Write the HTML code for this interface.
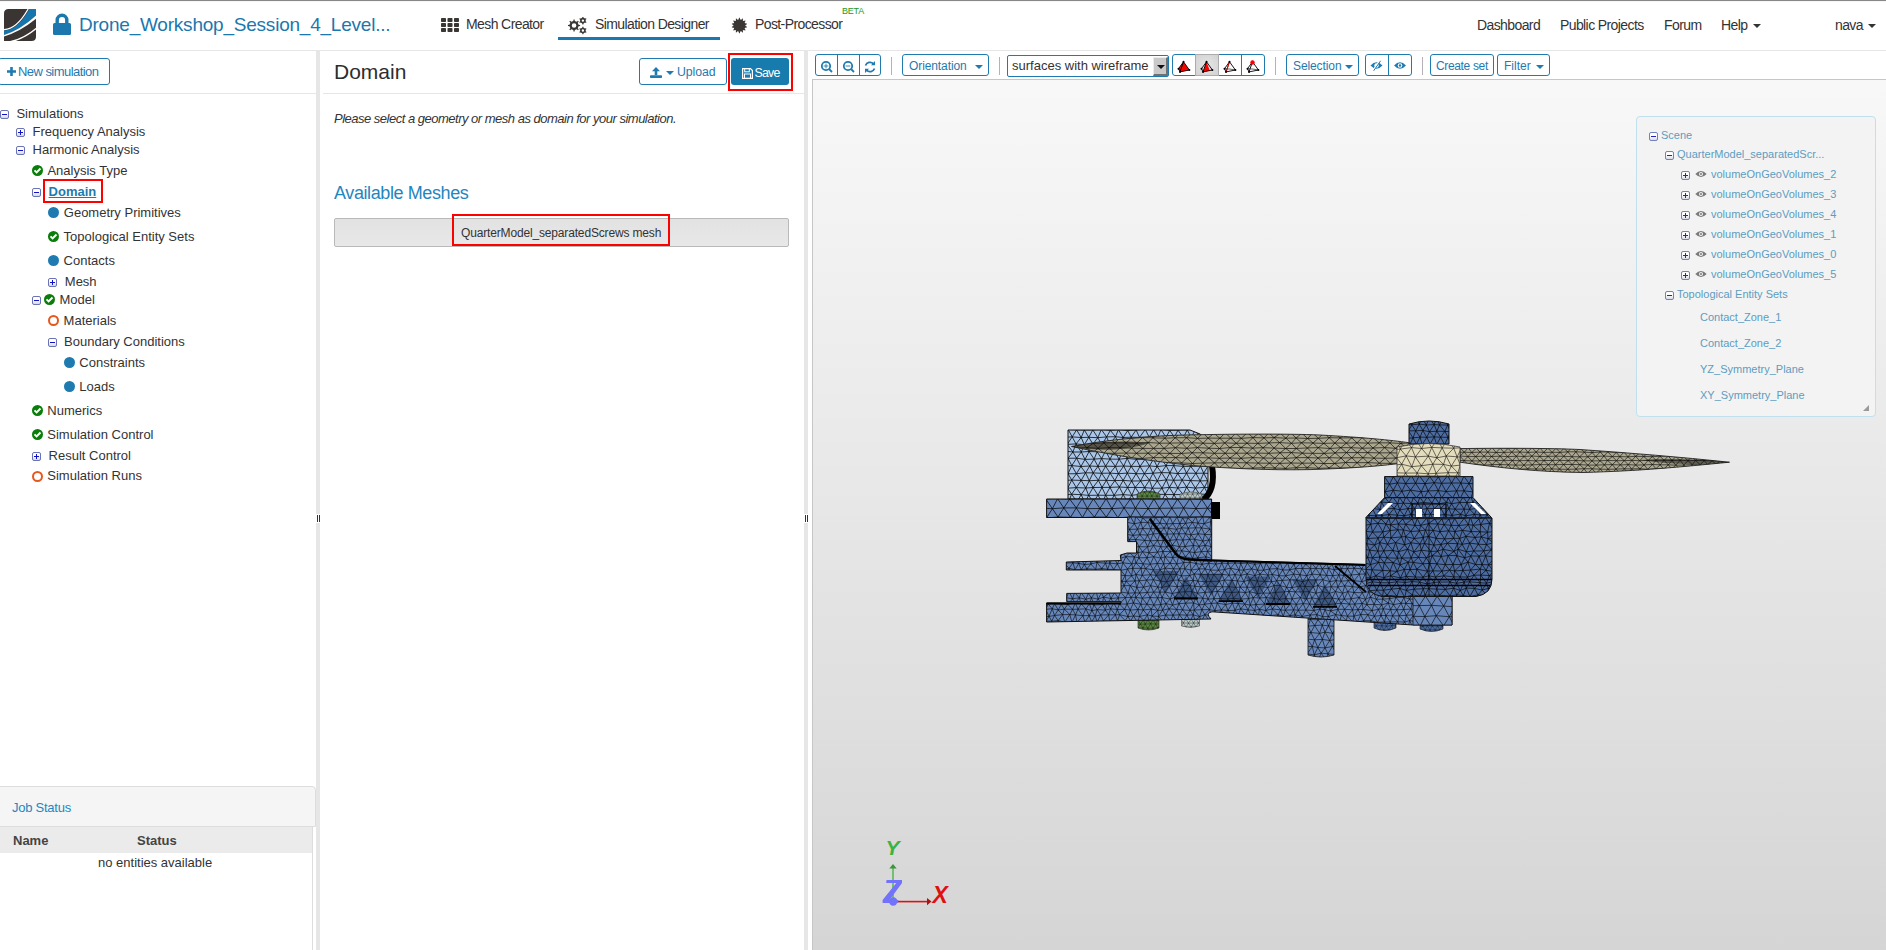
<!DOCTYPE html>
<html><head><meta charset="utf-8">
<style>
*{box-sizing:border-box;margin:0;padding:0}
html,body{width:1886px;height:950px;overflow:hidden;background:#fff;font-family:"Liberation Sans",sans-serif;color:#333}
.a{position:absolute;white-space:nowrap}
.nav{font-size:14px;letter-spacing:-0.6px;color:#333;line-height:18px}
.split{background:#e6e6e6}
.tree{font-size:13px;color:#333;line-height:15px}
.pm{width:9px;height:9px;border:1px solid #6a74b4;border-radius:2px;background:linear-gradient(#fff 40%,#d6d9e4)}
.pm::before{content:"";position:absolute;left:1px;top:2.6px;width:5px;height:1.6px;background:#1010c8}
.pm.plus::after{content:"";position:absolute;left:2.7px;top:0.9px;width:1.6px;height:5px;background:#1010c8}
.chk{width:11px;height:11px;border-radius:50%;background:#0b7d0b}
.dot{width:11px;height:11px;border-radius:50%;background:#1f7ab0}
.ring{width:11px;height:11px;border-radius:50%;border:2.1px solid #e5581e}
.btn{border:1px solid #1f7ab0;border-radius:3px;color:#1f7ab0;font-size:12px;background:#fff;line-height:20px}
.tb{top:54px;height:22px;line-height:22px}
.sep{top:57px;width:1px;height:18px;background:#b8b0b8}
.st{font-size:11px;color:#5e9cc0;line-height:13px}
.spm{width:9px;height:9px;border:1px solid #7680bb;border-radius:2px;background:linear-gradient(#fff 40%,#d9dce6)}
.spm::before{content:"";position:absolute;left:1px;top:2.9px;width:5px;height:1.2px;background:#2020d0}
.spm.plus::after{content:"";position:absolute;left:2.9px;top:1px;width:1.2px;height:5px;background:#2020d0}
.caret{width:0;height:0;border-left:4px solid transparent;border-right:4px solid transparent;border-top:4px solid currentColor}
</style></head>
<body>
<!-- HEADER -->
<div class="a" style="left:0;top:0;width:1886px;height:1px;background:#888"></div>
<div class="a" style="left:0;top:1px;width:1886px;height:1px;background:#f6f6f6"></div>
<div class="a" style="left:0;top:50px;width:1886px;height:1px;background:#e6e6e6"></div>

<svg class="a" style="left:4px;top:9px" width="32" height="32" viewBox="0 0 32 32">
  <defs><clipPath id="lc"><path d="M4.5 0 H32 V27.5 Q32 32 27.5 32 H0 V4.5 Q0 0 4.5 0Z"/></clipPath></defs>
  <g clip-path="url(#lc)">
    <rect width="32" height="32" fill="#3a3532"/>
    <path d="M0 21.4 Q13.4 21.5 25.4 0 L32 0 L32 6.6 Q16 21.3 0 26 Z" fill="#1576ad"/>
    <path d="M-1 20.6 Q12.6 20.8 24.4 -0.5" fill="none" stroke="#fff" stroke-width="1.2"/>
    <path d="M0 26 Q16 21.3 32 6.6 L32 9.8 Q16 22.8 0 27.5 Z" fill="#fff"/>
    <path d="M5 33 Q19.5 30.2 32.6 19.1" fill="none" stroke="#fff" stroke-width="1.5"/>
  </g>
</svg>
<svg class="a" style="left:53px;top:13px" width="18" height="22" viewBox="0 0 18 22">
  <path d="M4.2 10 V7 A4.8 4.8 0 0 1 13.8 7 V10" fill="none" stroke="#1b77ad" stroke-width="3.4"/>
  <rect x="0" y="10" width="18" height="12" rx="1.5" fill="#1b77ad"/>
</svg>
<div class="a" style="left:79px;top:13px;font-size:19px;line-height:24px;color:#1b77ad;letter-spacing:-0.22px">Drone_Workshop_Session_4_Level...</div>

<!-- nav icons -->
<svg class="a" style="left:441px;top:18px" width="18" height="14" viewBox="0 0 18 14">
  <g fill="#3a3634">
  <rect x="0" y="0" width="5" height="4" rx="0.8"/><rect x="6.5" y="0" width="5" height="4" rx="0.8"/><rect x="13" y="0" width="5" height="4" rx="0.8"/>
  <rect x="0" y="5" width="5" height="4" rx="0.8"/><rect x="6.5" y="5" width="5" height="4" rx="0.8"/><rect x="13" y="5" width="5" height="4" rx="0.8"/>
  <rect x="0" y="10" width="5" height="4" rx="0.8"/><rect x="6.5" y="10" width="5" height="4" rx="0.8"/><rect x="13" y="10" width="5" height="4" rx="0.8"/>
  </g>
</svg>
<div class="a nav" style="left:466px;top:15px">Mesh Creator</div>
<svg class="a" style="left:566px;top:17px" width="22" height="18" viewBox="0 0 22 18"><path d="M7.33 3.96 L7.48 2.43 L8.62 2.43 L8.77 3.96 L10.75 4.78 L11.94 3.80 L12.75 4.61 L11.77 5.80 L12.59 7.78 L14.12 7.93 L14.12 9.07 L12.59 9.22 L11.77 11.20 L12.75 12.39 L11.94 13.20 L10.75 12.22 L8.77 13.04 L8.62 14.57 L7.48 14.57 L7.33 13.04 L5.35 12.22 L4.16 13.20 L3.35 12.39 L4.33 11.20 L3.51 9.22 L1.98 9.07 L1.98 7.93 L3.51 7.78 L4.33 5.80 L3.35 4.61 L4.16 3.80 L5.35 4.78ZM10.35 8.50 A2.3 2.3 0 1 0 5.75 8.50 A2.3 2.3 0 1 0 10.35 8.50Z M16.24 0.78 L16.41 -0.27 L17.39 -0.27 L17.56 0.78 L19.01 1.61 L20.01 1.24 L20.50 2.09 L19.68 2.76 L19.68 4.44 L20.50 5.11 L20.01 5.96 L19.01 5.59 L17.56 6.42 L17.39 7.47 L16.41 7.47 L16.24 6.42 L14.79 5.59 L13.79 5.96 L13.30 5.11 L14.12 4.44 L14.12 2.76 L13.30 2.09 L13.79 1.24 L14.79 1.61ZM18.10 3.60 A1.2 1.2 0 1 0 15.70 3.60 A1.2 1.2 0 1 0 18.10 3.60Z M16.24 10.68 L16.41 9.63 L17.39 9.63 L17.56 10.68 L19.01 11.51 L20.01 11.14 L20.50 11.99 L19.68 12.66 L19.68 14.34 L20.50 15.01 L20.01 15.86 L19.01 15.49 L17.56 16.32 L17.39 17.37 L16.41 17.37 L16.24 16.32 L14.79 15.49 L13.79 15.86 L13.30 15.01 L14.12 14.34 L14.12 12.66 L13.30 11.99 L13.79 11.14 L14.79 11.51ZM18.10 13.50 A1.2 1.2 0 1 0 15.70 13.50 A1.2 1.2 0 1 0 18.10 13.50Z" fill="#3a3634" fill-rule="evenodd"/></svg>
<div class="a nav" style="left:595px;top:15px">Simulation Designer</div>
<div class="a" style="left:558px;top:37px;width:162px;height:3px;background:#1b77ad"></div>
<svg class="a" style="left:729px;top:17px" width="20" height="18" viewBox="0 0 20 18"><path d="M9.58 2.46 L10.05 0.81 L10.75 0.81 L11.22 2.46 L12.29 2.70 L13.43 1.42 L14.05 1.72 L13.76 3.41 L14.62 4.09 L16.20 3.43 L16.63 3.97 L15.64 5.37 L16.11 6.36 L17.82 6.45 L17.98 7.13 L16.48 7.95 L16.48 9.05 L17.98 9.87 L17.82 10.55 L16.11 10.64 L15.64 11.63 L16.63 13.03 L16.20 13.57 L14.62 12.91 L13.76 13.59 L14.05 15.28 L13.43 15.58 L12.29 14.30 L11.22 14.54 L10.75 16.19 L10.05 16.19 L9.58 14.54 L8.51 14.30 L7.37 15.58 L6.75 15.28 L7.04 13.59 L6.18 12.91 L4.60 13.57 L4.17 13.03 L5.16 11.63 L4.69 10.64 L2.98 10.55 L2.82 9.87 L4.32 9.05 L4.32 7.95 L2.82 7.13 L2.98 6.45 L4.69 6.36 L5.16 5.37 L4.17 3.97 L4.60 3.43 L6.18 4.09 L7.04 3.41 L6.75 1.72 L7.37 1.42 L8.51 2.70Z" fill="#3a3634"/></svg>
<div class="a nav" style="left:755px;top:15px">Post-Processor</div>
<div class="a" style="left:842px;top:6px;font-size:9px;line-height:10px;color:#1d9a1d;letter-spacing:-0.2px">BETA</div>

<div class="a nav" style="left:1477px;top:16px">Dashboard</div>
<div class="a nav" style="left:1560px;top:16px">Public Projects</div>
<div class="a nav" style="left:1664px;top:16px">Forum</div>
<div class="a nav" style="left:1721px;top:16px">Help</div>
<div class="a caret" style="left:1753px;top:24px;color:#333"></div>
<div class="a nav" style="left:1835px;top:16px">nava</div>
<div class="a caret" style="left:1868px;top:24px;color:#333"></div>

<!-- SPLITTERS -->
<div class="a split" style="left:316px;top:51px;width:4px;height:899px"></div>
<div class="a split" style="left:804px;top:51px;width:4px;height:899px"></div>
<div class="a" style="left:316px;top:514px;width:4px;height:9px;background:#fff"></div>
<div class="a" style="left:804px;top:514px;width:4px;height:9px;background:#fff"></div>
<div class="a" style="left:317px;top:515px;width:1px;height:7px;background:#333"></div>
<div class="a" style="left:319px;top:515px;width:1px;height:7px;background:#333"></div>
<div class="a" style="left:805px;top:515px;width:1px;height:7px;background:#333"></div>
<div class="a" style="left:807px;top:515px;width:1px;height:7px;background:#333"></div>

<!-- LEFT PANEL -->
<div class="a btn" style="left:-2px;top:58px;width:112px;height:27px;font-size:13px;letter-spacing:-0.55px;line-height:25px;padding-left:19px">New simulation</div>
<svg class="a" style="left:7px;top:67px" width="9" height="9" viewBox="0 0 9 9"><path d="M3.2 0h2.6v3.2H9v2.6H5.8V9H3.2V5.8H0V3.2h3.2z" fill="#1f7ab0"/></svg>
<div class="a" style="left:0;top:93px;width:316px;height:1px;background:#e6e6e6"></div>
<div class="a pm" style="left:0px;top:110px"></div>
<div class="a tree" style="left:16.4px;top:105.7px">Simulations</div>
<div class="a pm plus" style="left:16px;top:128px"></div>
<div class="a tree" style="left:32.6px;top:123.7px">Frequency Analysis</div>
<div class="a pm" style="left:16px;top:146px"></div>
<div class="a tree" style="left:32.6px;top:141.7px">Harmonic Analysis</div>
<div class="a chk" style="left:32px;top:165px"><svg width="11" height="11" viewBox="0 0 11 11" style="display:block"><path d="M2.5 5.4 L4.6 7.5 L8.5 3.5" stroke="#fff" stroke-width="1.9" fill="none"/></svg></div>
<div class="a tree" style="left:47.4px;top:162.5px">Analysis Type</div>
<div class="a pm" style="left:32px;top:188px"></div>
<div class="a tree" style="left:48.6px;top:183.6px;font-weight:bold;color:#1f7ab0;text-decoration:underline">Domain</div>
<div class="a dot" style="left:48px;top:207px"></div>
<div class="a tree" style="left:63.8px;top:204.8px">Geometry Primitives</div>
<div class="a chk" style="left:48px;top:231px"><svg width="11" height="11" viewBox="0 0 11 11" style="display:block"><path d="M2.5 5.4 L4.6 7.5 L8.5 3.5" stroke="#fff" stroke-width="1.9" fill="none"/></svg></div>
<div class="a tree" style="left:63.6px;top:228.5px">Topological Entity Sets</div>
<div class="a dot" style="left:48px;top:255px"></div>
<div class="a tree" style="left:63.6px;top:252.8px">Contacts</div>
<div class="a pm plus" style="left:48px;top:278px"></div>
<div class="a tree" style="left:64.8px;top:273.7px">Mesh</div>
<div class="a pm" style="left:32px;top:296px"></div>
<div class="a chk" style="left:44px;top:294px"><svg width="11" height="11" viewBox="0 0 11 11" style="display:block"><path d="M2.5 5.4 L4.6 7.5 L8.5 3.5" stroke="#fff" stroke-width="1.9" fill="none"/></svg></div>
<div class="a tree" style="left:59.5px;top:291.6px">Model</div>
<div class="a ring" style="left:48px;top:315px"></div>
<div class="a tree" style="left:63.6px;top:312.6px">Materials</div>
<div class="a pm" style="left:48px;top:338px"></div>
<div class="a tree" style="left:64.1px;top:334.0px">Boundary Conditions</div>
<div class="a dot" style="left:64px;top:357px"></div>
<div class="a tree" style="left:79.3px;top:354.7px">Constraints</div>
<div class="a dot" style="left:64px;top:381px"></div>
<div class="a tree" style="left:79.3px;top:378.6px">Loads</div>
<div class="a chk" style="left:32px;top:405px"><svg width="11" height="11" viewBox="0 0 11 11" style="display:block"><path d="M2.5 5.4 L4.6 7.5 L8.5 3.5" stroke="#fff" stroke-width="1.9" fill="none"/></svg></div>
<div class="a tree" style="left:47.3px;top:402.5px">Numerics</div>
<div class="a chk" style="left:32px;top:429px"><svg width="11" height="11" viewBox="0 0 11 11" style="display:block"><path d="M2.5 5.4 L4.6 7.5 L8.5 3.5" stroke="#fff" stroke-width="1.9" fill="none"/></svg></div>
<div class="a tree" style="left:47.3px;top:426.6px">Simulation Control</div>
<div class="a pm plus" style="left:32px;top:452px"></div>
<div class="a tree" style="left:48.6px;top:447.7px">Result Control</div>
<div class="a ring" style="left:32px;top:471px"></div>
<div class="a tree" style="left:47.3px;top:468.2px">Simulation Runs</div>
<div class="a" style="left:43px;top:179px;width:60px;height:24px;border:2px solid #f00"></div>

<!-- Job status -->
<div class="a" style="left:-1px;top:786px;width:317px;height:41px;background:#f5f5f5;border:1px solid #ddd;border-top-right-radius:4px"></div>
<div class="a" style="left:12px;top:800px;font-size:13px;line-height:16px;color:#1f86c0;letter-spacing:-0.25px">Job Status</div>
<div class="a" style="left:0;top:827px;width:313px;height:26px;background:#ebebeb"></div>
<div class="a" style="left:312px;top:827px;width:1px;height:123px;background:#ddd"></div>
<div class="a" style="left:13px;top:833px;font-size:13px;line-height:15px;font-weight:bold;color:#444">Name</div>
<div class="a" style="left:137px;top:833px;font-size:13px;line-height:15px;font-weight:bold;color:#444">Status</div>
<div class="a" style="left:98px;top:855px;font-size:13px;line-height:15px;color:#333">no entities available</div>

<!-- MIDDLE PANEL -->
<div class="a" style="left:334px;top:59px;font-size:21px;line-height:26px;color:#2d2d2d">Domain</div>
<div class="a btn" style="left:639px;top:58px;width:88px;height:27px;line-height:27px;padding-left:37px;font-size:12.3px;letter-spacing:-0.1px">Upload</div>
<svg class="a" style="left:650px;top:67px" width="12" height="11" viewBox="0 0 12 11">
  <path d="M6 0 L10 4.2 H7.3 V8 H4.7 V4.2 H2 Z" fill="#1f7ab0"/><rect x="0" y="8.2" width="12" height="2.8" rx="0.8" fill="#1f7ab0"/>
</svg>
<div class="a caret" style="left:666px;top:71px;color:#1f7ab0"></div>
<div class="a" style="left:731px;top:58px;width:58px;height:27px;background:#177bae;border-radius:3px"></div>
<svg class="a" style="left:742px;top:68px" width="11" height="11" viewBox="0 0 11 11">
  <path d="M0.6 0.6 H8.5 L10.4 2.5 V10.4 H0.6 Z" fill="none" stroke="#fff" stroke-width="1.2"/>
  <rect x="2.7" y="0.6" width="4.6" height="3.2" fill="none" stroke="#fff" stroke-width="1"/>
  <rect x="2.5" y="6" width="6" height="4.4" fill="none" stroke="#fff" stroke-width="1"/>
</svg>
<div class="a" style="left:754.5px;top:65.5px;font-size:12.3px;line-height:15px;color:#fff;letter-spacing:-0.75px">Save</div>
<div class="a" style="left:728px;top:53px;width:65px;height:38px;border:2px solid #f00"></div>
<div class="a" style="left:323px;top:93px;width:481px;height:1px;background:#e6e6e6"></div>

<div class="a" style="left:334px;top:111px;font-size:13px;line-height:15px;font-style:italic;color:#333;letter-spacing:-0.5px">Please select a geometry or mesh as domain for your simulation.</div>
<div class="a" style="left:334px;top:183px;font-size:18px;line-height:21px;color:#1f86c0;letter-spacing:-0.4px">Available Meshes</div>
<div class="a" style="left:334px;top:218px;width:455px;height:29px;background:linear-gradient(#e2e2e2,#e8e8e8);border:1px solid #b9b9b9;border-radius:2px"></div>
<div class="a" style="left:461px;top:226px;font-size:12px;line-height:14px;color:#333;letter-spacing:-0.16px">QuarterModel_separatedScrews mesh</div>
<div class="a" style="left:452px;top:214px;width:218px;height:32px;border:2px solid #f00"></div>

<!-- VIEWER -->
<div class="a" style="left:812px;top:79px;width:1074px;height:871px;border-top:1px solid #c6c6c6;border-left:1px solid #c6c6c6;background:linear-gradient(#f8f8f8,#d5d5d5)"></div>

<!-- toolbar -->
<div class="a btn tb" style="left:815px;width:66px"></div>
<div class="a" style="left:837px;top:54px;width:1px;height:22px;background:#1f7ab0"></div>
<div class="a" style="left:859px;top:54px;width:1px;height:22px;background:#1f7ab0"></div>
<svg class="a" style="left:820px;top:59.5px" width="56" height="14" viewBox="0 0 56 14">
  <g fill="none" stroke="#1f7ab0" stroke-width="1.8">
   <circle cx="6" cy="6" r="4.2"/><line x1="9" y1="9" x2="12" y2="12"/>
   <circle cx="28" cy="6" r="4.2"/><line x1="31" y1="9" x2="34" y2="12"/>
  </g>
  <g stroke="#1f7ab0" stroke-width="0.9"><line x1="3.6" y1="6" x2="8.4" y2="6"/><line x1="6" y1="3.6" x2="6" y2="8.4"/><line x1="25.6" y1="6" x2="30.4" y2="6"/></g>
  <path d="M45.5 5.5 A4.8 4.8 0 0 1 53.5 3.8 M54.5 8.5 A4.8 4.8 0 0 1 46.5 10.2" fill="none" stroke="#1f7ab0" stroke-width="1.8"/>
  <path d="M55 1 V5.2 H51 Z M45 13 V8.8 H49 Z" fill="#1f7ab0"/>
</svg>
<div class="a sep" style="left:891px"></div>
<div class="a btn tb" style="left:902px;width:87px;padding-left:6px;letter-spacing:-0.1px">Orientation</div>
<div class="a caret" style="left:975px;top:65px;color:#1f7ab0"></div>
<div class="a sep" style="left:999px"></div>
<div class="a" style="left:1007px;top:55px;width:162px;height:22px;border:1px solid #1f7ab0;border-radius:2px;background:#fff"></div>
<div class="a" style="left:1012px;top:58px;font-size:13px;line-height:16px;color:#333">surfaces with wireframe</div>
<div class="a" style="left:1153px;top:57px;width:15px;height:19px;background:#c9c9c9;border-style:solid;border-color:#ececec #707070 #707070 #ececec;border-width:1px 2px 2px 1px"></div>
<div class="a" style="left:1156.5px;top:64.5px;width:0;height:0;border-left:4px solid transparent;border-right:4px solid transparent;border-top:4px solid #111"></div>
<div class="a btn tb" style="left:1172px;width:93px"></div>
<div class="a" style="left:1195px;top:54px;width:24px;height:22px;background:radial-gradient(#e6e6e6,#d2d2d2);border:1px solid #acacac"></div>
<div class="a" style="left:1241px;top:54px;width:1px;height:22px;background:#1f7ab0"></div>
<svg class="a" style="left:1176px;top:58px" width="86" height="16" viewBox="0 0 86 16"><path d="M7.5 3.8 L2.5 10.7 L4.0 13.9 L13.4 12.0Z" fill="#f00"/><path d="M7.5 3.8 L2.5 10.7 M7.5 3.8 L13.4 12.0 M7.5 3.8 L4.0 13.9 M2.5 10.7 L4.0 13.9 M4.0 13.9 L13.4 12.0" stroke="#000" stroke-width="0.9" fill="none"/><circle cx="7.5" cy="3.8" r="1" fill="#000"/><circle cx="2.5" cy="10.7" r="1" fill="#000"/><circle cx="13.4" cy="12.0" r="1" fill="#000"/><circle cx="4.0" cy="13.9" r="1" fill="#000"/><path d="M30.5 3.8 L27.0 13.9 L33.8 12.8Z" fill="#f00"/><path d="M30.5 3.8 L25.5 10.7 M30.5 3.8 L36.4 12.0 M30.5 3.8 L27.0 13.9 M25.5 10.7 L27.0 13.9 M27.0 13.9 L36.4 12.0" stroke="#000" stroke-width="0.9" fill="none"/><circle cx="30.5" cy="3.8" r="1" fill="#000"/><circle cx="25.5" cy="10.7" r="1" fill="#000"/><circle cx="36.4" cy="12.0" r="1" fill="#000"/><circle cx="27.0" cy="13.9" r="1" fill="#000"/><path d="M53.5 3.8 L48.5 10.7 M53.5 3.8 L59.4 12.0 M53.5 3.8 L50.0 13.9 M48.5 10.7 L50.0 13.9 M50.0 13.9 L59.4 12.0" stroke="#000" stroke-width="0.9" fill="none"/><path d="M48.5 10.7 Q54 10.8 59.4 12.0" stroke="#000" stroke-width="0.6" fill="none"/><path d="M53.5 3.8 L50.6 12.8" stroke="#f00" stroke-width="0.9"/><circle cx="53.5" cy="3.8" r="1" fill="#000"/><circle cx="48.5" cy="10.7" r="1" fill="#000"/><circle cx="59.4" cy="12.0" r="1" fill="#000"/><circle cx="50.0" cy="13.9" r="1" fill="#000"/><path d="M76.5 3.8 L71.5 10.7 M76.5 3.8 L82.4 12.0 M76.5 3.8 L73.0 13.9 M71.5 10.7 L73.0 13.9 M73.0 13.9 L82.4 12.0" stroke="#000" stroke-width="0.9" fill="none"/><path d="M71.5 10.7 Q77 10.8 82.4 12.0" stroke="#000" stroke-width="0.6" fill="none"/><circle cx="76.5" cy="3.8" r="1" fill="#000"/><circle cx="71.5" cy="10.7" r="1" fill="#000"/><circle cx="82.4" cy="12.0" r="1" fill="#000"/><circle cx="73.0" cy="13.9" r="1" fill="#000"/><circle cx="76.5" cy="4.5" r="2.2" fill="#f00"/></svg>
<div class="a sep" style="left:1275px"></div>
<div class="a btn tb" style="left:1286px;width:73px;padding-left:6px;letter-spacing:-0.1px">Selection</div>
<div class="a caret" style="left:1345px;top:65px;color:#1f7ab0"></div>
<div class="a btn tb" style="left:1365px;width:47px"></div>
<div class="a" style="left:1388px;top:54px;width:1px;height:22px;background:#1f7ab0"></div>
<svg class="a" style="left:1370px;top:60px" width="38" height="11" viewBox="0 0 38 11">
  <path d="M0.5 5.5 Q6.5 -1 12.5 5.5 Q6.5 12 0.5 5.5Z" fill="#1f7ab0"/><circle cx="6.5" cy="5.5" r="2.2" fill="#fff"/><line x1="3" y1="10.5" x2="10" y2="0.5" stroke="#fff" stroke-width="1.6"/><line x1="3.6" y1="10.8" x2="10.6" y2="0.8" stroke="#1f7ab0" stroke-width="1"/>
  <path d="M24 5.5 Q30 -1 36 5.5 Q30 12 24 5.5Z" fill="#1f7ab0"/><circle cx="30" cy="5.5" r="2.3" fill="#fff"/><circle cx="30" cy="5.5" r="1.2" fill="#1f7ab0"/>
</svg>
<div class="a sep" style="left:1422px"></div>
<div class="a btn tb" style="left:1430px;width:64px;padding-left:5px;letter-spacing:-0.35px">Create set</div>
<div class="a btn tb" style="left:1497px;width:53px;padding-left:6px">Filter</div>
<div class="a caret" style="left:1536px;top:65px;color:#1f7ab0"></div>

<!-- scene tree panel -->
<div class="a" style="left:1636px;top:116px;width:240px;height:301px;background:#f3f3f3;border:1px solid #bfe0ec;border-radius:4px"></div>
<div class="a spm" style="left:1649px;top:132px"></div>
<div class="a st" style="left:1661px;top:129px">Scene</div>
<div class="a spm" style="left:1665px;top:151px"></div>
<div class="a st" style="left:1677px;top:148px">QuarterModel_separatedScr...</div>
<div class="a spm plus" style="left:1681px;top:171px"></div>
<svg class="a" style="left:1695px;top:170px" width="12" height="8" viewBox="0 0 12 8"><path d="M0.3 4 Q6 -2 11.7 4 Q6 10 0.3 4Z" fill="#7a7a7a"/><circle cx="6" cy="4" r="2" fill="#f3f3f3"/><circle cx="6" cy="4" r="1" fill="#7a7a7a"/></svg>
<div class="a st" style="left:1711px;top:168px">volumeOnGeoVolumes_2</div>
<div class="a spm plus" style="left:1681px;top:191px"></div>
<svg class="a" style="left:1695px;top:190px" width="12" height="8" viewBox="0 0 12 8"><path d="M0.3 4 Q6 -2 11.7 4 Q6 10 0.3 4Z" fill="#7a7a7a"/><circle cx="6" cy="4" r="2" fill="#f3f3f3"/><circle cx="6" cy="4" r="1" fill="#7a7a7a"/></svg>
<div class="a st" style="left:1711px;top:188px">volumeOnGeoVolumes_3</div>
<div class="a spm plus" style="left:1681px;top:211px"></div>
<svg class="a" style="left:1695px;top:210px" width="12" height="8" viewBox="0 0 12 8"><path d="M0.3 4 Q6 -2 11.7 4 Q6 10 0.3 4Z" fill="#7a7a7a"/><circle cx="6" cy="4" r="2" fill="#f3f3f3"/><circle cx="6" cy="4" r="1" fill="#7a7a7a"/></svg>
<div class="a st" style="left:1711px;top:208px">volumeOnGeoVolumes_4</div>
<div class="a spm plus" style="left:1681px;top:231px"></div>
<svg class="a" style="left:1695px;top:230px" width="12" height="8" viewBox="0 0 12 8"><path d="M0.3 4 Q6 -2 11.7 4 Q6 10 0.3 4Z" fill="#7a7a7a"/><circle cx="6" cy="4" r="2" fill="#f3f3f3"/><circle cx="6" cy="4" r="1" fill="#7a7a7a"/></svg>
<div class="a st" style="left:1711px;top:228px">volumeOnGeoVolumes_1</div>
<div class="a spm plus" style="left:1681px;top:251px"></div>
<svg class="a" style="left:1695px;top:250px" width="12" height="8" viewBox="0 0 12 8"><path d="M0.3 4 Q6 -2 11.7 4 Q6 10 0.3 4Z" fill="#7a7a7a"/><circle cx="6" cy="4" r="2" fill="#f3f3f3"/><circle cx="6" cy="4" r="1" fill="#7a7a7a"/></svg>
<div class="a st" style="left:1711px;top:248px">volumeOnGeoVolumes_0</div>
<div class="a spm plus" style="left:1681px;top:271px"></div>
<svg class="a" style="left:1695px;top:270px" width="12" height="8" viewBox="0 0 12 8"><path d="M0.3 4 Q6 -2 11.7 4 Q6 10 0.3 4Z" fill="#7a7a7a"/><circle cx="6" cy="4" r="2" fill="#f3f3f3"/><circle cx="6" cy="4" r="1" fill="#7a7a7a"/></svg>
<div class="a st" style="left:1711px;top:268px">volumeOnGeoVolumes_5</div>
<div class="a spm" style="left:1665px;top:291px"></div>
<div class="a st" style="left:1677px;top:288px">Topological Entity Sets</div>
<div class="a st" style="left:1700px;top:311px">Contact_Zone_1</div>
<div class="a st" style="left:1700px;top:337px">Contact_Zone_2</div>
<div class="a st" style="left:1700px;top:363px">YZ_Symmetry_Plane</div>
<div class="a st" style="left:1700px;top:389px">XY_Symmetry_Plane</div>
<svg class="a" style="left:1862px;top:404px" width="8" height="8" viewBox="0 0 8 8"><path d="M7 1 L7 7 L1 7 Z" fill="#999"/></svg>

<!-- model -->
<svg class="a" style="left:1040px;top:410px" width="700" height="260" viewBox="1040 410 700 260">
<clipPath id="c1"><path d="M1068 430 H1190 L1200 434 L1208 440 V499 H1068 Z"/></clipPath>
<path d="M1068 430 H1190 L1200 434 L1208 440 V499 H1068 Z" fill="#aac6e8"/>
<path clip-path="url(#c1)" d="M1059.2 429.6 1068.2 429.5 1076.6 429.8 1084.3 430 1092.8 429.9 1101.3 429.5 1110.4 430.4 1118.4 429.6 1127.7 430.6 1136.1 429.9 1145.3 429.4 1153.6 429.7 1160.9 429.5 1169.7 430.4 1178 430.1 1187.2 429.8 1195.6 429.4 1203.3 429.6 1212.8 429.9M1063.5 437.3 1072.2 436.9 1081.2 437.5 1088.8 437.3 1097.8 437.7 1106.6 436.9 1115.5 436.7 1123.1 437.5 1131.2 437.2 1139.5 437.4 1149.2 437.3 1157.9 437 1166.1 437.3 1174.4 437.1 1183.3 437.8 1191.2 437.4 1199 437.5 1208.5 437.8 1217.3 436.9M1059.3 444.6 1067.2 444.4 1076 443.9 1084.3 444.7 1092.9 444.1 1101.8 444.9 1109.8 444.3 1119.1 444.9 1128 444.9 1135.6 444.3 1144.3 444.9 1153.7 444 1161 444.1 1169.6 444.4 1178.6 444.1 1186.2 444.3 1195.3 444.5 1204.7 444.6 1212.5 444.6M1064 451 1072.9 452 1081.3 452 1089.1 451.5 1097.1 451.8 1105.5 451 1114.3 451.2 1123 451 1131 451.2 1139.6 451.4 1148 452.1 1157.4 451.2 1165.4 451.4 1174 451.1 1183.3 452.2 1191.2 451.6 1199.1 451.1 1208 451.3 1217.3 451.2M1058.7 459.4 1068 458.3 1076.6 458.2 1085 459.4 1094.1 459.1 1101.6 458.6 1110 459.1 1119.1 459.2 1127.2 458.4 1136.5 459.4 1145.1 459.2 1153.5 459.1 1161.1 458.8 1169.8 458.2 1177.7 458.5 1186.6 459 1196.2 458.7 1204.7 459.4 1213.2 458.6M1063.3 465.7 1071.8 465.6 1080.9 466.5 1089.8 466 1098 466.4 1105.6 466.2 1115.4 466.4 1123.7 466 1131.2 466.4 1140 466.4 1149.5 465.9 1157.1 466.6 1166.1 465.6 1173.7 465.6 1183.4 466.4 1190.7 466.4 1200.5 466.2 1208 466.1 1216.2 465.4M1060.3 473.4 1068 473.8 1076.4 473.7 1085.5 472.8 1093.1 472.9 1101.6 473.3 1110.1 473.1 1118.4 473.7 1127.3 473.1 1136.1 473.7 1144.4 473.7 1153 473.2 1161.5 472.6 1169.9 472.8 1177.7 473.6 1186.5 473.2 1195.9 473.3 1203.7 473.2 1212.6 473.6M1063.1 480.5 1071.8 480.1 1081.2 480.4 1089.3 480.7 1098.4 480.3 1106.4 480.4 1114.8 480.6 1123.2 480.4 1131.7 481 1140.6 480.9 1149.5 480.1 1157.3 481 1166.3 479.9 1173.6 480.3 1182.1 480.1 1190.6 480.6 1200.2 480.9 1207.7 480.7 1217 479.9M1060.1 488.2 1067.6 488.2 1076.3 487.6 1085.8 488 1093 487.5 1102 487.4 1110 487.4 1119.4 487 1127.6 487.5 1135.2 487.4 1144.7 487.6 1152.3 488.2 1162 488.2 1169.4 487.3 1177.8 488 1186.6 487.1 1195.4 488.1 1204.5 487.3 1211.9 488.1M1063.9 495.1 1071.6 494.2 1081.1 494.7 1088.6 495.4 1098 495.2 1105.6 495.3 1114.1 495.3 1123.2 494.6 1131.8 495.3 1139.9 494.3 1148.8 494.5 1156.6 494.4 1165 494.4 1173.9 494.6 1183.2 494.5 1191.3 494.4 1199.5 494.2 1207.9 494.2 1217.1 494.9M1059 502 1068.7 501.5 1077 501.9 1085 502.4 1093.3 502 1102.3 502.6 1110.2 502.4 1119.3 502.2 1127.3 501.8 1135.3 501.5 1143.8 502.3 1152.6 501.6 1160.8 502.4 1170.6 502.2 1178.2 501.7 1186.7 501.9 1195 501.9 1203.6 502.6 1213.3 502.1M1059.2 429.6 1063.5 437.3 1068.2 429.5 1072.2 436.9 1076.6 429.8 1081.2 437.5 1084.3 430 1088.8 437.3 1092.8 429.9 1097.8 437.7 1101.3 429.5 1106.6 436.9 1110.4 430.4 1115.5 436.7 1118.4 429.6 1123.1 437.5 1127.7 430.6 1131.2 437.2 1136.1 429.9 1139.5 437.4 1145.3 429.4 1149.2 437.3 1153.6 429.7 1157.9 437 1160.9 429.5 1166.1 437.3 1169.7 430.4 1174.4 437.1 1178 430.1 1183.3 437.8 1187.2 429.8 1191.2 437.4 1195.6 429.4 1199 437.5 1203.3 429.6 1208.5 437.8 1212.8 429.9 1217.3 436.9M1059.3 444.6 1063.5 437.3 1067.2 444.4 1072.2 436.9 1076 443.9 1081.2 437.5 1084.3 444.7 1088.8 437.3 1092.9 444.1 1097.8 437.7 1101.8 444.9 1106.6 436.9 1109.8 444.3 1115.5 436.7 1119.1 444.9 1123.1 437.5 1128 444.9 1131.2 437.2 1135.6 444.3 1139.5 437.4 1144.3 444.9 1149.2 437.3 1153.7 444 1157.9 437 1161 444.1 1166.1 437.3 1169.6 444.4 1174.4 437.1 1178.6 444.1 1183.3 437.8 1186.2 444.3 1191.2 437.4 1195.3 444.5 1199 437.5 1204.7 444.6 1208.5 437.8 1212.5 444.6 1217.3 436.9M1059.3 444.6 1064 451 1067.2 444.4 1072.9 452 1076 443.9 1081.3 452 1084.3 444.7 1089.1 451.5 1092.9 444.1 1097.1 451.8 1101.8 444.9 1105.5 451 1109.8 444.3 1114.3 451.2 1119.1 444.9 1123 451 1128 444.9 1131 451.2 1135.6 444.3 1139.6 451.4 1144.3 444.9 1148 452.1 1153.7 444 1157.4 451.2 1161 444.1 1165.4 451.4 1169.6 444.4 1174 451.1 1178.6 444.1 1183.3 452.2 1186.2 444.3 1191.2 451.6 1195.3 444.5 1199.1 451.1 1204.7 444.6 1208 451.3 1212.5 444.6 1217.3 451.2M1058.7 459.4 1064 451 1068 458.3 1072.9 452 1076.6 458.2 1081.3 452 1085 459.4 1089.1 451.5 1094.1 459.1 1097.1 451.8 1101.6 458.6 1105.5 451 1110 459.1 1114.3 451.2 1119.1 459.2 1123 451 1127.2 458.4 1131 451.2 1136.5 459.4 1139.6 451.4 1145.1 459.2 1148 452.1 1153.5 459.1 1157.4 451.2 1161.1 458.8 1165.4 451.4 1169.8 458.2 1174 451.1 1177.7 458.5 1183.3 452.2 1186.6 459 1191.2 451.6 1196.2 458.7 1199.1 451.1 1204.7 459.4 1208 451.3 1213.2 458.6 1217.3 451.2M1058.7 459.4 1063.3 465.7 1068 458.3 1071.8 465.6 1076.6 458.2 1080.9 466.5 1085 459.4 1089.8 466 1094.1 459.1 1098 466.4 1101.6 458.6 1105.6 466.2 1110 459.1 1115.4 466.4 1119.1 459.2 1123.7 466 1127.2 458.4 1131.2 466.4 1136.5 459.4 1140 466.4 1145.1 459.2 1149.5 465.9 1153.5 459.1 1157.1 466.6 1161.1 458.8 1166.1 465.6 1169.8 458.2 1173.7 465.6 1177.7 458.5 1183.4 466.4 1186.6 459 1190.7 466.4 1196.2 458.7 1200.5 466.2 1204.7 459.4 1208 466.1 1213.2 458.6 1216.2 465.4M1060.3 473.4 1063.3 465.7 1068 473.8 1071.8 465.6 1076.4 473.7 1080.9 466.5 1085.5 472.8 1089.8 466 1093.1 472.9 1098 466.4 1101.6 473.3 1105.6 466.2 1110.1 473.1 1115.4 466.4 1118.4 473.7 1123.7 466 1127.3 473.1 1131.2 466.4 1136.1 473.7 1140 466.4 1144.4 473.7 1149.5 465.9 1153 473.2 1157.1 466.6 1161.5 472.6 1166.1 465.6 1169.9 472.8 1173.7 465.6 1177.7 473.6 1183.4 466.4 1186.5 473.2 1190.7 466.4 1195.9 473.3 1200.5 466.2 1203.7 473.2 1208 466.1 1212.6 473.6 1216.2 465.4M1060.3 473.4 1063.1 480.5 1068 473.8 1071.8 480.1 1076.4 473.7 1081.2 480.4 1085.5 472.8 1089.3 480.7 1093.1 472.9 1098.4 480.3 1101.6 473.3 1106.4 480.4 1110.1 473.1 1114.8 480.6 1118.4 473.7 1123.2 480.4 1127.3 473.1 1131.7 481 1136.1 473.7 1140.6 480.9 1144.4 473.7 1149.5 480.1 1153 473.2 1157.3 481 1161.5 472.6 1166.3 479.9 1169.9 472.8 1173.6 480.3 1177.7 473.6 1182.1 480.1 1186.5 473.2 1190.6 480.6 1195.9 473.3 1200.2 480.9 1203.7 473.2 1207.7 480.7 1212.6 473.6 1217 479.9M1060.1 488.2 1063.1 480.5 1067.6 488.2 1071.8 480.1 1076.3 487.6 1081.2 480.4 1085.8 488 1089.3 480.7 1093 487.5 1098.4 480.3 1102 487.4 1106.4 480.4 1110 487.4 1114.8 480.6 1119.4 487 1123.2 480.4 1127.6 487.5 1131.7 481 1135.2 487.4 1140.6 480.9 1144.7 487.6 1149.5 480.1 1152.3 488.2 1157.3 481 1162 488.2 1166.3 479.9 1169.4 487.3 1173.6 480.3 1177.8 488 1182.1 480.1 1186.6 487.1 1190.6 480.6 1195.4 488.1 1200.2 480.9 1204.5 487.3 1207.7 480.7 1211.9 488.1 1217 479.9M1060.1 488.2 1063.9 495.1 1067.6 488.2 1071.6 494.2 1076.3 487.6 1081.1 494.7 1085.8 488 1088.6 495.4 1093 487.5 1098 495.2 1102 487.4 1105.6 495.3 1110 487.4 1114.1 495.3 1119.4 487 1123.2 494.6 1127.6 487.5 1131.8 495.3 1135.2 487.4 1139.9 494.3 1144.7 487.6 1148.8 494.5 1152.3 488.2 1156.6 494.4 1162 488.2 1165 494.4 1169.4 487.3 1173.9 494.6 1177.8 488 1183.2 494.5 1186.6 487.1 1191.3 494.4 1195.4 488.1 1199.5 494.2 1204.5 487.3 1207.9 494.2 1211.9 488.1 1217.1 494.9M1059 502 1063.9 495.1 1068.7 501.5 1071.6 494.2 1077 501.9 1081.1 494.7 1085 502.4 1088.6 495.4 1093.3 502 1098 495.2 1102.3 502.6 1105.6 495.3 1110.2 502.4 1114.1 495.3 1119.3 502.2 1123.2 494.6 1127.3 501.8 1131.8 495.3 1135.3 501.5 1139.9 494.3 1143.8 502.3 1148.8 494.5 1152.6 501.6 1156.6 494.4 1160.8 502.4 1165 494.4 1170.6 502.2 1173.9 494.6 1178.2 501.7 1183.2 494.5 1186.7 501.9 1191.3 494.4 1195 501.9 1199.5 494.2 1203.6 502.6 1207.9 494.2 1213.3 502.1 1217.1 494.9" fill="none" stroke="#000" stroke-width="0.9" stroke-opacity="0.85"/>
<path d="M1068 430 H1190 L1200 434 L1208 440 V499 H1068 Z" fill="none" stroke="#111" stroke-width="1"/>
<path d="M1212 466 Q1216 490 1203 500" fill="none" stroke="#000" stroke-width="6"/>
<clipPath id="c2"><path d="M1137 499 V494 Q1148 488 1160 494 V499 Z"/></clipPath>
<path d="M1137 499 V494 Q1148 488 1160 494 V499 Z" fill="#5d8a45"/>
<path clip-path="url(#c2)" d="M1131.8 488.2 1136.9 487.9 1141.7 487.9 1147 488 1151.8 488 1156.7 487.9 1161.8 488M1134.2 491.8 1139.4 491.9 1144.6 492 1149.7 492.1 1154.6 492.2 1159.4 491.9 1164.8 491.8M1132.1 496.1 1136.7 496.2 1142.2 496.1 1147.1 496.1 1151.8 496 1157 496.2 1162.2 496.2M1134.6 500.2 1139.6 500.1 1144.3 499.8 1149.3 499.9 1154.3 500.2 1159.5 500.1 1164.6 500.1M1131.8 488.2 1134.2 491.8 1136.9 487.9 1139.4 491.9 1141.7 487.9 1144.6 492 1147 488 1149.7 492.1 1151.8 488 1154.6 492.2 1156.7 487.9 1159.4 491.9 1161.8 488 1164.8 491.8M1132.1 496.1 1134.2 491.8 1136.7 496.2 1139.4 491.9 1142.2 496.1 1144.6 492 1147.1 496.1 1149.7 492.1 1151.8 496 1154.6 492.2 1157 496.2 1159.4 491.9 1162.2 496.2 1164.8 491.8M1132.1 496.1 1134.6 500.2 1136.7 496.2 1139.6 500.1 1142.2 496.1 1144.3 499.8 1147.1 496.1 1149.3 499.9 1151.8 496 1154.3 500.2 1157 496.2 1159.5 500.1 1162.2 496.2 1164.6 500.1" fill="none" stroke="#000" stroke-width="0.6" stroke-opacity="0.6"/>
<path d="M1137 499 V494 Q1148 488 1160 494 V499 Z" fill="none" stroke="#222" stroke-width="0.6"/>
<clipPath id="c3"><path d="M1180 499 V494 Q1191 490 1202 494 V499 Z"/></clipPath>
<path d="M1180 499 V494 Q1191 490 1202 494 V499 Z" fill="#bccbc8"/>
<path clip-path="url(#c3)" d="M1175 489.8 1180.2 490.1 1185 490 1190.1 489.8 1195.1 489.9 1199.7 489.9 1205.1 489.9M1177.6 494.2 1182.5 493.9 1187.5 494.1 1192.7 494.1 1197.6 493.8 1202.3 493.9 1207.6 493.9M1175 497.8 1179.7 497.9 1185.1 498.1 1190.1 497.9 1195 498 1200 497.8 1205.2 497.9M1177.8 502.2 1182.2 502 1187.7 502.2 1192.5 501.9 1197.3 502.2 1202.3 502 1207.3 502M1175 489.8 1177.6 494.2 1180.2 490.1 1182.5 493.9 1185 490 1187.5 494.1 1190.1 489.8 1192.7 494.1 1195.1 489.9 1197.6 493.8 1199.7 489.9 1202.3 493.9 1205.1 489.9 1207.6 493.9M1175 497.8 1177.6 494.2 1179.7 497.9 1182.5 493.9 1185.1 498.1 1187.5 494.1 1190.1 497.9 1192.7 494.1 1195 498 1197.6 493.8 1200 497.8 1202.3 493.9 1205.2 497.9 1207.6 493.9M1175 497.8 1177.8 502.2 1179.7 497.9 1182.2 502 1185.1 498.1 1187.7 502.2 1190.1 497.9 1192.5 501.9 1195 498 1197.3 502.2 1200 497.8 1202.3 502 1205.2 497.9 1207.3 502" fill="none" stroke="#000" stroke-width="0.6" stroke-opacity="0.6"/>
<path d="M1180 499 V494 Q1191 490 1202 494 V499 Z" fill="none" stroke="#444" stroke-width="0.6"/>
<clipPath id="c4"><path d="M1138 620 H1159 V628 Q1148.5 632 1138 628 Z"/></clipPath>
<path d="M1138 620 H1159 V628 Q1148.5 632 1138 628 Z" fill="#5a8540"/>
<path clip-path="url(#c4)" d="M1133.3 619.8 1138.2 620 1143.2 620.1 1147.8 620.2 1153 619.8 1157.7 620 1163 619.9M1135.3 623.9 1140.4 624.2 1145.2 624.1 1150.7 623.8 1155.8 624.1 1160.7 623.9 1165.4 623.9M1133.3 628 1137.9 628 1142.9 627.8 1147.8 628.2 1152.9 628.2 1157.8 627.9 1163 627.9M1135.4 632.2 1140.7 632.1 1145.6 632.2 1150.8 632 1155.6 631.8 1160.6 632 1165.7 632.1M1132.9 635.8 1138.3 635.8 1143 635.9 1147.9 636.1 1153.3 635.9 1158.1 635.9 1163 635.9M1133.3 619.8 1135.3 623.9 1138.2 620 1140.4 624.2 1143.2 620.1 1145.2 624.1 1147.8 620.2 1150.7 623.8 1153 619.8 1155.8 624.1 1157.7 620 1160.7 623.9 1163 619.9 1165.4 623.9M1133.3 628 1135.3 623.9 1137.9 628 1140.4 624.2 1142.9 627.8 1145.2 624.1 1147.8 628.2 1150.7 623.8 1152.9 628.2 1155.8 624.1 1157.8 627.9 1160.7 623.9 1163 627.9 1165.4 623.9M1133.3 628 1135.4 632.2 1137.9 628 1140.7 632.1 1142.9 627.8 1145.6 632.2 1147.8 628.2 1150.8 632 1152.9 628.2 1155.6 631.8 1157.8 627.9 1160.6 632 1163 627.9 1165.7 632.1M1132.9 635.8 1135.4 632.2 1138.3 635.8 1140.7 632.1 1143 635.9 1145.6 632.2 1147.9 636.1 1150.8 632 1153.3 635.9 1155.6 631.8 1158.1 635.9 1160.6 632 1163 635.9 1165.7 632.1" fill="none" stroke="#000" stroke-width="0.6" stroke-opacity="0.6"/>
<path d="M1138 620 H1159 V628 Q1148.5 632 1138 628 Z" fill="none" stroke="#222" stroke-width="0.6"/>
<clipPath id="c5"><path d="M1181.5 619 H1199.5 V626 Q1190.5 629 1181.5 626 Z"/></clipPath>
<path d="M1181.5 619 H1199.5 V626 Q1190.5 629 1181.5 626 Z" fill="#b8c8c5"/>
<path clip-path="url(#c5)" d="M1175.8 618.8 1180.8 619.2 1186 618.9 1191.2 619.2 1196 618.8 1200.8 618.8M1178.4 622.8 1183.3 622.9 1188.5 623.2 1193.6 623 1198.4 623 1203.4 622.9M1175.7 626.9 1181.3 626.8 1186 627.1 1191.2 626.9 1195.9 626.9 1200.9 627M1178.8 631.2 1183.7 630.8 1188.2 631.1 1193.7 631 1198.6 630.8 1203.4 631.2M1175.8 618.8 1178.4 622.8 1180.8 619.2 1183.3 622.9 1186 618.9 1188.5 623.2 1191.2 619.2 1193.6 623 1196 618.8 1198.4 623 1200.8 618.8 1203.4 622.9M1175.7 626.9 1178.4 622.8 1181.3 626.8 1183.3 622.9 1186 627.1 1188.5 623.2 1191.2 626.9 1193.6 623 1195.9 626.9 1198.4 623 1200.9 627 1203.4 622.9M1175.7 626.9 1178.8 631.2 1181.3 626.8 1183.7 630.8 1186 627.1 1188.2 631.1 1191.2 626.9 1193.7 631 1195.9 626.9 1198.6 630.8 1200.9 627 1203.4 631.2" fill="none" stroke="#000" stroke-width="0.6" stroke-opacity="0.6"/>
<path d="M1181.5 619 H1199.5 V626 Q1190.5 629 1181.5 626 Z" fill="none" stroke="#444" stroke-width="0.6"/>
<clipPath id="c6"><path d="M1308 612 H1334 V655 Q1321 659 1308 655 Z"/></clipPath>
<path d="M1308 612 H1334 V655 Q1321 659 1308 655 Z" fill="#6787bb"/>
<path clip-path="url(#c6)" d="M1301.8 612.7 1309.1 611.5 1314.1 611.3 1322.1 612.3 1330.1 612.4 1336.4 612.5M1304.4 619.1 1310.4 619.5 1317.9 619.8 1325.8 618.6 1331.6 618.5 1339.8 619.4M1300.1 625.2 1308.1 626.2 1314.7 625.5 1322.2 625.1 1328.5 625.9 1337.1 626.3M1305.4 633 1310.9 632.5 1319.6 633.4 1325 632.1 1332.5 633.3 1339.3 632.5M1301.4 640.8 1307.3 639.1 1314.6 639.8 1322.4 639.4 1329.7 640.5 1336 639.4M1305.6 646.6 1312.3 646.5 1317.8 647.5 1325 647.9 1332.5 646.4 1338.8 646.8M1301.4 654.9 1307.2 653.8 1314.3 654.9 1321.1 653.1 1327.9 653.8 1337 654.7M1305.1 662 1312.5 660.7 1317.7 661.8 1326.1 660.1 1332.9 660.8 1339.2 660.7M1301.8 612.7 1304.4 619.1 1309.1 611.5 1310.4 619.5 1314.1 611.3 1317.9 619.8 1322.1 612.3 1325.8 618.6 1330.1 612.4 1331.6 618.5 1336.4 612.5 1339.8 619.4M1300.1 625.2 1304.4 619.1 1308.1 626.2 1310.4 619.5 1314.7 625.5 1317.9 619.8 1322.2 625.1 1325.8 618.6 1328.5 625.9 1331.6 618.5 1337.1 626.3 1339.8 619.4M1300.1 625.2 1305.4 633 1308.1 626.2 1310.9 632.5 1314.7 625.5 1319.6 633.4 1322.2 625.1 1325 632.1 1328.5 625.9 1332.5 633.3 1337.1 626.3 1339.3 632.5M1301.4 640.8 1305.4 633 1307.3 639.1 1310.9 632.5 1314.6 639.8 1319.6 633.4 1322.4 639.4 1325 632.1 1329.7 640.5 1332.5 633.3 1336 639.4 1339.3 632.5M1301.4 640.8 1305.6 646.6 1307.3 639.1 1312.3 646.5 1314.6 639.8 1317.8 647.5 1322.4 639.4 1325 647.9 1329.7 640.5 1332.5 646.4 1336 639.4 1338.8 646.8M1301.4 654.9 1305.6 646.6 1307.2 653.8 1312.3 646.5 1314.3 654.9 1317.8 647.5 1321.1 653.1 1325 647.9 1327.9 653.8 1332.5 646.4 1337 654.7 1338.8 646.8M1301.4 654.9 1305.1 662 1307.2 653.8 1312.5 660.7 1314.3 654.9 1317.7 661.8 1321.1 653.1 1326.1 660.1 1327.9 653.8 1332.9 660.8 1337 654.7 1339.2 660.7" fill="none" stroke="#000" stroke-width="0.8" stroke-opacity="0.75"/>
<path d="M1308 612 H1334 V655 Q1321 659 1308 655 Z" fill="none" stroke="#111" stroke-width="0.8"/>
<clipPath id="c7"><path d="M1374 622 H1396 V628 Q1385 633 1374 628 Z"/></clipPath>
<path d="M1374 622 H1396 V628 Q1385 633 1374 628 Z" fill="#4d6da2"/>
<path clip-path="url(#c7)" d="M1368.7 621.6 1373.8 621.9 1379.5 621.7 1384.5 621.8 1388.9 622.3 1394.3 621.9 1398.5 622M1371.4 626.3 1376.2 625.9 1381.9 625.6 1386.4 626.2 1391.8 625.6 1396 625.7 1401.9 625.8M1369.2 630.3 1373.8 629.8 1379.5 630.1 1383.8 630.2 1388.8 629.8 1393.5 630.2 1399.4 630.1M1371.9 633.6 1376.2 634 1382 634.4 1386.4 633.8 1391.4 634 1396.9 633.7 1401.8 634.2M1368.7 621.6 1371.4 626.3 1373.8 621.9 1376.2 625.9 1379.5 621.7 1381.9 625.6 1384.5 621.8 1386.4 626.2 1388.9 622.3 1391.8 625.6 1394.3 621.9 1396 625.7 1398.5 622 1401.9 625.8M1369.2 630.3 1371.4 626.3 1373.8 629.8 1376.2 625.9 1379.5 630.1 1381.9 625.6 1383.8 630.2 1386.4 626.2 1388.8 629.8 1391.8 625.6 1393.5 630.2 1396 625.7 1399.4 630.1 1401.9 625.8M1369.2 630.3 1371.9 633.6 1373.8 629.8 1376.2 634 1379.5 630.1 1382 634.4 1383.8 630.2 1386.4 633.8 1388.8 629.8 1391.4 634 1393.5 630.2 1396.9 633.7 1399.4 630.1 1401.8 634.2" fill="none" stroke="#000" stroke-width="0.6" stroke-opacity="0.6"/>
<path d="M1374 622 H1396 V628 Q1385 633 1374 628 Z" fill="none" stroke="#111" stroke-width="0.6"/>
<clipPath id="c8"><path d="M1420 622 H1443 V629 Q1431.5 634 1420 629 Z"/></clipPath>
<path d="M1420 622 H1443 V629 Q1431.5 634 1420 629 Z" fill="#4d6da2"/>
<path clip-path="url(#c8)" d="M1415.3 622.2 1420.1 621.9 1424.8 621.9 1430.3 621.7 1434.7 622.2 1439.7 621.7 1444.5 622M1417.3 626.4 1422.9 626.4 1427.3 625.7 1432.1 626 1437.7 626 1442.2 625.9 1447.6 626.1M1415.2 630.3 1420.2 629.7 1425.3 629.8 1430.1 629.9 1435.2 629.8 1439.7 629.8 1444.7 630.3M1417.6 633.9 1422.4 634.4 1427.5 633.8 1432.8 634.1 1438 633.7 1442.5 634.3 1447.8 634.3M1414.5 637.8 1419.6 637.8 1425.5 638.1 1430.4 637.9 1435.4 638 1439.8 638.2 1445.4 637.7M1415.3 622.2 1417.3 626.4 1420.1 621.9 1422.9 626.4 1424.8 621.9 1427.3 625.7 1430.3 621.7 1432.1 626 1434.7 622.2 1437.7 626 1439.7 621.7 1442.2 625.9 1444.5 622 1447.6 626.1M1415.2 630.3 1417.3 626.4 1420.2 629.7 1422.9 626.4 1425.3 629.8 1427.3 625.7 1430.1 629.9 1432.1 626 1435.2 629.8 1437.7 626 1439.7 629.8 1442.2 625.9 1444.7 630.3 1447.6 626.1M1415.2 630.3 1417.6 633.9 1420.2 629.7 1422.4 634.4 1425.3 629.8 1427.5 633.8 1430.1 629.9 1432.8 634.1 1435.2 629.8 1438 633.7 1439.7 629.8 1442.5 634.3 1444.7 630.3 1447.8 634.3M1414.5 637.8 1417.6 633.9 1419.6 637.8 1422.4 634.4 1425.5 638.1 1427.5 633.8 1430.4 637.9 1432.8 634.1 1435.4 638 1438 633.7 1439.8 638.2 1442.5 634.3 1445.4 637.7 1447.8 634.3" fill="none" stroke="#000" stroke-width="0.6" stroke-opacity="0.6"/>
<path d="M1420 622 H1443 V629 Q1431.5 634 1420 629 Z" fill="none" stroke="#111" stroke-width="0.6"/>
<clipPath id="c9"><path d="M1046.6 499 H1211.6 V517.5 H1046.6 Z"/></clipPath>
<path d="M1046.6 499 H1211.6 V517.5 H1046.6 Z" fill="#6787bb"/>
<path clip-path="url(#c9)" d="M1034.1 499.1 1045.7 498.9 1057.6 498.7 1069.7 499.1 1082.2 498.7 1093.4 498.8 1106.2 498.7 1117.8 498.7 1130.4 499 1141.5 498.6 1153.9 499 1166.2 498.6 1177.6 499.2 1189.9 498.8 1201.8 499.4 1213.8 499.1M1039.8 508.1 1052.4 508.7 1063.8 507.9 1076.3 507.9 1087.4 508.6 1099.9 508.5 1111.9 508.6 1124 507.9 1135.4 508.2 1148.2 508.6 1159.5 508.3 1171.8 508.2 1183.6 508 1196 508.6 1207.5 508.2 1220.4 508.6M1033.6 517 1046.5 517.9 1058 517 1070.5 517.3 1082.5 517.5 1094.4 517.1 1106.3 517.1 1117.9 517.7 1130.4 517.1 1141.7 517.3 1154 517.3 1165.5 517.2 1178.3 517.8 1189.4 517.5 1202.3 517 1214.4 517M1040.1 526.6 1052.2 526.4 1063.9 526.7 1075.9 526.8 1087.9 526.5 1099.4 526.7 1112 526.3 1124.3 526.9 1135.9 526.3 1148 526.2 1159.6 526.5 1171.5 526.5 1184 526.2 1196.2 526.2 1208.3 526.9 1220 526.2M1034.1 499.1 1039.8 508.1 1045.7 498.9 1052.4 508.7 1057.6 498.7 1063.8 507.9 1069.7 499.1 1076.3 507.9 1082.2 498.7 1087.4 508.6 1093.4 498.8 1099.9 508.5 1106.2 498.7 1111.9 508.6 1117.8 498.7 1124 507.9 1130.4 499 1135.4 508.2 1141.5 498.6 1148.2 508.6 1153.9 499 1159.5 508.3 1166.2 498.6 1171.8 508.2 1177.6 499.2 1183.6 508 1189.9 498.8 1196 508.6 1201.8 499.4 1207.5 508.2 1213.8 499.1 1220.4 508.6M1033.6 517 1039.8 508.1 1046.5 517.9 1052.4 508.7 1058 517 1063.8 507.9 1070.5 517.3 1076.3 507.9 1082.5 517.5 1087.4 508.6 1094.4 517.1 1099.9 508.5 1106.3 517.1 1111.9 508.6 1117.9 517.7 1124 507.9 1130.4 517.1 1135.4 508.2 1141.7 517.3 1148.2 508.6 1154 517.3 1159.5 508.3 1165.5 517.2 1171.8 508.2 1178.3 517.8 1183.6 508 1189.4 517.5 1196 508.6 1202.3 517 1207.5 508.2 1214.4 517 1220.4 508.6M1033.6 517 1040.1 526.6 1046.5 517.9 1052.2 526.4 1058 517 1063.9 526.7 1070.5 517.3 1075.9 526.8 1082.5 517.5 1087.9 526.5 1094.4 517.1 1099.4 526.7 1106.3 517.1 1112 526.3 1117.9 517.7 1124.3 526.9 1130.4 517.1 1135.9 526.3 1141.7 517.3 1148 526.2 1154 517.3 1159.6 526.5 1165.5 517.2 1171.5 526.5 1178.3 517.8 1184 526.2 1189.4 517.5 1196.2 526.2 1202.3 517 1208.3 526.9 1214.4 517 1220 526.2" fill="none" stroke="#000" stroke-width="0.9" stroke-opacity="0.8"/>
<path d="M1046.6 499 H1211.6 V517.5 H1046.6 Z" fill="none" stroke="#111" stroke-width="1"/>
<rect x="1211" y="502" width="9" height="17" fill="#000"/>
<clipPath id="c10"><path d="M1127.7 517 H1211.7 V560 L1365.5 564.4 L1382 565 V596 H1452 V625 H1413 L1212 611.8 Q1205 613 1211 619 L1046.6 622 V603 H1121 V601.6 H1066.7 V593.4 L1121 593 V570 H1066.3 V562 L1121 560.5 L1120.3 555 L1127 553 H1136.5 V541.6 H1127.7 Z"/></clipPath>
<path d="M1127.7 517 H1211.7 V560 L1365.5 564.4 L1382 565 V596 H1452 V625 H1413 L1212 611.8 Q1205 613 1211 619 L1046.6 622 V603 H1121 V601.6 H1066.7 V593.4 L1121 593 V570 H1066.3 V562 L1121 560.5 L1120.3 555 L1127 553 H1136.5 V541.6 H1127.7 Z" fill="#6787bb"/>
<path clip-path="url(#c10)" d="M1039.5 516.7 1047.3 516.2 1053.5 518.1 1059.6 517.7 1064.6 518.1 1072 518 1079.7 516.2 1085.8 518 1090.3 516.7 1098.7 516.2 1105.6 516.5 1111.9 516.2 1117.5 517.9 1123.2 516.5 1130.5 516.6 1135.7 516.3 1142.6 518 1150.5 517.9 1155.6 517.6 1161.9 517.1 1169.9 516.7 1177 517.1 1182.7 517.9 1187.9 518.1 1195.9 516.8 1202.8 516.5 1209.9 517.2 1214.6 517.6 1221.3 516.3 1228.7 516 1235.4 516.4 1241.4 518.1 1247.7 517.4 1253.5 515.9 1259.2 516.2 1267.3 516.8 1273.5 517.9 1279 516.4 1286.9 515.9 1291.6 516.7 1298.4 516.7 1305.2 517.2 1312.7 516.3 1319.3 516.9 1324.5 518 1331.3 516.2 1337.4 517.3 1346 517.6 1351.2 516.5 1356.6 517.3 1364.7 516.7 1371.4 516.9 1378.7 517.5 1383.3 517.9 1389.2 517.1 1396.7 516.4 1402.3 517.6 1408.6 517.1 1417.7 516.2 1422.2 517.2 1429.5 517.3 1436.9 516.3 1442 516.6 1447.7 517.9 1456.3 517.5M1041.4 523.6 1049.9 522.7 1056.4 522.7 1061.5 521.9 1068 521.8 1074.8 523.4 1082.3 523.6 1088.8 522.3 1094.9 522.7 1102.1 522.9 1107.1 523.1 1115.6 522.2 1121.8 521.7 1126.6 522.2 1134.4 523.8 1140.9 522.4 1147.8 522.4 1152.5 523.7 1160.1 523.2 1166.7 523.9 1172.7 523.6 1179.8 523.6 1185.6 523.3 1192.4 522.4 1197.9 523.1 1204.1 523.7 1210.8 521.7 1217.1 523.8 1224.3 522 1229.9 521.8 1238.3 523.1 1244.8 523.3 1249.5 523 1256.9 523.5 1264.6 523.7 1269 523.6 1277.9 523.8 1282.1 522.1 1288.7 521.8 1297.2 523.5 1303.1 523.5 1309.6 522.3 1314.6 521.9 1323 522.1 1328.2 522.6 1333.9 522.3 1341.1 523.3 1347.9 522.4 1356 522.8 1362.2 523.1 1366.4 522.6 1374.1 523.4 1380.3 523.3 1387.4 522.2 1394.8 521.9 1401.1 522.1 1405.4 522.1 1414 523.9 1418.4 522.8 1426.2 523.5 1431.9 522.8 1438.8 523.5 1445.1 523.8 1451.6 522.2 1459.3 522.8M1038.4 528.9 1044.8 529.2 1053.1 529.2 1059.4 528.3 1065.2 528.4 1073.1 527.7 1079.6 527.5 1084.2 528.1 1092.6 528.6 1097.7 529.5 1103.8 528.5 1111.1 529.2 1118.2 528.9 1123.6 528.2 1129.5 529.4 1137.5 529.1 1142.6 528.5 1150.8 528.8 1155.5 528.5 1164.1 528 1168.6 528.2 1176.6 529.4 1181.5 527.8 1188.3 528.2 1195.6 527.8 1201.5 527.9 1209.8 529.1 1213.9 529.6 1220.4 528.3 1229.4 529.3 1235.2 528.5 1240.1 528.9 1246.4 527.9 1253.7 527.6 1260.2 529.3 1267.5 528.6 1273.9 528.5 1279 528.8 1286.2 529.1 1294.1 528.4 1299.7 529.2 1305.8 528 1313.1 529.5 1319.8 529 1326.5 529 1332.4 528.5 1338 528.9 1343.9 528.4 1352.3 529.1 1358.4 528 1364.3 528.5 1371.3 528.4 1378 529.6 1383.1 528.9 1391.3 528.4 1397 529.7 1402.2 528.7 1409.1 529.2 1417.7 528.6 1421.9 528.8 1429.6 529.1 1436 528.9 1443.4 528.6 1448.7 529.6 1454.7 529M1042.4 535 1048.2 535.5 1055.3 533.4 1061.6 534.2 1067.4 534.2 1075 534.8 1081.3 533.9 1087.5 534.9 1096 534.5 1100.5 535.1 1107.4 533.8 1113.2 535 1121.6 534.7 1127.2 534.5 1133 535.4 1139.8 534.7 1147.6 535.1 1153.2 533.9 1159.9 533.6 1167.2 534.1 1173.7 533.9 1178.9 533.8 1185.5 533.7 1190.9 534.9 1198.1 533.8 1204.7 534.4 1211.5 534.7 1218.7 534.1 1226 535.2 1230 535.1 1238.9 535 1243.2 535.1 1251.1 533.3 1255.9 535.4 1264.2 533.8 1269.1 533.6 1276 535 1282.8 533.6 1290.9 535.1 1295.3 535.3 1303.1 535 1309.7 535.3 1316.6 535.2 1321.4 534.8 1328.8 534.9 1335.1 535.3 1341.9 533.9 1347.5 533.6 1354.7 533.4 1361.2 533.6 1367.7 534.4 1374.4 535.2 1379.4 535.2 1387.2 534.5 1394.2 535.2 1399.9 534.2 1408 533.4 1413.6 534.7 1418.4 534.6 1426.8 535.4 1432.3 535.5 1439.3 534.4 1446.9 533.4 1452.9 534.7 1458.3 535.2M1039.1 540.1 1046.1 540.8 1051.7 540.1 1058.8 540.3 1066.4 539.7 1072.9 540 1078.5 539.7 1085 541.3 1091.9 540.9 1097.5 539.8 1103.9 540.4 1111.4 540.8 1116.2 540.7 1125.1 540.3 1129.2 539.8 1135.6 539.5 1144.7 540.4 1150.4 540.8 1157.6 540.5 1163.3 540.5 1170 540.4 1176.5 539.6 1183 540.1 1189.7 539.3 1194.6 539.2 1202.8 541.1 1208.9 539.9 1215.9 540.8 1221.7 539.7 1227.4 540 1234 540 1241.4 541.2 1246.3 540.4 1252.7 539.3 1261.4 540.4 1268.2 540.1 1272.1 539.9 1280.3 541.2 1287.8 540.1 1292.8 539.3 1299.9 539.6 1305 539.1 1311.1 540.6 1317.9 541.2 1324.3 541 1331 539.1 1339.1 539.6 1345.7 539.5 1350.2 540.8 1358.6 541 1365.1 539.3 1371.4 540.7 1377.4 541.2 1383.3 541.2 1391.1 539.1 1395.6 540.5 1404.4 539.3 1409.5 540.7 1415.6 541 1423 539.2 1429.1 540.4 1435.8 540.6 1441.5 540.9 1448.6 540.5 1455.9 540M1042.4 546.6 1050.5 546.6 1055.9 545.5 1061 547.1 1069.3 546.7 1074.8 546.2 1083.1 546.7 1088.5 545.6 1094.5 546.9 1100.9 546.4 1108 546.9 1115.1 545.5 1119.4 545.5 1127 546.2 1134.6 546.9 1139 546.7 1147.6 546.8 1153.5 545.5 1160.7 546.7 1166.8 546.9 1172.3 545.1 1179.4 546.7 1184.9 546.6 1193.5 545.4 1199 546.4 1205.2 545.3 1211.1 546.6 1219.1 545.9 1223.6 546.7 1232 545.4 1238 546.9 1245.3 546 1250.7 546.2 1256.4 545.3 1262.9 546.5 1269.9 546.1 1276.5 546 1282.3 545 1291.1 545.7 1295.1 546.3 1303.6 545.2 1309.5 545.7 1315.8 544.9 1320.9 547.1 1329.8 546 1335.4 545.5 1342.5 545.8 1349.5 546.6 1355.6 547 1360.6 545 1366.9 545.3 1373.1 545 1380.9 546.8 1387.1 547 1394.9 545 1400.5 545.8 1405.7 547 1412.6 546.1 1420.1 547 1426.7 545.8 1432.6 545.2 1440.6 547.1 1445 545 1451.6 545.7 1459.9 546.9M1040.4 550.8 1046.8 552.3 1052.9 552.9 1057.8 551 1066.2 552.8 1072.5 551.3 1078.8 552.4 1083.9 551.4 1090.8 551 1097.9 551.1 1103.8 551 1111.5 550.7 1118.1 551.1 1122.7 552.8 1129.7 552.8 1138 552.7 1142.5 551.7 1148.9 552.8 1157.5 552.1 1162.9 551.4 1170.4 551.7 1176.4 551 1181.7 550.8 1189.6 551.9 1194.5 552.6 1201.3 551.6 1207.5 551.3 1216 551.4 1220.6 551.8 1227.5 552.7 1233.4 552.9 1239.8 552.7 1248 551.2 1253.9 551.3 1259.8 551.1 1266.6 552.9 1274.9 552.8 1278.9 551.3 1287.6 550.8 1293.6 551.3 1300.8 550.7 1306.9 551.4 1311.5 550.7 1319.9 551.9 1324.6 551.7 1333.2 551.2 1338.7 551 1344.1 552.4 1352.1 551.1 1356.8 550.9 1364.8 551.8 1370.4 551.1 1377.8 552.3 1384.9 552 1389.7 550.8 1397.7 551.6 1404.1 550.8 1410.9 551.4 1417.5 552.6 1423 550.7 1430.6 551.7 1437 551.3 1441.6 552.5 1448.6 551 1455.1 552M1041.4 557.6 1049.1 557.6 1054.7 558.1 1063.1 558.4 1068.2 558.1 1074.9 558.2 1080.5 558.4 1089.5 557.6 1094.8 557.7 1101.4 556.5 1109.1 557 1113.4 556.7 1120.1 558.3 1125.9 556.7 1134.3 556.9 1138.9 557.8 1147 557.7 1153.8 556.7 1160.8 558.1 1165 556.8 1172.7 557.6 1178.6 556.8 1185.5 556.8 1192.5 558.4 1197.8 557.8 1205.9 556.8 1212.7 558.6 1217.9 557.4 1225.7 557.7 1231 558.6 1238.5 557.2 1243.5 557.2 1250.6 558.7 1258.1 558.5 1264.6 558.4 1269 557.6 1278 558.6 1282.5 557.4 1290.1 557.3 1296.3 556.6 1302.6 557.6 1307.9 556.8 1317.1 558.2 1323.5 557.9 1329.6 558.5 1336.3 556.6 1342.1 557.1 1348.7 557.1 1354.9 558.6 1361.6 557 1367.8 557.5 1375.5 557.1 1380.2 557.9 1386.2 557.8 1395 557.6 1399.6 557.5 1406.8 556.8 1412.2 556.8 1419.2 557.4 1425.7 557 1431.6 557.7 1440.2 557.8 1445.9 557.9 1451.4 558.1 1458.6 557.7M1039.8 563.3 1045.5 562.8 1051.7 563.4 1058.7 563.6 1064.1 563.1 1073 562.8 1078.7 563.4 1084.4 564.5 1090.9 564 1097 562.4 1105.5 563.3 1109.8 563.1 1117.3 563.9 1122.9 562.8 1131.8 563.9 1136 563 1143.1 563.8 1150.3 564.2 1157.4 563.4 1163.7 563.9 1170.2 563.3 1176.8 563.9 1183.7 562.6 1190 562.3 1196.2 563.6 1202 564.4 1208.7 563.2 1215.8 564.2 1221.8 563.1 1227.9 563.3 1235.1 562.9 1240.7 563.5 1247.2 563 1254.8 564.2 1260.5 563.3 1266.1 563 1272.5 563.6 1280.2 562.5 1287.7 563 1294 564.2 1300.8 562.7 1305.8 564.3 1311.1 562.4 1319.2 563.4 1326.7 564 1332.1 564.5 1338.5 563.4 1345.5 563.2 1351.1 563.6 1357.6 564.4 1365 563.5 1369.9 563.1 1377.2 563.5 1384.2 564.3 1391.8 563.4 1396.8 563.7 1404.9 563 1410.1 564.1 1415.6 563 1424.3 564.1 1429.5 562.5 1437.1 563.8 1443.4 564.5 1450.1 563.2 1454.5 562.9M1042.8 569.2 1048.4 568.5 1056.1 569.4 1061.8 570.3 1069.1 568.2 1075 569.8 1081.2 569.6 1086.9 568.8 1095.7 569.4 1101.7 568.5 1107.7 569.3 1113.6 569.5 1120.8 570.3 1127.5 569 1132.7 568.4 1141 568.3 1145.6 568.5 1153.3 569.9 1160.1 569.9 1165 568.1 1173.5 568.8 1179.9 568.9 1184.8 568.7 1191.1 570.1 1199 568.9 1205.1 568.9 1210.5 570.1 1218.5 570.2 1224.6 569.5 1230.5 568.2 1239 570 1243.7 570.1 1251.6 568.8 1257.5 570.2 1263.7 570.2 1269.5 569 1277.4 568.6 1282.7 570 1289.7 569.9 1295.5 568.5 1302.4 568.5 1310.6 568.7 1315.9 568.3 1322.3 568.9 1328.5 568.2 1334.2 569.9 1341.3 568.6 1347.4 568.7 1354 568.2 1361.7 568.8 1366.8 569.7 1373.1 568.7 1381.7 568.4 1387.1 570 1394.6 568.4 1399.8 569.7 1406.4 570.2 1412.4 570.2 1419.8 568.6 1426.1 568.4 1433.3 568.7 1440.4 569.4 1445.4 568.6 1452.6 568.6 1459.8 568.4M1039.5 575.1 1045.4 575.6 1052.2 575.4 1059.2 574.6 1065.2 574.1 1071.1 575.8 1078 575.4 1083.9 575.1 1091.1 575 1097.4 574 1104 574.4 1110 575.5 1116.9 574.8 1125.1 575.6 1131.6 575.8 1136 574.5 1142.2 575.4 1150.5 574.7 1156.3 575.4 1163.6 574.4 1170.5 574.7 1176.4 574.3 1181.4 575.9 1189.7 575.5 1194.2 574 1201.1 574.3 1207.9 574.7 1213.7 574.6 1221.9 574.3 1229 575.2 1235.1 574.5 1240.8 575.4 1247.1 573.9 1254.9 575.6 1259.9 574 1268 575.2 1272.2 574.4 1278.9 575.7 1285.7 575.9 1293.7 574.1 1300 574.8 1306.7 575.7 1311.9 574.1 1320.2 574.8 1326.7 575.4 1332.7 575.7 1338.9 574.9 1343.8 575.4 1351.3 575 1359.2 574.2 1365.2 574 1371.6 575.7 1376.8 575.1 1385.3 575.3 1390.6 574.4 1395.8 574.7 1403.3 574.3 1409.5 574.2 1417.1 575.4 1422.3 574.4 1429.5 574.9 1437.2 574.7 1441.9 575.9 1448 575.1 1455 575.7M1042.9 581.4 1048.3 581.2 1056 580.7 1063 581.5 1067.7 580.3 1074.9 580.1 1080.5 580.3 1087.4 581.3 1094.6 579.9 1100.8 580.7 1107.4 580.1 1113.1 579.7 1122.1 581.4 1126.1 581.3 1135.1 580.9 1139.2 580.8 1146.6 580.1 1153.4 579.7 1160.9 581.1 1166.6 581.8 1173.2 580.2 1178.5 580 1184.4 581.4 1193.2 580.3 1197.9 581.1 1206.2 581.8 1210.8 581.4 1219.2 581.3 1224.3 580.1 1232.2 580.4 1237.4 580.9 1243.9 581.5 1250 579.8 1257.4 581.1 1264.6 581.3 1271.4 581.8 1276.7 580.8 1282.3 580.4 1290 579.9 1296.8 580 1302.6 581.9 1308.1 579.8 1315.6 580.1 1322.9 579.7 1329.7 581.6 1336.1 580.6 1341.1 581.2 1348.3 580.6 1354.3 580.7 1361.7 581.5 1368.9 580 1373.7 580.7 1380.9 580.5 1386.4 579.9 1393.3 580.7 1401.6 581.7 1407.8 581.9 1414.5 581.1 1420.6 579.8 1426.7 581 1432.2 581 1440.5 580.8 1446.2 580.4 1451.8 581.7 1457.4 580.1M1040 586.5 1044.8 587 1052.1 586.8 1058.8 586.7 1065.7 586.4 1070.9 585.9 1079.6 586.7 1083.9 587.4 1090.8 585.7 1098.1 586 1104.5 586.7 1110.2 586.8 1116.4 586.6 1124.2 585.7 1130.2 585.6 1136.8 587.4 1143.6 587.1 1150.7 585.7 1157.9 587.1 1161.9 587.3 1169.2 585.9 1177.3 586.7 1183.3 585.8 1189.8 585.6 1194.8 586.3 1200.6 586.8 1207.7 586.2 1215.6 586.4 1222.6 586.9 1229 586.7 1235.7 587.4 1240.1 587.1 1247.1 587.2 1254.5 587.3 1259.4 586.3 1267.7 587.6 1274.1 585.6 1280.3 585.7 1286.6 587.3 1291.9 587.6 1300 586.1 1305.1 586.5 1313.4 586.8 1317.9 585.5 1324.4 587.3 1331.1 586.7 1337.9 587 1344.7 585.8 1352.6 586.7 1358.5 587.3 1365.8 585.5 1370.6 585.8 1377.5 587.4 1384.8 585.6 1389.6 587.3 1397.5 586.4 1403.4 585.8 1411 586.4 1417.5 586.8 1421.8 586.2 1428.7 587.5 1436.2 585.6 1441.6 586.3 1448.9 586.8 1455.2 586.3M1041.4 592.6 1048.8 591.3 1055.6 593.5 1061 591.6 1069.2 591.9 1074.6 592.4 1081.1 592.6 1088.3 593.4 1096.1 591.4 1101.4 593 1108.8 593 1114.6 592.7 1120.4 591.9 1128.1 593.2 1135 592.8 1139.7 593 1147.4 592.4 1153.6 592.1 1159.9 592.2 1165 592 1172.3 593.5 1179.2 592.1 1185 591.8 1191.8 591.6 1197.4 593.2 1205.1 592.3 1211.9 592 1217.3 591.4 1224.2 592 1231.9 592.5 1239 592 1245.4 592.6 1249.6 591.7 1257.5 593.5 1263.3 593 1270 593.2 1275.5 592.4 1284.4 591.9 1289.1 591.3 1295.3 591.9 1303.3 591.8 1309 591.7 1316 593.2 1322.7 591.7 1329.4 593.4 1335.5 591.5 1342.6 593.2 1347.8 591.6 1353.9 592.5 1362.3 592.7 1368.9 591.8 1373.8 593 1381.2 592.2 1387.8 592 1392.5 592.2 1399 592.7 1406.3 592.4 1413.5 591.9 1419.6 591.3 1427.4 592.5 1434.1 591.4 1439.6 592.9 1445.3 591.5 1451.3 591.6 1459.5 591.5M1040.4 598 1046.1 598.4 1052.7 598.6 1059.3 597.8 1066.2 597.7 1072.6 598.8 1079.3 597.8 1085.8 599.3 1091.4 597.7 1098.1 599.2 1103.5 597.1 1110.9 598.5 1118.3 597.9 1125.4 597.6 1131.2 597.3 1135.7 597.4 1142.3 598.2 1150.2 597.5 1157.7 597.9 1162 597.5 1170.2 599.1 1175.1 597.1 1183.3 597.6 1190.4 598.2 1195.9 597.9 1202.8 598.1 1208 599.1 1213.9 598.7 1220.3 598.5 1227.7 599 1233.3 598.3 1240.7 599.1 1248.7 598.5 1253.2 597.6 1259.8 598.1 1266.2 597.5 1274.2 598.5 1279.4 599.3 1285.7 598.4 1292 599 1300.5 597.7 1306.7 598.9 1311.9 597.8 1319 599.1 1324.6 598.6 1332.3 598.1 1338.7 599.1 1344.2 599.1 1351.1 598.8 1359 597.5 1365.5 599.3 1370.4 597.1 1376.4 599.3 1382.6 599.1 1389.5 598.7 1395.9 597.5 1404 597.3 1409.6 599.1 1417.1 599.1 1424.3 597.2 1428.8 598.9 1436.5 597.2 1442.5 597.6 1448.8 597.3 1454.2 599.3M1042.2 604.8 1048.2 604 1054.7 603.8 1061.4 604.4 1067.8 604.5 1075.3 603.1 1081.3 604 1089.4 603.7 1094 605 1102.3 604.5 1107.1 603.3 1113.6 603 1119.5 604 1127 604.1 1133.4 602.9 1140.8 604.3 1146.9 604.1 1153.8 605.1 1160.8 604.5 1166 603.6 1172.5 605.1 1178.9 603.7 1185.5 603.2 1193.6 602.9 1199.1 605 1204.6 604.2 1211.4 603.4 1217.4 603.1 1225.7 604.6 1232.4 603 1238.3 603.6 1244.7 604.1 1250.2 605.1 1255.9 604.6 1264.7 604 1270.5 605.1 1276 604.3 1283.9 603.7 1290.3 603.8 1296.3 604.3 1303.2 603.6 1309.6 604.1 1315 604.3 1321.6 604.9 1328.7 604.5 1335.3 603.9 1341 603.2 1349.4 604.1 1354.8 604.1 1362.1 603.4 1366.8 604.7 1374.1 604.3 1381.7 604.9 1388.3 603 1393.4 604.7 1401.1 603.2 1405.8 603.4 1412.1 603.7 1420.6 604 1426.1 603.1 1432.5 605.1 1439.8 603.9 1445.7 604.7 1453 603.2 1459.3 603.7M1039.6 609.2 1045.6 609.4 1052.2 608.7 1058.2 610 1064.3 609.1 1072.6 609.3 1078 609.2 1085.9 608.9 1091.9 610.6 1097.2 609.6 1105.3 610.1 1110.6 608.8 1117.3 609.5 1124.6 609.3 1130.2 610.1 1137.9 609.5 1143.2 610 1151.2 609.1 1157.8 610.3 1162.6 610.2 1169 608.8 1176.7 609.5 1182.6 609.8 1190.1 610.4 1194.2 610 1201.9 609.7 1209.5 609.6 1214.9 610.7 1221.3 609.8 1228 610.5 1235 610.3 1240.7 608.8 1248 609.9 1254.8 610.4 1259.4 609.2 1265.8 610.5 1272.4 608.9 1280.7 609.9 1285.3 610.2 1293.6 609.8 1298.3 610.2 1305.8 610 1313.9 610.5 1320 609 1325 609.8 1330.6 610.9 1337.9 609.3 1344.5 609.3 1352.5 609.9 1358 609.6 1363.2 609.4 1372 610.5 1378.5 609.3 1383.2 608.8 1390.6 609.5 1396.9 609.8 1403.7 609.5 1410.8 609.1 1417.7 609.9 1421.7 609.4 1429.6 609.6 1436.2 609.4 1441.9 610.5 1448.4 610.3 1456.3 610M1042.6 616.6 1049.1 616.4 1054.5 615.5 1062.6 614.6 1069.8 614.6 1075.5 614.9 1082.9 615.7 1089.1 615.6 1095.2 616 1100.7 615 1108.7 614.8 1115.4 614.9 1119.6 614.7 1128 616.6 1133.5 616 1139.6 616.5 1147.3 614.8 1152 616 1158.5 616.4 1165.7 615 1173 615.2 1179.4 614.8 1186.9 615.2 1193.2 614.8 1199.6 616.7 1204.9 614.6 1211.4 615.9 1217.5 615.7 1223.6 615.5 1231.9 615.4 1238.3 614.7 1245.2 614.8 1251.9 616.7 1258.5 615.7 1263.2 615.3 1271 615.6 1278 614.7 1283.2 616.4 1290 615.7 1295.1 614.8 1302.1 616.5 1310.2 615 1316.9 614.6 1322.5 616.6 1328.3 616.6 1335.7 614.6 1341.3 615.5 1347.5 616.1 1353.9 616.2 1360.7 614.6 1367.9 614.7 1374.4 616.2 1381 615.5 1385.9 615.6 1392.6 615.9 1399.2 615.8 1406.3 615.3 1413.7 614.8 1418.8 616.6 1425.8 616.4 1433.8 615.6 1438.3 614.7 1446.8 614.7 1452.2 615.7 1457.7 615.5M1038.6 621.5 1046 621.1 1051.7 621.2 1058.2 620.6 1064.8 622.2 1072 622.3 1077.1 622.4 1085 622.1 1091.7 621.8 1097.2 622 1103.5 620.9 1109.7 621.2 1117.6 620.9 1125.1 620.5 1130.7 620.8 1137.3 622 1144.1 620.4 1149.3 621.6 1157.9 620.4 1163.3 621.8 1170.4 621 1176.9 621.3 1183.7 620.3 1190.2 621.2 1195.2 620.5 1201.3 621.9 1209 620.6 1214.6 620.6 1220.7 620.8 1227.5 622.5 1235.9 622.1 1240.9 621.4 1248.3 622.3 1254.7 621.7 1259.7 621.7 1268 622 1272.4 621.9 1279.6 620.6 1287.8 621.8 1293.7 620.6 1300.4 622.4 1307.1 621.9 1313.4 622.1 1319.3 621.3 1326.4 622 1333 620.9 1339.8 621.5 1346.2 620.5 1352.8 622 1357.3 622.2 1363.7 620.7 1370.9 620.8 1377.5 622.3 1384.5 621.9 1390.2 622 1397.8 621.8 1404.7 622.1 1409.7 620.5 1416.9 622.2 1422.6 621.6 1430.4 622.1 1434.6 621.4 1441.1 620.5 1449.9 621.2 1455.8 621.3M1042.3 626.6 1048.8 628 1056.1 626.7 1061.1 626.7 1069.3 627.1 1075.7 627.9 1080.7 627.6 1087 627.9 1093.9 626.7 1102.5 626.9 1107 628.1 1114.6 628.1 1120.5 627.2 1128.5 627.2 1135.1 626.5 1141.2 626.4 1146.8 626.1 1152.3 628.2 1159.6 627.9 1165.6 626.9 1171.6 627.3 1180.3 627.2 1185.4 628.2 1193.4 627.6 1197.6 627.5 1205.1 628.2 1211.4 627.6 1218.6 626.9 1224.8 627.6 1232.4 627.2 1237.4 628.3 1243 627.9 1251.3 627.3 1257.1 627.8 1264.8 627.7 1270.9 626.2 1276.3 626.4 1284.5 628.1 1288.8 627.4 1296.5 626.2 1302.4 627.8 1309.6 626.7 1316.5 626.7 1322.4 627 1330.1 627.5 1336.1 627.6 1341.4 628.2 1348.8 627.6 1354.1 626.4 1361.5 627.9 1368.6 626.9 1373.2 627.2 1381.8 626.4 1387.9 626.5 1393.2 626.2 1399.7 626.9 1408.1 628.2 1412.4 626.8 1421 626.5 1425.7 627.1 1431.7 626.7 1439 626.9 1447 626.7 1451.4 628.1 1458.6 628M1039.5 516.7 1041.4 523.6 1047.3 516.2 1049.9 522.7 1053.5 518.1 1056.4 522.7 1059.6 517.7 1061.5 521.9 1064.6 518.1 1068 521.8 1072 518 1074.8 523.4 1079.7 516.2 1082.3 523.6 1085.8 518 1088.8 522.3 1090.3 516.7 1094.9 522.7 1098.7 516.2 1102.1 522.9 1105.6 516.5 1107.1 523.1 1111.9 516.2 1115.6 522.2 1117.5 517.9 1121.8 521.7 1123.2 516.5 1126.6 522.2 1130.5 516.6 1134.4 523.8 1135.7 516.3 1140.9 522.4 1142.6 518 1147.8 522.4 1150.5 517.9 1152.5 523.7 1155.6 517.6 1160.1 523.2 1161.9 517.1 1166.7 523.9 1169.9 516.7 1172.7 523.6 1177 517.1 1179.8 523.6 1182.7 517.9 1185.6 523.3 1187.9 518.1 1192.4 522.4 1195.9 516.8 1197.9 523.1 1202.8 516.5 1204.1 523.7 1209.9 517.2 1210.8 521.7 1214.6 517.6 1217.1 523.8 1221.3 516.3 1224.3 522 1228.7 516 1229.9 521.8 1235.4 516.4 1238.3 523.1 1241.4 518.1 1244.8 523.3 1247.7 517.4 1249.5 523 1253.5 515.9 1256.9 523.5 1259.2 516.2 1264.6 523.7 1267.3 516.8 1269 523.6 1273.5 517.9 1277.9 523.8 1279 516.4 1282.1 522.1 1286.9 515.9 1288.7 521.8 1291.6 516.7 1297.2 523.5 1298.4 516.7 1303.1 523.5 1305.2 517.2 1309.6 522.3 1312.7 516.3 1314.6 521.9 1319.3 516.9 1323 522.1 1324.5 518 1328.2 522.6 1331.3 516.2 1333.9 522.3 1337.4 517.3 1341.1 523.3 1346 517.6 1347.9 522.4 1351.2 516.5 1356 522.8 1356.6 517.3 1362.2 523.1 1364.7 516.7 1366.4 522.6 1371.4 516.9 1374.1 523.4 1378.7 517.5 1380.3 523.3 1383.3 517.9 1387.4 522.2 1389.2 517.1 1394.8 521.9 1396.7 516.4 1401.1 522.1 1402.3 517.6 1405.4 522.1 1408.6 517.1 1414 523.9 1417.7 516.2 1418.4 522.8 1422.2 517.2 1426.2 523.5 1429.5 517.3 1431.9 522.8 1436.9 516.3 1438.8 523.5 1442 516.6 1445.1 523.8 1447.7 517.9 1451.6 522.2 1456.3 517.5 1459.3 522.8M1038.4 528.9 1041.4 523.6 1044.8 529.2 1049.9 522.7 1053.1 529.2 1056.4 522.7 1059.4 528.3 1061.5 521.9 1065.2 528.4 1068 521.8 1073.1 527.7 1074.8 523.4 1079.6 527.5 1082.3 523.6 1084.2 528.1 1088.8 522.3 1092.6 528.6 1094.9 522.7 1097.7 529.5 1102.1 522.9 1103.8 528.5 1107.1 523.1 1111.1 529.2 1115.6 522.2 1118.2 528.9 1121.8 521.7 1123.6 528.2 1126.6 522.2 1129.5 529.4 1134.4 523.8 1137.5 529.1 1140.9 522.4 1142.6 528.5 1147.8 522.4 1150.8 528.8 1152.5 523.7 1155.5 528.5 1160.1 523.2 1164.1 528 1166.7 523.9 1168.6 528.2 1172.7 523.6 1176.6 529.4 1179.8 523.6 1181.5 527.8 1185.6 523.3 1188.3 528.2 1192.4 522.4 1195.6 527.8 1197.9 523.1 1201.5 527.9 1204.1 523.7 1209.8 529.1 1210.8 521.7 1213.9 529.6 1217.1 523.8 1220.4 528.3 1224.3 522 1229.4 529.3 1229.9 521.8 1235.2 528.5 1238.3 523.1 1240.1 528.9 1244.8 523.3 1246.4 527.9 1249.5 523 1253.7 527.6 1256.9 523.5 1260.2 529.3 1264.6 523.7 1267.5 528.6 1269 523.6 1273.9 528.5 1277.9 523.8 1279 528.8 1282.1 522.1 1286.2 529.1 1288.7 521.8 1294.1 528.4 1297.2 523.5 1299.7 529.2 1303.1 523.5 1305.8 528 1309.6 522.3 1313.1 529.5 1314.6 521.9 1319.8 529 1323 522.1 1326.5 529 1328.2 522.6 1332.4 528.5 1333.9 522.3 1338 528.9 1341.1 523.3 1343.9 528.4 1347.9 522.4 1352.3 529.1 1356 522.8 1358.4 528 1362.2 523.1 1364.3 528.5 1366.4 522.6 1371.3 528.4 1374.1 523.4 1378 529.6 1380.3 523.3 1383.1 528.9 1387.4 522.2 1391.3 528.4 1394.8 521.9 1397 529.7 1401.1 522.1 1402.2 528.7 1405.4 522.1 1409.1 529.2 1414 523.9 1417.7 528.6 1418.4 522.8 1421.9 528.8 1426.2 523.5 1429.6 529.1 1431.9 522.8 1436 528.9 1438.8 523.5 1443.4 528.6 1445.1 523.8 1448.7 529.6 1451.6 522.2 1454.7 529 1459.3 522.8M1038.4 528.9 1042.4 535 1044.8 529.2 1048.2 535.5 1053.1 529.2 1055.3 533.4 1059.4 528.3 1061.6 534.2 1065.2 528.4 1067.4 534.2 1073.1 527.7 1075 534.8 1079.6 527.5 1081.3 533.9 1084.2 528.1 1087.5 534.9 1092.6 528.6 1096 534.5 1097.7 529.5 1100.5 535.1 1103.8 528.5 1107.4 533.8 1111.1 529.2 1113.2 535 1118.2 528.9 1121.6 534.7 1123.6 528.2 1127.2 534.5 1129.5 529.4 1133 535.4 1137.5 529.1 1139.8 534.7 1142.6 528.5 1147.6 535.1 1150.8 528.8 1153.2 533.9 1155.5 528.5 1159.9 533.6 1164.1 528 1167.2 534.1 1168.6 528.2 1173.7 533.9 1176.6 529.4 1178.9 533.8 1181.5 527.8 1185.5 533.7 1188.3 528.2 1190.9 534.9 1195.6 527.8 1198.1 533.8 1201.5 527.9 1204.7 534.4 1209.8 529.1 1211.5 534.7 1213.9 529.6 1218.7 534.1 1220.4 528.3 1226 535.2 1229.4 529.3 1230 535.1 1235.2 528.5 1238.9 535 1240.1 528.9 1243.2 535.1 1246.4 527.9 1251.1 533.3 1253.7 527.6 1255.9 535.4 1260.2 529.3 1264.2 533.8 1267.5 528.6 1269.1 533.6 1273.9 528.5 1276 535 1279 528.8 1282.8 533.6 1286.2 529.1 1290.9 535.1 1294.1 528.4 1295.3 535.3 1299.7 529.2 1303.1 535 1305.8 528 1309.7 535.3 1313.1 529.5 1316.6 535.2 1319.8 529 1321.4 534.8 1326.5 529 1328.8 534.9 1332.4 528.5 1335.1 535.3 1338 528.9 1341.9 533.9 1343.9 528.4 1347.5 533.6 1352.3 529.1 1354.7 533.4 1358.4 528 1361.2 533.6 1364.3 528.5 1367.7 534.4 1371.3 528.4 1374.4 535.2 1378 529.6 1379.4 535.2 1383.1 528.9 1387.2 534.5 1391.3 528.4 1394.2 535.2 1397 529.7 1399.9 534.2 1402.2 528.7 1408 533.4 1409.1 529.2 1413.6 534.7 1417.7 528.6 1418.4 534.6 1421.9 528.8 1426.8 535.4 1429.6 529.1 1432.3 535.5 1436 528.9 1439.3 534.4 1443.4 528.6 1446.9 533.4 1448.7 529.6 1452.9 534.7 1454.7 529 1458.3 535.2M1039.1 540.1 1042.4 535 1046.1 540.8 1048.2 535.5 1051.7 540.1 1055.3 533.4 1058.8 540.3 1061.6 534.2 1066.4 539.7 1067.4 534.2 1072.9 540 1075 534.8 1078.5 539.7 1081.3 533.9 1085 541.3 1087.5 534.9 1091.9 540.9 1096 534.5 1097.5 539.8 1100.5 535.1 1103.9 540.4 1107.4 533.8 1111.4 540.8 1113.2 535 1116.2 540.7 1121.6 534.7 1125.1 540.3 1127.2 534.5 1129.2 539.8 1133 535.4 1135.6 539.5 1139.8 534.7 1144.7 540.4 1147.6 535.1 1150.4 540.8 1153.2 533.9 1157.6 540.5 1159.9 533.6 1163.3 540.5 1167.2 534.1 1170 540.4 1173.7 533.9 1176.5 539.6 1178.9 533.8 1183 540.1 1185.5 533.7 1189.7 539.3 1190.9 534.9 1194.6 539.2 1198.1 533.8 1202.8 541.1 1204.7 534.4 1208.9 539.9 1211.5 534.7 1215.9 540.8 1218.7 534.1 1221.7 539.7 1226 535.2 1227.4 540 1230 535.1 1234 540 1238.9 535 1241.4 541.2 1243.2 535.1 1246.3 540.4 1251.1 533.3 1252.7 539.3 1255.9 535.4 1261.4 540.4 1264.2 533.8 1268.2 540.1 1269.1 533.6 1272.1 539.9 1276 535 1280.3 541.2 1282.8 533.6 1287.8 540.1 1290.9 535.1 1292.8 539.3 1295.3 535.3 1299.9 539.6 1303.1 535 1305 539.1 1309.7 535.3 1311.1 540.6 1316.6 535.2 1317.9 541.2 1321.4 534.8 1324.3 541 1328.8 534.9 1331 539.1 1335.1 535.3 1339.1 539.6 1341.9 533.9 1345.7 539.5 1347.5 533.6 1350.2 540.8 1354.7 533.4 1358.6 541 1361.2 533.6 1365.1 539.3 1367.7 534.4 1371.4 540.7 1374.4 535.2 1377.4 541.2 1379.4 535.2 1383.3 541.2 1387.2 534.5 1391.1 539.1 1394.2 535.2 1395.6 540.5 1399.9 534.2 1404.4 539.3 1408 533.4 1409.5 540.7 1413.6 534.7 1415.6 541 1418.4 534.6 1423 539.2 1426.8 535.4 1429.1 540.4 1432.3 535.5 1435.8 540.6 1439.3 534.4 1441.5 540.9 1446.9 533.4 1448.6 540.5 1452.9 534.7 1455.9 540 1458.3 535.2M1039.1 540.1 1042.4 546.6 1046.1 540.8 1050.5 546.6 1051.7 540.1 1055.9 545.5 1058.8 540.3 1061 547.1 1066.4 539.7 1069.3 546.7 1072.9 540 1074.8 546.2 1078.5 539.7 1083.1 546.7 1085 541.3 1088.5 545.6 1091.9 540.9 1094.5 546.9 1097.5 539.8 1100.9 546.4 1103.9 540.4 1108 546.9 1111.4 540.8 1115.1 545.5 1116.2 540.7 1119.4 545.5 1125.1 540.3 1127 546.2 1129.2 539.8 1134.6 546.9 1135.6 539.5 1139 546.7 1144.7 540.4 1147.6 546.8 1150.4 540.8 1153.5 545.5 1157.6 540.5 1160.7 546.7 1163.3 540.5 1166.8 546.9 1170 540.4 1172.3 545.1 1176.5 539.6 1179.4 546.7 1183 540.1 1184.9 546.6 1189.7 539.3 1193.5 545.4 1194.6 539.2 1199 546.4 1202.8 541.1 1205.2 545.3 1208.9 539.9 1211.1 546.6 1215.9 540.8 1219.1 545.9 1221.7 539.7 1223.6 546.7 1227.4 540 1232 545.4 1234 540 1238 546.9 1241.4 541.2 1245.3 546 1246.3 540.4 1250.7 546.2 1252.7 539.3 1256.4 545.3 1261.4 540.4 1262.9 546.5 1268.2 540.1 1269.9 546.1 1272.1 539.9 1276.5 546 1280.3 541.2 1282.3 545 1287.8 540.1 1291.1 545.7 1292.8 539.3 1295.1 546.3 1299.9 539.6 1303.6 545.2 1305 539.1 1309.5 545.7 1311.1 540.6 1315.8 544.9 1317.9 541.2 1320.9 547.1 1324.3 541 1329.8 546 1331 539.1 1335.4 545.5 1339.1 539.6 1342.5 545.8 1345.7 539.5 1349.5 546.6 1350.2 540.8 1355.6 547 1358.6 541 1360.6 545 1365.1 539.3 1366.9 545.3 1371.4 540.7 1373.1 545 1377.4 541.2 1380.9 546.8 1383.3 541.2 1387.1 547 1391.1 539.1 1394.9 545 1395.6 540.5 1400.5 545.8 1404.4 539.3 1405.7 547 1409.5 540.7 1412.6 546.1 1415.6 541 1420.1 547 1423 539.2 1426.7 545.8 1429.1 540.4 1432.6 545.2 1435.8 540.6 1440.6 547.1 1441.5 540.9 1445 545 1448.6 540.5 1451.6 545.7 1455.9 540 1459.9 546.9M1040.4 550.8 1042.4 546.6 1046.8 552.3 1050.5 546.6 1052.9 552.9 1055.9 545.5 1057.8 551 1061 547.1 1066.2 552.8 1069.3 546.7 1072.5 551.3 1074.8 546.2 1078.8 552.4 1083.1 546.7 1083.9 551.4 1088.5 545.6 1090.8 551 1094.5 546.9 1097.9 551.1 1100.9 546.4 1103.8 551 1108 546.9 1111.5 550.7 1115.1 545.5 1118.1 551.1 1119.4 545.5 1122.7 552.8 1127 546.2 1129.7 552.8 1134.6 546.9 1138 552.7 1139 546.7 1142.5 551.7 1147.6 546.8 1148.9 552.8 1153.5 545.5 1157.5 552.1 1160.7 546.7 1162.9 551.4 1166.8 546.9 1170.4 551.7 1172.3 545.1 1176.4 551 1179.4 546.7 1181.7 550.8 1184.9 546.6 1189.6 551.9 1193.5 545.4 1194.5 552.6 1199 546.4 1201.3 551.6 1205.2 545.3 1207.5 551.3 1211.1 546.6 1216 551.4 1219.1 545.9 1220.6 551.8 1223.6 546.7 1227.5 552.7 1232 545.4 1233.4 552.9 1238 546.9 1239.8 552.7 1245.3 546 1248 551.2 1250.7 546.2 1253.9 551.3 1256.4 545.3 1259.8 551.1 1262.9 546.5 1266.6 552.9 1269.9 546.1 1274.9 552.8 1276.5 546 1278.9 551.3 1282.3 545 1287.6 550.8 1291.1 545.7 1293.6 551.3 1295.1 546.3 1300.8 550.7 1303.6 545.2 1306.9 551.4 1309.5 545.7 1311.5 550.7 1315.8 544.9 1319.9 551.9 1320.9 547.1 1324.6 551.7 1329.8 546 1333.2 551.2 1335.4 545.5 1338.7 551 1342.5 545.8 1344.1 552.4 1349.5 546.6 1352.1 551.1 1355.6 547 1356.8 550.9 1360.6 545 1364.8 551.8 1366.9 545.3 1370.4 551.1 1373.1 545 1377.8 552.3 1380.9 546.8 1384.9 552 1387.1 547 1389.7 550.8 1394.9 545 1397.7 551.6 1400.5 545.8 1404.1 550.8 1405.7 547 1410.9 551.4 1412.6 546.1 1417.5 552.6 1420.1 547 1423 550.7 1426.7 545.8 1430.6 551.7 1432.6 545.2 1437 551.3 1440.6 547.1 1441.6 552.5 1445 545 1448.6 551 1451.6 545.7 1455.1 552 1459.9 546.9M1040.4 550.8 1041.4 557.6 1046.8 552.3 1049.1 557.6 1052.9 552.9 1054.7 558.1 1057.8 551 1063.1 558.4 1066.2 552.8 1068.2 558.1 1072.5 551.3 1074.9 558.2 1078.8 552.4 1080.5 558.4 1083.9 551.4 1089.5 557.6 1090.8 551 1094.8 557.7 1097.9 551.1 1101.4 556.5 1103.8 551 1109.1 557 1111.5 550.7 1113.4 556.7 1118.1 551.1 1120.1 558.3 1122.7 552.8 1125.9 556.7 1129.7 552.8 1134.3 556.9 1138 552.7 1138.9 557.8 1142.5 551.7 1147 557.7 1148.9 552.8 1153.8 556.7 1157.5 552.1 1160.8 558.1 1162.9 551.4 1165 556.8 1170.4 551.7 1172.7 557.6 1176.4 551 1178.6 556.8 1181.7 550.8 1185.5 556.8 1189.6 551.9 1192.5 558.4 1194.5 552.6 1197.8 557.8 1201.3 551.6 1205.9 556.8 1207.5 551.3 1212.7 558.6 1216 551.4 1217.9 557.4 1220.6 551.8 1225.7 557.7 1227.5 552.7 1231 558.6 1233.4 552.9 1238.5 557.2 1239.8 552.7 1243.5 557.2 1248 551.2 1250.6 558.7 1253.9 551.3 1258.1 558.5 1259.8 551.1 1264.6 558.4 1266.6 552.9 1269 557.6 1274.9 552.8 1278 558.6 1278.9 551.3 1282.5 557.4 1287.6 550.8 1290.1 557.3 1293.6 551.3 1296.3 556.6 1300.8 550.7 1302.6 557.6 1306.9 551.4 1307.9 556.8 1311.5 550.7 1317.1 558.2 1319.9 551.9 1323.5 557.9 1324.6 551.7 1329.6 558.5 1333.2 551.2 1336.3 556.6 1338.7 551 1342.1 557.1 1344.1 552.4 1348.7 557.1 1352.1 551.1 1354.9 558.6 1356.8 550.9 1361.6 557 1364.8 551.8 1367.8 557.5 1370.4 551.1 1375.5 557.1 1377.8 552.3 1380.2 557.9 1384.9 552 1386.2 557.8 1389.7 550.8 1395 557.6 1397.7 551.6 1399.6 557.5 1404.1 550.8 1406.8 556.8 1410.9 551.4 1412.2 556.8 1417.5 552.6 1419.2 557.4 1423 550.7 1425.7 557 1430.6 551.7 1431.6 557.7 1437 551.3 1440.2 557.8 1441.6 552.5 1445.9 557.9 1448.6 551 1451.4 558.1 1455.1 552 1458.6 557.7M1039.8 563.3 1041.4 557.6 1045.5 562.8 1049.1 557.6 1051.7 563.4 1054.7 558.1 1058.7 563.6 1063.1 558.4 1064.1 563.1 1068.2 558.1 1073 562.8 1074.9 558.2 1078.7 563.4 1080.5 558.4 1084.4 564.5 1089.5 557.6 1090.9 564 1094.8 557.7 1097 562.4 1101.4 556.5 1105.5 563.3 1109.1 557 1109.8 563.1 1113.4 556.7 1117.3 563.9 1120.1 558.3 1122.9 562.8 1125.9 556.7 1131.8 563.9 1134.3 556.9 1136 563 1138.9 557.8 1143.1 563.8 1147 557.7 1150.3 564.2 1153.8 556.7 1157.4 563.4 1160.8 558.1 1163.7 563.9 1165 556.8 1170.2 563.3 1172.7 557.6 1176.8 563.9 1178.6 556.8 1183.7 562.6 1185.5 556.8 1190 562.3 1192.5 558.4 1196.2 563.6 1197.8 557.8 1202 564.4 1205.9 556.8 1208.7 563.2 1212.7 558.6 1215.8 564.2 1217.9 557.4 1221.8 563.1 1225.7 557.7 1227.9 563.3 1231 558.6 1235.1 562.9 1238.5 557.2 1240.7 563.5 1243.5 557.2 1247.2 563 1250.6 558.7 1254.8 564.2 1258.1 558.5 1260.5 563.3 1264.6 558.4 1266.1 563 1269 557.6 1272.5 563.6 1278 558.6 1280.2 562.5 1282.5 557.4 1287.7 563 1290.1 557.3 1294 564.2 1296.3 556.6 1300.8 562.7 1302.6 557.6 1305.8 564.3 1307.9 556.8 1311.1 562.4 1317.1 558.2 1319.2 563.4 1323.5 557.9 1326.7 564 1329.6 558.5 1332.1 564.5 1336.3 556.6 1338.5 563.4 1342.1 557.1 1345.5 563.2 1348.7 557.1 1351.1 563.6 1354.9 558.6 1357.6 564.4 1361.6 557 1365 563.5 1367.8 557.5 1369.9 563.1 1375.5 557.1 1377.2 563.5 1380.2 557.9 1384.2 564.3 1386.2 557.8 1391.8 563.4 1395 557.6 1396.8 563.7 1399.6 557.5 1404.9 563 1406.8 556.8 1410.1 564.1 1412.2 556.8 1415.6 563 1419.2 557.4 1424.3 564.1 1425.7 557 1429.5 562.5 1431.6 557.7 1437.1 563.8 1440.2 557.8 1443.4 564.5 1445.9 557.9 1450.1 563.2 1451.4 558.1 1454.5 562.9 1458.6 557.7M1039.8 563.3 1042.8 569.2 1045.5 562.8 1048.4 568.5 1051.7 563.4 1056.1 569.4 1058.7 563.6 1061.8 570.3 1064.1 563.1 1069.1 568.2 1073 562.8 1075 569.8 1078.7 563.4 1081.2 569.6 1084.4 564.5 1086.9 568.8 1090.9 564 1095.7 569.4 1097 562.4 1101.7 568.5 1105.5 563.3 1107.7 569.3 1109.8 563.1 1113.6 569.5 1117.3 563.9 1120.8 570.3 1122.9 562.8 1127.5 569 1131.8 563.9 1132.7 568.4 1136 563 1141 568.3 1143.1 563.8 1145.6 568.5 1150.3 564.2 1153.3 569.9 1157.4 563.4 1160.1 569.9 1163.7 563.9 1165 568.1 1170.2 563.3 1173.5 568.8 1176.8 563.9 1179.9 568.9 1183.7 562.6 1184.8 568.7 1190 562.3 1191.1 570.1 1196.2 563.6 1199 568.9 1202 564.4 1205.1 568.9 1208.7 563.2 1210.5 570.1 1215.8 564.2 1218.5 570.2 1221.8 563.1 1224.6 569.5 1227.9 563.3 1230.5 568.2 1235.1 562.9 1239 570 1240.7 563.5 1243.7 570.1 1247.2 563 1251.6 568.8 1254.8 564.2 1257.5 570.2 1260.5 563.3 1263.7 570.2 1266.1 563 1269.5 569 1272.5 563.6 1277.4 568.6 1280.2 562.5 1282.7 570 1287.7 563 1289.7 569.9 1294 564.2 1295.5 568.5 1300.8 562.7 1302.4 568.5 1305.8 564.3 1310.6 568.7 1311.1 562.4 1315.9 568.3 1319.2 563.4 1322.3 568.9 1326.7 564 1328.5 568.2 1332.1 564.5 1334.2 569.9 1338.5 563.4 1341.3 568.6 1345.5 563.2 1347.4 568.7 1351.1 563.6 1354 568.2 1357.6 564.4 1361.7 568.8 1365 563.5 1366.8 569.7 1369.9 563.1 1373.1 568.7 1377.2 563.5 1381.7 568.4 1384.2 564.3 1387.1 570 1391.8 563.4 1394.6 568.4 1396.8 563.7 1399.8 569.7 1404.9 563 1406.4 570.2 1410.1 564.1 1412.4 570.2 1415.6 563 1419.8 568.6 1424.3 564.1 1426.1 568.4 1429.5 562.5 1433.3 568.7 1437.1 563.8 1440.4 569.4 1443.4 564.5 1445.4 568.6 1450.1 563.2 1452.6 568.6 1454.5 562.9 1459.8 568.4M1039.5 575.1 1042.8 569.2 1045.4 575.6 1048.4 568.5 1052.2 575.4 1056.1 569.4 1059.2 574.6 1061.8 570.3 1065.2 574.1 1069.1 568.2 1071.1 575.8 1075 569.8 1078 575.4 1081.2 569.6 1083.9 575.1 1086.9 568.8 1091.1 575 1095.7 569.4 1097.4 574 1101.7 568.5 1104 574.4 1107.7 569.3 1110 575.5 1113.6 569.5 1116.9 574.8 1120.8 570.3 1125.1 575.6 1127.5 569 1131.6 575.8 1132.7 568.4 1136 574.5 1141 568.3 1142.2 575.4 1145.6 568.5 1150.5 574.7 1153.3 569.9 1156.3 575.4 1160.1 569.9 1163.6 574.4 1165 568.1 1170.5 574.7 1173.5 568.8 1176.4 574.3 1179.9 568.9 1181.4 575.9 1184.8 568.7 1189.7 575.5 1191.1 570.1 1194.2 574 1199 568.9 1201.1 574.3 1205.1 568.9 1207.9 574.7 1210.5 570.1 1213.7 574.6 1218.5 570.2 1221.9 574.3 1224.6 569.5 1229 575.2 1230.5 568.2 1235.1 574.5 1239 570 1240.8 575.4 1243.7 570.1 1247.1 573.9 1251.6 568.8 1254.9 575.6 1257.5 570.2 1259.9 574 1263.7 570.2 1268 575.2 1269.5 569 1272.2 574.4 1277.4 568.6 1278.9 575.7 1282.7 570 1285.7 575.9 1289.7 569.9 1293.7 574.1 1295.5 568.5 1300 574.8 1302.4 568.5 1306.7 575.7 1310.6 568.7 1311.9 574.1 1315.9 568.3 1320.2 574.8 1322.3 568.9 1326.7 575.4 1328.5 568.2 1332.7 575.7 1334.2 569.9 1338.9 574.9 1341.3 568.6 1343.8 575.4 1347.4 568.7 1351.3 575 1354 568.2 1359.2 574.2 1361.7 568.8 1365.2 574 1366.8 569.7 1371.6 575.7 1373.1 568.7 1376.8 575.1 1381.7 568.4 1385.3 575.3 1387.1 570 1390.6 574.4 1394.6 568.4 1395.8 574.7 1399.8 569.7 1403.3 574.3 1406.4 570.2 1409.5 574.2 1412.4 570.2 1417.1 575.4 1419.8 568.6 1422.3 574.4 1426.1 568.4 1429.5 574.9 1433.3 568.7 1437.2 574.7 1440.4 569.4 1441.9 575.9 1445.4 568.6 1448 575.1 1452.6 568.6 1455 575.7 1459.8 568.4M1039.5 575.1 1042.9 581.4 1045.4 575.6 1048.3 581.2 1052.2 575.4 1056 580.7 1059.2 574.6 1063 581.5 1065.2 574.1 1067.7 580.3 1071.1 575.8 1074.9 580.1 1078 575.4 1080.5 580.3 1083.9 575.1 1087.4 581.3 1091.1 575 1094.6 579.9 1097.4 574 1100.8 580.7 1104 574.4 1107.4 580.1 1110 575.5 1113.1 579.7 1116.9 574.8 1122.1 581.4 1125.1 575.6 1126.1 581.3 1131.6 575.8 1135.1 580.9 1136 574.5 1139.2 580.8 1142.2 575.4 1146.6 580.1 1150.5 574.7 1153.4 579.7 1156.3 575.4 1160.9 581.1 1163.6 574.4 1166.6 581.8 1170.5 574.7 1173.2 580.2 1176.4 574.3 1178.5 580 1181.4 575.9 1184.4 581.4 1189.7 575.5 1193.2 580.3 1194.2 574 1197.9 581.1 1201.1 574.3 1206.2 581.8 1207.9 574.7 1210.8 581.4 1213.7 574.6 1219.2 581.3 1221.9 574.3 1224.3 580.1 1229 575.2 1232.2 580.4 1235.1 574.5 1237.4 580.9 1240.8 575.4 1243.9 581.5 1247.1 573.9 1250 579.8 1254.9 575.6 1257.4 581.1 1259.9 574 1264.6 581.3 1268 575.2 1271.4 581.8 1272.2 574.4 1276.7 580.8 1278.9 575.7 1282.3 580.4 1285.7 575.9 1290 579.9 1293.7 574.1 1296.8 580 1300 574.8 1302.6 581.9 1306.7 575.7 1308.1 579.8 1311.9 574.1 1315.6 580.1 1320.2 574.8 1322.9 579.7 1326.7 575.4 1329.7 581.6 1332.7 575.7 1336.1 580.6 1338.9 574.9 1341.1 581.2 1343.8 575.4 1348.3 580.6 1351.3 575 1354.3 580.7 1359.2 574.2 1361.7 581.5 1365.2 574 1368.9 580 1371.6 575.7 1373.7 580.7 1376.8 575.1 1380.9 580.5 1385.3 575.3 1386.4 579.9 1390.6 574.4 1393.3 580.7 1395.8 574.7 1401.6 581.7 1403.3 574.3 1407.8 581.9 1409.5 574.2 1414.5 581.1 1417.1 575.4 1420.6 579.8 1422.3 574.4 1426.7 581 1429.5 574.9 1432.2 581 1437.2 574.7 1440.5 580.8 1441.9 575.9 1446.2 580.4 1448 575.1 1451.8 581.7 1455 575.7 1457.4 580.1M1040 586.5 1042.9 581.4 1044.8 587 1048.3 581.2 1052.1 586.8 1056 580.7 1058.8 586.7 1063 581.5 1065.7 586.4 1067.7 580.3 1070.9 585.9 1074.9 580.1 1079.6 586.7 1080.5 580.3 1083.9 587.4 1087.4 581.3 1090.8 585.7 1094.6 579.9 1098.1 586 1100.8 580.7 1104.5 586.7 1107.4 580.1 1110.2 586.8 1113.1 579.7 1116.4 586.6 1122.1 581.4 1124.2 585.7 1126.1 581.3 1130.2 585.6 1135.1 580.9 1136.8 587.4 1139.2 580.8 1143.6 587.1 1146.6 580.1 1150.7 585.7 1153.4 579.7 1157.9 587.1 1160.9 581.1 1161.9 587.3 1166.6 581.8 1169.2 585.9 1173.2 580.2 1177.3 586.7 1178.5 580 1183.3 585.8 1184.4 581.4 1189.8 585.6 1193.2 580.3 1194.8 586.3 1197.9 581.1 1200.6 586.8 1206.2 581.8 1207.7 586.2 1210.8 581.4 1215.6 586.4 1219.2 581.3 1222.6 586.9 1224.3 580.1 1229 586.7 1232.2 580.4 1235.7 587.4 1237.4 580.9 1240.1 587.1 1243.9 581.5 1247.1 587.2 1250 579.8 1254.5 587.3 1257.4 581.1 1259.4 586.3 1264.6 581.3 1267.7 587.6 1271.4 581.8 1274.1 585.6 1276.7 580.8 1280.3 585.7 1282.3 580.4 1286.6 587.3 1290 579.9 1291.9 587.6 1296.8 580 1300 586.1 1302.6 581.9 1305.1 586.5 1308.1 579.8 1313.4 586.8 1315.6 580.1 1317.9 585.5 1322.9 579.7 1324.4 587.3 1329.7 581.6 1331.1 586.7 1336.1 580.6 1337.9 587 1341.1 581.2 1344.7 585.8 1348.3 580.6 1352.6 586.7 1354.3 580.7 1358.5 587.3 1361.7 581.5 1365.8 585.5 1368.9 580 1370.6 585.8 1373.7 580.7 1377.5 587.4 1380.9 580.5 1384.8 585.6 1386.4 579.9 1389.6 587.3 1393.3 580.7 1397.5 586.4 1401.6 581.7 1403.4 585.8 1407.8 581.9 1411 586.4 1414.5 581.1 1417.5 586.8 1420.6 579.8 1421.8 586.2 1426.7 581 1428.7 587.5 1432.2 581 1436.2 585.6 1440.5 580.8 1441.6 586.3 1446.2 580.4 1448.9 586.8 1451.8 581.7 1455.2 586.3 1457.4 580.1M1040 586.5 1041.4 592.6 1044.8 587 1048.8 591.3 1052.1 586.8 1055.6 593.5 1058.8 586.7 1061 591.6 1065.7 586.4 1069.2 591.9 1070.9 585.9 1074.6 592.4 1079.6 586.7 1081.1 592.6 1083.9 587.4 1088.3 593.4 1090.8 585.7 1096.1 591.4 1098.1 586 1101.4 593 1104.5 586.7 1108.8 593 1110.2 586.8 1114.6 592.7 1116.4 586.6 1120.4 591.9 1124.2 585.7 1128.1 593.2 1130.2 585.6 1135 592.8 1136.8 587.4 1139.7 593 1143.6 587.1 1147.4 592.4 1150.7 585.7 1153.6 592.1 1157.9 587.1 1159.9 592.2 1161.9 587.3 1165 592 1169.2 585.9 1172.3 593.5 1177.3 586.7 1179.2 592.1 1183.3 585.8 1185 591.8 1189.8 585.6 1191.8 591.6 1194.8 586.3 1197.4 593.2 1200.6 586.8 1205.1 592.3 1207.7 586.2 1211.9 592 1215.6 586.4 1217.3 591.4 1222.6 586.9 1224.2 592 1229 586.7 1231.9 592.5 1235.7 587.4 1239 592 1240.1 587.1 1245.4 592.6 1247.1 587.2 1249.6 591.7 1254.5 587.3 1257.5 593.5 1259.4 586.3 1263.3 593 1267.7 587.6 1270 593.2 1274.1 585.6 1275.5 592.4 1280.3 585.7 1284.4 591.9 1286.6 587.3 1289.1 591.3 1291.9 587.6 1295.3 591.9 1300 586.1 1303.3 591.8 1305.1 586.5 1309 591.7 1313.4 586.8 1316 593.2 1317.9 585.5 1322.7 591.7 1324.4 587.3 1329.4 593.4 1331.1 586.7 1335.5 591.5 1337.9 587 1342.6 593.2 1344.7 585.8 1347.8 591.6 1352.6 586.7 1353.9 592.5 1358.5 587.3 1362.3 592.7 1365.8 585.5 1368.9 591.8 1370.6 585.8 1373.8 593 1377.5 587.4 1381.2 592.2 1384.8 585.6 1387.8 592 1389.6 587.3 1392.5 592.2 1397.5 586.4 1399 592.7 1403.4 585.8 1406.3 592.4 1411 586.4 1413.5 591.9 1417.5 586.8 1419.6 591.3 1421.8 586.2 1427.4 592.5 1428.7 587.5 1434.1 591.4 1436.2 585.6 1439.6 592.9 1441.6 586.3 1445.3 591.5 1448.9 586.8 1451.3 591.6 1455.2 586.3 1459.5 591.5M1040.4 598 1041.4 592.6 1046.1 598.4 1048.8 591.3 1052.7 598.6 1055.6 593.5 1059.3 597.8 1061 591.6 1066.2 597.7 1069.2 591.9 1072.6 598.8 1074.6 592.4 1079.3 597.8 1081.1 592.6 1085.8 599.3 1088.3 593.4 1091.4 597.7 1096.1 591.4 1098.1 599.2 1101.4 593 1103.5 597.1 1108.8 593 1110.9 598.5 1114.6 592.7 1118.3 597.9 1120.4 591.9 1125.4 597.6 1128.1 593.2 1131.2 597.3 1135 592.8 1135.7 597.4 1139.7 593 1142.3 598.2 1147.4 592.4 1150.2 597.5 1153.6 592.1 1157.7 597.9 1159.9 592.2 1162 597.5 1165 592 1170.2 599.1 1172.3 593.5 1175.1 597.1 1179.2 592.1 1183.3 597.6 1185 591.8 1190.4 598.2 1191.8 591.6 1195.9 597.9 1197.4 593.2 1202.8 598.1 1205.1 592.3 1208 599.1 1211.9 592 1213.9 598.7 1217.3 591.4 1220.3 598.5 1224.2 592 1227.7 599 1231.9 592.5 1233.3 598.3 1239 592 1240.7 599.1 1245.4 592.6 1248.7 598.5 1249.6 591.7 1253.2 597.6 1257.5 593.5 1259.8 598.1 1263.3 593 1266.2 597.5 1270 593.2 1274.2 598.5 1275.5 592.4 1279.4 599.3 1284.4 591.9 1285.7 598.4 1289.1 591.3 1292 599 1295.3 591.9 1300.5 597.7 1303.3 591.8 1306.7 598.9 1309 591.7 1311.9 597.8 1316 593.2 1319 599.1 1322.7 591.7 1324.6 598.6 1329.4 593.4 1332.3 598.1 1335.5 591.5 1338.7 599.1 1342.6 593.2 1344.2 599.1 1347.8 591.6 1351.1 598.8 1353.9 592.5 1359 597.5 1362.3 592.7 1365.5 599.3 1368.9 591.8 1370.4 597.1 1373.8 593 1376.4 599.3 1381.2 592.2 1382.6 599.1 1387.8 592 1389.5 598.7 1392.5 592.2 1395.9 597.5 1399 592.7 1404 597.3 1406.3 592.4 1409.6 599.1 1413.5 591.9 1417.1 599.1 1419.6 591.3 1424.3 597.2 1427.4 592.5 1428.8 598.9 1434.1 591.4 1436.5 597.2 1439.6 592.9 1442.5 597.6 1445.3 591.5 1448.8 597.3 1451.3 591.6 1454.2 599.3 1459.5 591.5M1040.4 598 1042.2 604.8 1046.1 598.4 1048.2 604 1052.7 598.6 1054.7 603.8 1059.3 597.8 1061.4 604.4 1066.2 597.7 1067.8 604.5 1072.6 598.8 1075.3 603.1 1079.3 597.8 1081.3 604 1085.8 599.3 1089.4 603.7 1091.4 597.7 1094 605 1098.1 599.2 1102.3 604.5 1103.5 597.1 1107.1 603.3 1110.9 598.5 1113.6 603 1118.3 597.9 1119.5 604 1125.4 597.6 1127 604.1 1131.2 597.3 1133.4 602.9 1135.7 597.4 1140.8 604.3 1142.3 598.2 1146.9 604.1 1150.2 597.5 1153.8 605.1 1157.7 597.9 1160.8 604.5 1162 597.5 1166 603.6 1170.2 599.1 1172.5 605.1 1175.1 597.1 1178.9 603.7 1183.3 597.6 1185.5 603.2 1190.4 598.2 1193.6 602.9 1195.9 597.9 1199.1 605 1202.8 598.1 1204.6 604.2 1208 599.1 1211.4 603.4 1213.9 598.7 1217.4 603.1 1220.3 598.5 1225.7 604.6 1227.7 599 1232.4 603 1233.3 598.3 1238.3 603.6 1240.7 599.1 1244.7 604.1 1248.7 598.5 1250.2 605.1 1253.2 597.6 1255.9 604.6 1259.8 598.1 1264.7 604 1266.2 597.5 1270.5 605.1 1274.2 598.5 1276 604.3 1279.4 599.3 1283.9 603.7 1285.7 598.4 1290.3 603.8 1292 599 1296.3 604.3 1300.5 597.7 1303.2 603.6 1306.7 598.9 1309.6 604.1 1311.9 597.8 1315 604.3 1319 599.1 1321.6 604.9 1324.6 598.6 1328.7 604.5 1332.3 598.1 1335.3 603.9 1338.7 599.1 1341 603.2 1344.2 599.1 1349.4 604.1 1351.1 598.8 1354.8 604.1 1359 597.5 1362.1 603.4 1365.5 599.3 1366.8 604.7 1370.4 597.1 1374.1 604.3 1376.4 599.3 1381.7 604.9 1382.6 599.1 1388.3 603 1389.5 598.7 1393.4 604.7 1395.9 597.5 1401.1 603.2 1404 597.3 1405.8 603.4 1409.6 599.1 1412.1 603.7 1417.1 599.1 1420.6 604 1424.3 597.2 1426.1 603.1 1428.8 598.9 1432.5 605.1 1436.5 597.2 1439.8 603.9 1442.5 597.6 1445.7 604.7 1448.8 597.3 1453 603.2 1454.2 599.3 1459.3 603.7M1039.6 609.2 1042.2 604.8 1045.6 609.4 1048.2 604 1052.2 608.7 1054.7 603.8 1058.2 610 1061.4 604.4 1064.3 609.1 1067.8 604.5 1072.6 609.3 1075.3 603.1 1078 609.2 1081.3 604 1085.9 608.9 1089.4 603.7 1091.9 610.6 1094 605 1097.2 609.6 1102.3 604.5 1105.3 610.1 1107.1 603.3 1110.6 608.8 1113.6 603 1117.3 609.5 1119.5 604 1124.6 609.3 1127 604.1 1130.2 610.1 1133.4 602.9 1137.9 609.5 1140.8 604.3 1143.2 610 1146.9 604.1 1151.2 609.1 1153.8 605.1 1157.8 610.3 1160.8 604.5 1162.6 610.2 1166 603.6 1169 608.8 1172.5 605.1 1176.7 609.5 1178.9 603.7 1182.6 609.8 1185.5 603.2 1190.1 610.4 1193.6 602.9 1194.2 610 1199.1 605 1201.9 609.7 1204.6 604.2 1209.5 609.6 1211.4 603.4 1214.9 610.7 1217.4 603.1 1221.3 609.8 1225.7 604.6 1228 610.5 1232.4 603 1235 610.3 1238.3 603.6 1240.7 608.8 1244.7 604.1 1248 609.9 1250.2 605.1 1254.8 610.4 1255.9 604.6 1259.4 609.2 1264.7 604 1265.8 610.5 1270.5 605.1 1272.4 608.9 1276 604.3 1280.7 609.9 1283.9 603.7 1285.3 610.2 1290.3 603.8 1293.6 609.8 1296.3 604.3 1298.3 610.2 1303.2 603.6 1305.8 610 1309.6 604.1 1313.9 610.5 1315 604.3 1320 609 1321.6 604.9 1325 609.8 1328.7 604.5 1330.6 610.9 1335.3 603.9 1337.9 609.3 1341 603.2 1344.5 609.3 1349.4 604.1 1352.5 609.9 1354.8 604.1 1358 609.6 1362.1 603.4 1363.2 609.4 1366.8 604.7 1372 610.5 1374.1 604.3 1378.5 609.3 1381.7 604.9 1383.2 608.8 1388.3 603 1390.6 609.5 1393.4 604.7 1396.9 609.8 1401.1 603.2 1403.7 609.5 1405.8 603.4 1410.8 609.1 1412.1 603.7 1417.7 609.9 1420.6 604 1421.7 609.4 1426.1 603.1 1429.6 609.6 1432.5 605.1 1436.2 609.4 1439.8 603.9 1441.9 610.5 1445.7 604.7 1448.4 610.3 1453 603.2 1456.3 610 1459.3 603.7M1039.6 609.2 1042.6 616.6 1045.6 609.4 1049.1 616.4 1052.2 608.7 1054.5 615.5 1058.2 610 1062.6 614.6 1064.3 609.1 1069.8 614.6 1072.6 609.3 1075.5 614.9 1078 609.2 1082.9 615.7 1085.9 608.9 1089.1 615.6 1091.9 610.6 1095.2 616 1097.2 609.6 1100.7 615 1105.3 610.1 1108.7 614.8 1110.6 608.8 1115.4 614.9 1117.3 609.5 1119.6 614.7 1124.6 609.3 1128 616.6 1130.2 610.1 1133.5 616 1137.9 609.5 1139.6 616.5 1143.2 610 1147.3 614.8 1151.2 609.1 1152 616 1157.8 610.3 1158.5 616.4 1162.6 610.2 1165.7 615 1169 608.8 1173 615.2 1176.7 609.5 1179.4 614.8 1182.6 609.8 1186.9 615.2 1190.1 610.4 1193.2 614.8 1194.2 610 1199.6 616.7 1201.9 609.7 1204.9 614.6 1209.5 609.6 1211.4 615.9 1214.9 610.7 1217.5 615.7 1221.3 609.8 1223.6 615.5 1228 610.5 1231.9 615.4 1235 610.3 1238.3 614.7 1240.7 608.8 1245.2 614.8 1248 609.9 1251.9 616.7 1254.8 610.4 1258.5 615.7 1259.4 609.2 1263.2 615.3 1265.8 610.5 1271 615.6 1272.4 608.9 1278 614.7 1280.7 609.9 1283.2 616.4 1285.3 610.2 1290 615.7 1293.6 609.8 1295.1 614.8 1298.3 610.2 1302.1 616.5 1305.8 610 1310.2 615 1313.9 610.5 1316.9 614.6 1320 609 1322.5 616.6 1325 609.8 1328.3 616.6 1330.6 610.9 1335.7 614.6 1337.9 609.3 1341.3 615.5 1344.5 609.3 1347.5 616.1 1352.5 609.9 1353.9 616.2 1358 609.6 1360.7 614.6 1363.2 609.4 1367.9 614.7 1372 610.5 1374.4 616.2 1378.5 609.3 1381 615.5 1383.2 608.8 1385.9 615.6 1390.6 609.5 1392.6 615.9 1396.9 609.8 1399.2 615.8 1403.7 609.5 1406.3 615.3 1410.8 609.1 1413.7 614.8 1417.7 609.9 1418.8 616.6 1421.7 609.4 1425.8 616.4 1429.6 609.6 1433.8 615.6 1436.2 609.4 1438.3 614.7 1441.9 610.5 1446.8 614.7 1448.4 610.3 1452.2 615.7 1456.3 610 1457.7 615.5M1038.6 621.5 1042.6 616.6 1046 621.1 1049.1 616.4 1051.7 621.2 1054.5 615.5 1058.2 620.6 1062.6 614.6 1064.8 622.2 1069.8 614.6 1072 622.3 1075.5 614.9 1077.1 622.4 1082.9 615.7 1085 622.1 1089.1 615.6 1091.7 621.8 1095.2 616 1097.2 622 1100.7 615 1103.5 620.9 1108.7 614.8 1109.7 621.2 1115.4 614.9 1117.6 620.9 1119.6 614.7 1125.1 620.5 1128 616.6 1130.7 620.8 1133.5 616 1137.3 622 1139.6 616.5 1144.1 620.4 1147.3 614.8 1149.3 621.6 1152 616 1157.9 620.4 1158.5 616.4 1163.3 621.8 1165.7 615 1170.4 621 1173 615.2 1176.9 621.3 1179.4 614.8 1183.7 620.3 1186.9 615.2 1190.2 621.2 1193.2 614.8 1195.2 620.5 1199.6 616.7 1201.3 621.9 1204.9 614.6 1209 620.6 1211.4 615.9 1214.6 620.6 1217.5 615.7 1220.7 620.8 1223.6 615.5 1227.5 622.5 1231.9 615.4 1235.9 622.1 1238.3 614.7 1240.9 621.4 1245.2 614.8 1248.3 622.3 1251.9 616.7 1254.7 621.7 1258.5 615.7 1259.7 621.7 1263.2 615.3 1268 622 1271 615.6 1272.4 621.9 1278 614.7 1279.6 620.6 1283.2 616.4 1287.8 621.8 1290 615.7 1293.7 620.6 1295.1 614.8 1300.4 622.4 1302.1 616.5 1307.1 621.9 1310.2 615 1313.4 622.1 1316.9 614.6 1319.3 621.3 1322.5 616.6 1326.4 622 1328.3 616.6 1333 620.9 1335.7 614.6 1339.8 621.5 1341.3 615.5 1346.2 620.5 1347.5 616.1 1352.8 622 1353.9 616.2 1357.3 622.2 1360.7 614.6 1363.7 620.7 1367.9 614.7 1370.9 620.8 1374.4 616.2 1377.5 622.3 1381 615.5 1384.5 621.9 1385.9 615.6 1390.2 622 1392.6 615.9 1397.8 621.8 1399.2 615.8 1404.7 622.1 1406.3 615.3 1409.7 620.5 1413.7 614.8 1416.9 622.2 1418.8 616.6 1422.6 621.6 1425.8 616.4 1430.4 622.1 1433.8 615.6 1434.6 621.4 1438.3 614.7 1441.1 620.5 1446.8 614.7 1449.9 621.2 1452.2 615.7 1455.8 621.3 1457.7 615.5M1038.6 621.5 1042.3 626.6 1046 621.1 1048.8 628 1051.7 621.2 1056.1 626.7 1058.2 620.6 1061.1 626.7 1064.8 622.2 1069.3 627.1 1072 622.3 1075.7 627.9 1077.1 622.4 1080.7 627.6 1085 622.1 1087 627.9 1091.7 621.8 1093.9 626.7 1097.2 622 1102.5 626.9 1103.5 620.9 1107 628.1 1109.7 621.2 1114.6 628.1 1117.6 620.9 1120.5 627.2 1125.1 620.5 1128.5 627.2 1130.7 620.8 1135.1 626.5 1137.3 622 1141.2 626.4 1144.1 620.4 1146.8 626.1 1149.3 621.6 1152.3 628.2 1157.9 620.4 1159.6 627.9 1163.3 621.8 1165.6 626.9 1170.4 621 1171.6 627.3 1176.9 621.3 1180.3 627.2 1183.7 620.3 1185.4 628.2 1190.2 621.2 1193.4 627.6 1195.2 620.5 1197.6 627.5 1201.3 621.9 1205.1 628.2 1209 620.6 1211.4 627.6 1214.6 620.6 1218.6 626.9 1220.7 620.8 1224.8 627.6 1227.5 622.5 1232.4 627.2 1235.9 622.1 1237.4 628.3 1240.9 621.4 1243 627.9 1248.3 622.3 1251.3 627.3 1254.7 621.7 1257.1 627.8 1259.7 621.7 1264.8 627.7 1268 622 1270.9 626.2 1272.4 621.9 1276.3 626.4 1279.6 620.6 1284.5 628.1 1287.8 621.8 1288.8 627.4 1293.7 620.6 1296.5 626.2 1300.4 622.4 1302.4 627.8 1307.1 621.9 1309.6 626.7 1313.4 622.1 1316.5 626.7 1319.3 621.3 1322.4 627 1326.4 622 1330.1 627.5 1333 620.9 1336.1 627.6 1339.8 621.5 1341.4 628.2 1346.2 620.5 1348.8 627.6 1352.8 622 1354.1 626.4 1357.3 622.2 1361.5 627.9 1363.7 620.7 1368.6 626.9 1370.9 620.8 1373.2 627.2 1377.5 622.3 1381.8 626.4 1384.5 621.9 1387.9 626.5 1390.2 622 1393.2 626.2 1397.8 621.8 1399.7 626.9 1404.7 622.1 1408.1 628.2 1409.7 620.5 1412.4 626.8 1416.9 622.2 1421 626.5 1422.6 621.6 1425.7 627.1 1430.4 622.1 1431.7 626.7 1434.6 621.4 1439 626.9 1441.1 620.5 1447 626.7 1449.9 621.2 1451.4 628.1 1455.8 621.3 1458.6 628" fill="none" stroke="#000" stroke-width="0.8" stroke-opacity="0.75"/>
<path d="M1127.7 517 H1211.7 V560 L1365.5 564.4 L1382 565 V596 H1452 V625 H1413 L1212 611.8 Q1205 613 1211 619 L1046.6 622 V603 H1121 V601.6 H1066.7 V593.4 L1121 593 V570 H1066.3 V562 L1121 560.5 L1120.3 555 L1127 553 H1136.5 V541.6 H1127.7 Z" fill="none" stroke="#111" stroke-width="1"/>
<clipPath id="c11"><path d="M1413 596 H1452 V625 H1413 Z"/></clipPath>
<path d="M1413 596 H1452 V625 H1413 Z" fill="#6787bb"/>
<path clip-path="url(#c11)" d="M1401.3 596.4 1412.6 595.4 1425.5 596 1437.1 596.3 1449.5 595.6 1460.7 596.7M1407.1 605.7 1419.3 605.6 1431.5 605.3 1443.7 606.1 1454.7 606.7 1466.5 605.6M1400.1 616.1 1413.5 616.3 1424.8 616.5 1436.2 615.7 1449.3 616.7 1461.3 616.3M1407.5 625.8 1419.9 626.4 1430.7 625.8 1443.6 625.8 1454.4 626.6 1467.1 626M1401.3 596.4 1407.1 605.7 1412.6 595.4 1419.3 605.6 1425.5 596 1431.5 605.3 1437.1 596.3 1443.7 606.1 1449.5 595.6 1454.7 606.7 1460.7 596.7 1466.5 605.6M1400.1 616.1 1407.1 605.7 1413.5 616.3 1419.3 605.6 1424.8 616.5 1431.5 605.3 1436.2 615.7 1443.7 606.1 1449.3 616.7 1454.7 606.7 1461.3 616.3 1466.5 605.6M1400.1 616.1 1407.5 625.8 1413.5 616.3 1419.9 626.4 1424.8 616.5 1430.7 625.8 1436.2 615.7 1443.6 625.8 1449.3 616.7 1454.4 626.6 1461.3 616.3 1467.1 626" fill="none" stroke="#000" stroke-width="0.8" stroke-opacity="0.8"/>
<path d="M1413 596 H1452 V625 H1413 Z" fill="none" stroke="#111" stroke-width="0.8"/>
<path d="M1046.6 603.5 H1121 M1211.7 560.5 L1365 564.9" stroke="#000" stroke-width="2" fill="none"/>
<path d="M1150 519 L1176 554 Q1180 559 1190 559.5 L1212 560.5" stroke="#000" stroke-width="2.6" fill="none"/>
<path fill="#0a1a35" fill-opacity="0.42" d="M1153 571.0 L1166 593.0 L1179 571.0Z M1174 598.0 L1186 576.0 L1198 598.0Z M1198 573.7 L1211 595.7 L1224 573.7Z M1219 600.7 L1231 578.7 L1243 600.7Z M1245 576.5 L1258 598.5 L1271 576.5Z M1266 603.5 L1278 581.5 L1290 603.5Z M1292 579.3 L1305 601.3 L1318 579.3Z M1313 606.3 L1325 584.3 L1337 606.3Z"/>
<path d="M1174 598.5 H1198 M1219 601.2 H1243 M1266 604.0 H1290 M1313 606.8 H1337 M1335 566 L1366 592" stroke="#000" stroke-width="1.8" fill="none"/>
<clipPath id="c12"><path d="M1366 518 H1492 V579 Q1492 594 1476 596.5 H1382 Q1366 594 1366 579 Z"/></clipPath>
<path d="M1366 518 H1492 V579 Q1492 594 1476 596.5 H1382 Q1366 594 1366 579 Z" fill="#4d6da2"/>
<path clip-path="url(#c12)" d="M1359.1 519.2 1364.7 517.5 1371.9 517.8 1381 519 1389.1 518.2 1395.7 518.2 1402.7 519 1412 519 1417.2 518.5 1426.9 518 1434.9 519.1 1441.9 518.9 1449 519.1 1454.7 518.6 1464.2 518.3 1470.2 516.8 1478.9 518.9 1485.2 517.2 1492.5 516.8M1362.9 525.9 1370.8 524.1 1378 523.3 1386 524 1390.5 524.9 1398.4 523.9 1405.7 524.3 1414.9 525.4 1420.6 525.4 1428.3 523.7 1437.7 524 1444.1 524.7 1451.2 525.3 1458.7 525.5 1468.4 524.6 1473.1 525.3 1480.6 524.5 1489.5 523.2 1497.7 525.1M1358.8 530.7 1366 531.3 1372.5 532.1 1382.8 531.9 1390.2 530.5 1397.8 529.8 1403.4 529.9 1410.8 531.5 1419.3 530.9 1425.4 530.1 1433.2 530.4 1439.9 531.7 1448.6 530.8 1454.9 531.6 1462.4 530.3 1471.2 531.6 1480.2 531.7 1487.6 532.2 1494.3 531.6M1360.7 536.7 1368 538.5 1378 537.9 1383.9 537.1 1391 537.9 1401.5 536.9 1405.6 536.6 1414.2 538.6 1423.3 537.4 1428.3 536.4 1436 538.3 1444.6 538.9 1453.7 538.3 1459.7 538.4 1465.9 536.4 1475 537.5 1481.2 536.8 1488 538.7 1498 538.8M1360.2 543.8 1366.8 543.7 1374.6 545 1379.7 542.6 1387.5 544.2 1395.6 542.6 1404.7 544.8 1410.9 542.7 1419.9 544.1 1424.5 543.5 1433.9 545.1 1440.9 544.4 1447.4 543.3 1457.5 543.7 1462.1 544.3 1469.7 543.1 1478.3 544.2 1486.5 544.6 1493.3 542.8M1363.1 549.2 1369.6 550.2 1377.9 551.1 1383.8 550.9 1392.9 550.4 1398.5 551.7 1407.6 549.2 1413.8 551.9 1421.3 550.2 1430.8 551.4 1437.7 551.2 1443.1 549.3 1454 551.4 1458.1 549.2 1466.3 551.7 1473.7 551 1483.8 550.9 1491.3 549.8 1496 549.1M1359.4 555.9 1367.7 557.6 1372.4 557.9 1379.8 557 1387.1 557.8 1397.4 558.2 1401.7 558 1411.2 557.9 1418.5 557.3 1426.3 557.9 1432 555.7 1441.2 556.4 1448.1 555.6 1456.9 555.6 1464.7 557.9 1470.8 555.9 1479 556.2 1485.7 555.9 1495.2 557.1M1361.7 562.3 1370.6 564.5 1378.5 562.4 1384.3 562.9 1393.2 562.5 1400.1 564.9 1408.2 562.1 1413.2 562.4 1422.9 563.8 1429.8 563.4 1436.9 563.8 1445.3 564.7 1453.1 564.4 1461.2 564.5 1468 562.1 1475.4 564.5 1482 564.6 1488.6 564.8 1497 564.1M1357.6 569.4 1365.5 569.5 1372 569.8 1382.7 570.4 1390.1 570.8 1397.2 571.4 1404.4 569.3 1410.1 569.7 1416.8 569.2 1427.4 571.2 1432.9 570.8 1442 571.1 1449.6 570.1 1454.6 570.9 1462.8 570.4 1470.5 570.1 1480.2 569 1486.1 570.4 1493.6 571.3M1361.9 577.7 1370.4 577.8 1375.8 575.7 1384 577.7 1390.5 575.8 1400.5 577.9 1406.1 576.3 1415.4 577 1423.1 577.2 1428.8 575.8 1435.5 577.1 1443.7 575.8 1453.9 576.9 1460.1 576.9 1467.6 577.1 1474 575.2 1480.7 575.1 1489.3 575.5 1495.9 576.5M1360.2 583.5 1365.2 583.8 1372.3 581.8 1380.3 582.7 1389.2 582.8 1396.8 581.8 1405.1 582.5 1412.2 581.6 1419.7 582.2 1427.3 583.9 1434.1 582.4 1439.2 582.1 1450 582 1456.6 583.3 1464.1 582.1 1469.7 581.8 1480.2 582.7 1486.5 583.2 1492.5 581.7M1360.5 590.5 1368.4 590.8 1376.8 590.1 1383.4 590.3 1391.4 589.1 1399.8 588.4 1406.3 590.4 1414 589.2 1423.2 588.7 1428.6 588.7 1436.8 589.1 1445.3 589.4 1453.6 588.2 1460.3 590.5 1466.3 588.1 1474.5 588.4 1482.1 590.1 1488.3 588.4 1497.2 588.6M1357.5 595.8 1364.6 594.8 1373 595.9 1382.6 596.2 1387 595.2 1396.9 596.2 1404.8 597.3 1412.3 594.9 1420.1 596.1 1425.1 595.1 1434.8 595.2 1439.5 595.3 1450 595.9 1456.8 594.8 1463.3 595.5 1469.9 596.5 1478 594.9 1487.7 595.9 1492.3 594.6M1362.8 602.5 1368 602.4 1378.1 602.6 1383.8 602.5 1392.6 602.9 1398.5 603.4 1408.9 603.2 1416 602.1 1423.7 601.6 1428.8 602.8 1438.7 601.3 1443.7 601.2 1452 601.5 1458.6 603.2 1467.5 603.8 1474.4 603 1480.5 603.8 1488.8 602.4 1497.3 603.8M1359.1 519.2 1362.9 525.9 1364.7 517.5 1370.8 524.1 1371.9 517.8 1378 523.3 1381 519 1386 524 1389.1 518.2 1390.5 524.9 1395.7 518.2 1398.4 523.9 1402.7 519 1405.7 524.3 1412 519 1414.9 525.4 1417.2 518.5 1420.6 525.4 1426.9 518 1428.3 523.7 1434.9 519.1 1437.7 524 1441.9 518.9 1444.1 524.7 1449 519.1 1451.2 525.3 1454.7 518.6 1458.7 525.5 1464.2 518.3 1468.4 524.6 1470.2 516.8 1473.1 525.3 1478.9 518.9 1480.6 524.5 1485.2 517.2 1489.5 523.2 1492.5 516.8 1497.7 525.1M1358.8 530.7 1362.9 525.9 1366 531.3 1370.8 524.1 1372.5 532.1 1378 523.3 1382.8 531.9 1386 524 1390.2 530.5 1390.5 524.9 1397.8 529.8 1398.4 523.9 1403.4 529.9 1405.7 524.3 1410.8 531.5 1414.9 525.4 1419.3 530.9 1420.6 525.4 1425.4 530.1 1428.3 523.7 1433.2 530.4 1437.7 524 1439.9 531.7 1444.1 524.7 1448.6 530.8 1451.2 525.3 1454.9 531.6 1458.7 525.5 1462.4 530.3 1468.4 524.6 1471.2 531.6 1473.1 525.3 1480.2 531.7 1480.6 524.5 1487.6 532.2 1489.5 523.2 1494.3 531.6 1497.7 525.1M1358.8 530.7 1360.7 536.7 1366 531.3 1368 538.5 1372.5 532.1 1378 537.9 1382.8 531.9 1383.9 537.1 1390.2 530.5 1391 537.9 1397.8 529.8 1401.5 536.9 1403.4 529.9 1405.6 536.6 1410.8 531.5 1414.2 538.6 1419.3 530.9 1423.3 537.4 1425.4 530.1 1428.3 536.4 1433.2 530.4 1436 538.3 1439.9 531.7 1444.6 538.9 1448.6 530.8 1453.7 538.3 1454.9 531.6 1459.7 538.4 1462.4 530.3 1465.9 536.4 1471.2 531.6 1475 537.5 1480.2 531.7 1481.2 536.8 1487.6 532.2 1488 538.7 1494.3 531.6 1498 538.8M1360.2 543.8 1360.7 536.7 1366.8 543.7 1368 538.5 1374.6 545 1378 537.9 1379.7 542.6 1383.9 537.1 1387.5 544.2 1391 537.9 1395.6 542.6 1401.5 536.9 1404.7 544.8 1405.6 536.6 1410.9 542.7 1414.2 538.6 1419.9 544.1 1423.3 537.4 1424.5 543.5 1428.3 536.4 1433.9 545.1 1436 538.3 1440.9 544.4 1444.6 538.9 1447.4 543.3 1453.7 538.3 1457.5 543.7 1459.7 538.4 1462.1 544.3 1465.9 536.4 1469.7 543.1 1475 537.5 1478.3 544.2 1481.2 536.8 1486.5 544.6 1488 538.7 1493.3 542.8 1498 538.8M1360.2 543.8 1363.1 549.2 1366.8 543.7 1369.6 550.2 1374.6 545 1377.9 551.1 1379.7 542.6 1383.8 550.9 1387.5 544.2 1392.9 550.4 1395.6 542.6 1398.5 551.7 1404.7 544.8 1407.6 549.2 1410.9 542.7 1413.8 551.9 1419.9 544.1 1421.3 550.2 1424.5 543.5 1430.8 551.4 1433.9 545.1 1437.7 551.2 1440.9 544.4 1443.1 549.3 1447.4 543.3 1454 551.4 1457.5 543.7 1458.1 549.2 1462.1 544.3 1466.3 551.7 1469.7 543.1 1473.7 551 1478.3 544.2 1483.8 550.9 1486.5 544.6 1491.3 549.8 1493.3 542.8 1496 549.1M1359.4 555.9 1363.1 549.2 1367.7 557.6 1369.6 550.2 1372.4 557.9 1377.9 551.1 1379.8 557 1383.8 550.9 1387.1 557.8 1392.9 550.4 1397.4 558.2 1398.5 551.7 1401.7 558 1407.6 549.2 1411.2 557.9 1413.8 551.9 1418.5 557.3 1421.3 550.2 1426.3 557.9 1430.8 551.4 1432 555.7 1437.7 551.2 1441.2 556.4 1443.1 549.3 1448.1 555.6 1454 551.4 1456.9 555.6 1458.1 549.2 1464.7 557.9 1466.3 551.7 1470.8 555.9 1473.7 551 1479 556.2 1483.8 550.9 1485.7 555.9 1491.3 549.8 1495.2 557.1 1496 549.1M1359.4 555.9 1361.7 562.3 1367.7 557.6 1370.6 564.5 1372.4 557.9 1378.5 562.4 1379.8 557 1384.3 562.9 1387.1 557.8 1393.2 562.5 1397.4 558.2 1400.1 564.9 1401.7 558 1408.2 562.1 1411.2 557.9 1413.2 562.4 1418.5 557.3 1422.9 563.8 1426.3 557.9 1429.8 563.4 1432 555.7 1436.9 563.8 1441.2 556.4 1445.3 564.7 1448.1 555.6 1453.1 564.4 1456.9 555.6 1461.2 564.5 1464.7 557.9 1468 562.1 1470.8 555.9 1475.4 564.5 1479 556.2 1482 564.6 1485.7 555.9 1488.6 564.8 1495.2 557.1 1497 564.1M1357.6 569.4 1361.7 562.3 1365.5 569.5 1370.6 564.5 1372 569.8 1378.5 562.4 1382.7 570.4 1384.3 562.9 1390.1 570.8 1393.2 562.5 1397.2 571.4 1400.1 564.9 1404.4 569.3 1408.2 562.1 1410.1 569.7 1413.2 562.4 1416.8 569.2 1422.9 563.8 1427.4 571.2 1429.8 563.4 1432.9 570.8 1436.9 563.8 1442 571.1 1445.3 564.7 1449.6 570.1 1453.1 564.4 1454.6 570.9 1461.2 564.5 1462.8 570.4 1468 562.1 1470.5 570.1 1475.4 564.5 1480.2 569 1482 564.6 1486.1 570.4 1488.6 564.8 1493.6 571.3 1497 564.1M1357.6 569.4 1361.9 577.7 1365.5 569.5 1370.4 577.8 1372 569.8 1375.8 575.7 1382.7 570.4 1384 577.7 1390.1 570.8 1390.5 575.8 1397.2 571.4 1400.5 577.9 1404.4 569.3 1406.1 576.3 1410.1 569.7 1415.4 577 1416.8 569.2 1423.1 577.2 1427.4 571.2 1428.8 575.8 1432.9 570.8 1435.5 577.1 1442 571.1 1443.7 575.8 1449.6 570.1 1453.9 576.9 1454.6 570.9 1460.1 576.9 1462.8 570.4 1467.6 577.1 1470.5 570.1 1474 575.2 1480.2 569 1480.7 575.1 1486.1 570.4 1489.3 575.5 1493.6 571.3 1495.9 576.5M1360.2 583.5 1361.9 577.7 1365.2 583.8 1370.4 577.8 1372.3 581.8 1375.8 575.7 1380.3 582.7 1384 577.7 1389.2 582.8 1390.5 575.8 1396.8 581.8 1400.5 577.9 1405.1 582.5 1406.1 576.3 1412.2 581.6 1415.4 577 1419.7 582.2 1423.1 577.2 1427.3 583.9 1428.8 575.8 1434.1 582.4 1435.5 577.1 1439.2 582.1 1443.7 575.8 1450 582 1453.9 576.9 1456.6 583.3 1460.1 576.9 1464.1 582.1 1467.6 577.1 1469.7 581.8 1474 575.2 1480.2 582.7 1480.7 575.1 1486.5 583.2 1489.3 575.5 1492.5 581.7 1495.9 576.5M1360.2 583.5 1360.5 590.5 1365.2 583.8 1368.4 590.8 1372.3 581.8 1376.8 590.1 1380.3 582.7 1383.4 590.3 1389.2 582.8 1391.4 589.1 1396.8 581.8 1399.8 588.4 1405.1 582.5 1406.3 590.4 1412.2 581.6 1414 589.2 1419.7 582.2 1423.2 588.7 1427.3 583.9 1428.6 588.7 1434.1 582.4 1436.8 589.1 1439.2 582.1 1445.3 589.4 1450 582 1453.6 588.2 1456.6 583.3 1460.3 590.5 1464.1 582.1 1466.3 588.1 1469.7 581.8 1474.5 588.4 1480.2 582.7 1482.1 590.1 1486.5 583.2 1488.3 588.4 1492.5 581.7 1497.2 588.6M1357.5 595.8 1360.5 590.5 1364.6 594.8 1368.4 590.8 1373 595.9 1376.8 590.1 1382.6 596.2 1383.4 590.3 1387 595.2 1391.4 589.1 1396.9 596.2 1399.8 588.4 1404.8 597.3 1406.3 590.4 1412.3 594.9 1414 589.2 1420.1 596.1 1423.2 588.7 1425.1 595.1 1428.6 588.7 1434.8 595.2 1436.8 589.1 1439.5 595.3 1445.3 589.4 1450 595.9 1453.6 588.2 1456.8 594.8 1460.3 590.5 1463.3 595.5 1466.3 588.1 1469.9 596.5 1474.5 588.4 1478 594.9 1482.1 590.1 1487.7 595.9 1488.3 588.4 1492.3 594.6 1497.2 588.6M1357.5 595.8 1362.8 602.5 1364.6 594.8 1368 602.4 1373 595.9 1378.1 602.6 1382.6 596.2 1383.8 602.5 1387 595.2 1392.6 602.9 1396.9 596.2 1398.5 603.4 1404.8 597.3 1408.9 603.2 1412.3 594.9 1416 602.1 1420.1 596.1 1423.7 601.6 1425.1 595.1 1428.8 602.8 1434.8 595.2 1438.7 601.3 1439.5 595.3 1443.7 601.2 1450 595.9 1452 601.5 1456.8 594.8 1458.6 603.2 1463.3 595.5 1467.5 603.8 1469.9 596.5 1474.4 603 1478 594.9 1480.5 603.8 1487.7 595.9 1488.8 602.4 1492.3 594.6 1497.3 603.8" fill="none" stroke="#000" stroke-width="0.85" stroke-opacity="0.8"/>
<path d="M1366 518 H1492 V579 Q1492 594 1476 596.5 H1382 Q1366 594 1366 579 Z" fill="none" stroke="#111" stroke-width="1"/>
<path d="M1429 518 V596" stroke="#000" stroke-width="0.9" stroke-opacity="0.8"/>
<path d="M1366 579.5 H1492 M1368 585.5 H1490" stroke="#000" stroke-width="1.3"/>
<clipPath id="c13"><path d="M1384.6 497.6 H1473 L1491.6 517.7 H1365.7 Z"/></clipPath>
<path d="M1384.6 497.6 H1473 L1491.6 517.7 H1365.7 Z" fill="#4d6da2"/>
<path clip-path="url(#c13)" d="M1358 497.9 1365.3 496.5 1372.8 496.4 1380.2 496.9 1385.3 497.9 1392.6 496.8 1399.6 497.3 1405.9 496.8 1413.2 497.6 1419.8 497.2 1427.4 496.9 1435.1 497.4 1441.1 496.5 1448.1 497.9 1455.2 496.3 1463.1 497.2 1470.9 496.1 1476.4 496.4 1484.2 496.9 1490.8 497.7 1498.4 497.7M1362.6 502.6 1369.6 502.8 1374.4 503.8 1381.5 502.1 1389 502.6 1397.6 503.7 1403.3 503.1 1411.3 503.6 1417.9 503 1423.6 502.5 1431.9 503.2 1439.2 503.8 1446.6 502.4 1451.5 503.8 1459.7 502.4 1467 502.5 1472.9 502.7 1480.6 503.3 1486.5 503.5 1494.8 502.9 1501.9 503.6M1356.8 509 1365.4 509.4 1372.4 508.4 1380.1 509.5 1385.4 508.9 1394.1 508.4 1399.8 509.9 1408 508.5 1414.6 508.7 1421.4 509.5 1427.1 508.5 1434.3 508.6 1440.9 508.3 1448.8 508.8 1455 509.2 1464.1 509.1 1469.7 509.4 1476.8 508.4 1484 508.1 1491.4 508.3 1497.7 509.9M1362.1 515.6 1368.8 515.3 1376 515.9 1381.8 515.5 1389 514.5 1397.3 515.2 1404.3 515.7 1410.7 514.4 1416.3 515.1 1425 514.6 1430.5 514 1437.7 515.4 1444.3 514.5 1451.9 515.4 1460.7 514.1 1465.6 515.8 1474.6 514.3 1480.1 515 1487.1 514.8 1494.4 514.5 1500.4 514.2M1357.2 520.2 1365.3 521.4 1371.4 521.6 1379.5 520.7 1386 520.4 1394 521.1 1398.9 520.3 1407.5 520.8 1414.5 520.5 1421.7 521.6 1427 521.2 1434.3 521.4 1442.7 521.6 1448.4 520.2 1456.4 521.1 1462.1 520.4 1470.2 520.2 1477.3 520.5 1483.4 520.9 1491.1 521.4 1496.9 521.4M1358 497.9 1362.6 502.6 1365.3 496.5 1369.6 502.8 1372.8 496.4 1374.4 503.8 1380.2 496.9 1381.5 502.1 1385.3 497.9 1389 502.6 1392.6 496.8 1397.6 503.7 1399.6 497.3 1403.3 503.1 1405.9 496.8 1411.3 503.6 1413.2 497.6 1417.9 503 1419.8 497.2 1423.6 502.5 1427.4 496.9 1431.9 503.2 1435.1 497.4 1439.2 503.8 1441.1 496.5 1446.6 502.4 1448.1 497.9 1451.5 503.8 1455.2 496.3 1459.7 502.4 1463.1 497.2 1467 502.5 1470.9 496.1 1472.9 502.7 1476.4 496.4 1480.6 503.3 1484.2 496.9 1486.5 503.5 1490.8 497.7 1494.8 502.9 1498.4 497.7 1501.9 503.6M1356.8 509 1362.6 502.6 1365.4 509.4 1369.6 502.8 1372.4 508.4 1374.4 503.8 1380.1 509.5 1381.5 502.1 1385.4 508.9 1389 502.6 1394.1 508.4 1397.6 503.7 1399.8 509.9 1403.3 503.1 1408 508.5 1411.3 503.6 1414.6 508.7 1417.9 503 1421.4 509.5 1423.6 502.5 1427.1 508.5 1431.9 503.2 1434.3 508.6 1439.2 503.8 1440.9 508.3 1446.6 502.4 1448.8 508.8 1451.5 503.8 1455 509.2 1459.7 502.4 1464.1 509.1 1467 502.5 1469.7 509.4 1472.9 502.7 1476.8 508.4 1480.6 503.3 1484 508.1 1486.5 503.5 1491.4 508.3 1494.8 502.9 1497.7 509.9 1501.9 503.6M1356.8 509 1362.1 515.6 1365.4 509.4 1368.8 515.3 1372.4 508.4 1376 515.9 1380.1 509.5 1381.8 515.5 1385.4 508.9 1389 514.5 1394.1 508.4 1397.3 515.2 1399.8 509.9 1404.3 515.7 1408 508.5 1410.7 514.4 1414.6 508.7 1416.3 515.1 1421.4 509.5 1425 514.6 1427.1 508.5 1430.5 514 1434.3 508.6 1437.7 515.4 1440.9 508.3 1444.3 514.5 1448.8 508.8 1451.9 515.4 1455 509.2 1460.7 514.1 1464.1 509.1 1465.6 515.8 1469.7 509.4 1474.6 514.3 1476.8 508.4 1480.1 515 1484 508.1 1487.1 514.8 1491.4 508.3 1494.4 514.5 1497.7 509.9 1500.4 514.2M1357.2 520.2 1362.1 515.6 1365.3 521.4 1368.8 515.3 1371.4 521.6 1376 515.9 1379.5 520.7 1381.8 515.5 1386 520.4 1389 514.5 1394 521.1 1397.3 515.2 1398.9 520.3 1404.3 515.7 1407.5 520.8 1410.7 514.4 1414.5 520.5 1416.3 515.1 1421.7 521.6 1425 514.6 1427 521.2 1430.5 514 1434.3 521.4 1437.7 515.4 1442.7 521.6 1444.3 514.5 1448.4 520.2 1451.9 515.4 1456.4 521.1 1460.7 514.1 1462.1 520.4 1465.6 515.8 1470.2 520.2 1474.6 514.3 1477.3 520.5 1480.1 515 1483.4 520.9 1487.1 514.8 1491.1 521.4 1494.4 514.5 1496.9 521.4 1500.4 514.2" fill="none" stroke="#000" stroke-width="0.85" stroke-opacity="0.8"/>
<path d="M1384.6 497.6 H1473 L1491.6 517.7 H1365.7 Z" fill="none" stroke="#111" stroke-width="1"/>
<path d="M1377 514 L1388 503 L1393 503 L1382 514Z M1470 503 L1475 503 L1486 514 L1481 514Z" fill="#fff"/>
<path d="M1412 504 H1446 M1412 504 V517 M1446 504 V517" stroke="#000" stroke-width="1.2" fill="none"/>
<rect x="1416" y="509" width="6" height="8" fill="#fff"/><rect x="1434" y="509" width="6" height="8" fill="#fff"/>
<clipPath id="c14"><path d="M1384.6 476.6 H1473 V497.6 H1384.6 Z"/></clipPath>
<path d="M1384.6 476.6 H1473 V497.6 H1384.6 Z" fill="#4d6da2"/>
<path clip-path="url(#c14)" d="M1374.3 475.6 1384.3 476.4 1393.3 476.8 1401.3 475.6 1411.4 475.5 1419.2 475.5 1429.7 476.6 1438.5 476.9 1447.7 475.6 1455.6 476.4 1463.9 476.2 1473 475.1M1379.5 482.8 1389.5 484.2 1397.4 482.9 1405.6 483.5 1415.6 483.2 1425 483.6 1434.2 482.7 1441.5 483.3 1451.5 483 1460.9 483 1469.1 483.5 1479 484M1374.7 490.9 1385 491.8 1393.3 490.2 1401.9 491.3 1410.5 490.1 1421.2 491.8 1428.1 490.9 1438.3 490.6 1446 491.5 1456.6 490.9 1464 490.8 1473 491.9M1378.4 498.1 1389.1 497.8 1396.6 497.7 1405.7 498.6 1416.3 497.9 1423.7 499 1433.3 498.2 1441.6 498 1452.6 497.8 1459.9 499 1470.4 499.3 1478.4 499.4M1374.3 475.6 1379.5 482.8 1384.3 476.4 1389.5 484.2 1393.3 476.8 1397.4 482.9 1401.3 475.6 1405.6 483.5 1411.4 475.5 1415.6 483.2 1419.2 475.5 1425 483.6 1429.7 476.6 1434.2 482.7 1438.5 476.9 1441.5 483.3 1447.7 475.6 1451.5 483 1455.6 476.4 1460.9 483 1463.9 476.2 1469.1 483.5 1473 475.1 1479 484M1374.7 490.9 1379.5 482.8 1385 491.8 1389.5 484.2 1393.3 490.2 1397.4 482.9 1401.9 491.3 1405.6 483.5 1410.5 490.1 1415.6 483.2 1421.2 491.8 1425 483.6 1428.1 490.9 1434.2 482.7 1438.3 490.6 1441.5 483.3 1446 491.5 1451.5 483 1456.6 490.9 1460.9 483 1464 490.8 1469.1 483.5 1473 491.9 1479 484M1374.7 490.9 1378.4 498.1 1385 491.8 1389.1 497.8 1393.3 490.2 1396.6 497.7 1401.9 491.3 1405.7 498.6 1410.5 490.1 1416.3 497.9 1421.2 491.8 1423.7 499 1428.1 490.9 1433.3 498.2 1438.3 490.6 1441.6 498 1446 491.5 1452.6 497.8 1456.6 490.9 1459.9 499 1464 490.8 1470.4 499.3 1473 491.9 1478.4 499.4" fill="none" stroke="#000" stroke-width="0.85" stroke-opacity="0.8"/>
<path d="M1384.6 476.6 H1473 V497.6 H1384.6 Z" fill="none" stroke="#111" stroke-width="1"/>
<clipPath id="c15"><path d="M1409 424 Q1429 418 1449 424 V444 H1409 Z"/></clipPath>
<path d="M1409 424 Q1429 418 1449 424 V444 H1409 Z" fill="#4d6da2"/>
<path clip-path="url(#c15)" d="M1402.2 417.7 1408.9 418.3 1416.5 417.4 1422.4 418.7 1429.2 418.5 1436.7 417.6 1443.5 418 1452 417.4M1406.2 424.2 1411.8 424.9 1419.2 424 1426.3 425 1434.2 424.6 1439.5 424.9 1447.7 425.1 1455.4 424.2M1402.7 431.5 1408.5 430.8 1415.7 430.8 1422.8 430.4 1429.5 431.7 1436.8 431.2 1444.8 431.4 1450.5 431.7M1406.1 438.3 1413 437.9 1420.1 437.1 1426.8 437.3 1434.2 436.9 1440.6 437.2 1448.1 437.3 1455.2 438.1M1402.8 443.4 1409.9 444.4 1416.4 444.2 1422.1 444.6 1430.1 443.9 1436.7 444.5 1444.6 444.6 1450.4 443.7M1405 449.9 1412.2 449.7 1420.1 450.1 1425.6 449.8 1434 450 1440.4 450.3 1448.1 451.2 1454.1 450.7M1402.2 417.7 1406.2 424.2 1408.9 418.3 1411.8 424.9 1416.5 417.4 1419.2 424 1422.4 418.7 1426.3 425 1429.2 418.5 1434.2 424.6 1436.7 417.6 1439.5 424.9 1443.5 418 1447.7 425.1 1452 417.4 1455.4 424.2M1402.7 431.5 1406.2 424.2 1408.5 430.8 1411.8 424.9 1415.7 430.8 1419.2 424 1422.8 430.4 1426.3 425 1429.5 431.7 1434.2 424.6 1436.8 431.2 1439.5 424.9 1444.8 431.4 1447.7 425.1 1450.5 431.7 1455.4 424.2M1402.7 431.5 1406.1 438.3 1408.5 430.8 1413 437.9 1415.7 430.8 1420.1 437.1 1422.8 430.4 1426.8 437.3 1429.5 431.7 1434.2 436.9 1436.8 431.2 1440.6 437.2 1444.8 431.4 1448.1 437.3 1450.5 431.7 1455.2 438.1M1402.8 443.4 1406.1 438.3 1409.9 444.4 1413 437.9 1416.4 444.2 1420.1 437.1 1422.1 444.6 1426.8 437.3 1430.1 443.9 1434.2 436.9 1436.7 444.5 1440.6 437.2 1444.6 444.6 1448.1 437.3 1450.4 443.7 1455.2 438.1M1402.8 443.4 1405 449.9 1409.9 444.4 1412.2 449.7 1416.4 444.2 1420.1 450.1 1422.1 444.6 1425.6 449.8 1430.1 443.9 1434 450 1436.7 444.5 1440.4 450.3 1444.6 444.6 1448.1 451.2 1450.4 443.7 1454.1 450.7" fill="none" stroke="#000" stroke-width="0.85" stroke-opacity="0.8"/>
<path d="M1409 424 Q1429 418 1449 424 V444 H1409 Z" fill="none" stroke="#111" stroke-width="1"/>
<clipPath id="c16"><path d="M1071.5 446.5 C1100 441 1136 437 1170 435.5 C1212 434 1289 433.5 1320 435 C1365 437.5 1390 440 1409 442.7 L1398 463.7 C1370 467 1346 468.4 1310 469.6 C1270 470.4 1230 468.5 1193.6 465.6 C1150 461 1117 456 1071.5 446.5 Z"/></clipPath>
<path d="M1071.5 446.5 C1100 441 1136 437 1170 435.5 C1212 434 1289 433.5 1320 435 C1365 437.5 1390 440 1409 442.7 L1398 463.7 C1370 467 1346 468.4 1310 469.6 C1270 470.4 1230 468.5 1193.6 465.6 C1150 461 1117 456 1071.5 446.5 Z" fill="#aca890"/>
<path clip-path="url(#c16)" d="M1060.5 433 1071.5 433.2 1081.8 433.4 1093.1 432.6 1104.1 433.3 1115 433 1125.9 433.4 1137.2 432.7 1147.8 432.9 1159.6 433.2 1169.5 433.4 1180.4 433.1 1191.9 433.2 1202.9 432.6 1214 433.3 1225.3 432.9 1235.7 433.2 1247.4 432.7 1258.5 433.5 1268.9 432.9 1280.3 433.4 1290.6 432.8 1301.8 433.2 1312.6 433 1324 433.2 1334.6 433.4 1346.6 433.1 1357.4 432.7 1368.5 433 1379.3 433.4 1389.8 433.4 1400.6 432.5 1412 433.4M1066 438.4 1076.5 438.4 1087.6 437.7 1098.7 438.3 1109.4 438.1 1120.2 437.8 1131.4 438 1142.5 437.6 1152.9 437.8 1164.8 438.2 1175.2 437.8 1186.5 437.7 1197.6 438.4 1208.1 438.1 1219.8 438.2 1230.8 438.2 1241.2 438.3 1253 437.6 1264 437.9 1274 437.6 1285.9 438.2 1296.1 438 1307.7 438.5 1318.3 438.3 1329.2 437.7 1340.1 437.9 1351.6 437.8 1362.1 437.7 1373 437.7 1384.3 438 1395.1 438 1406.4 438.5 1417.5 438.4M1060 442.7 1071.1 442.7 1081.6 442.6 1093.2 443.4 1103.9 442.9 1114.9 442.9 1126.2 442.9 1136.6 443.3 1148.1 442.5 1159.4 443.2 1169.8 443.1 1181.5 442.9 1191.9 442.8 1203.1 443.2 1214.3 443.4 1224.6 442.9 1236.4 443.3 1247.1 443.2 1257.8 443.4 1269.1 442.9 1279.6 442.6 1291.5 443.3 1301.4 442.8 1313 443 1323.8 443.4 1334.8 443 1346.5 443.1 1357 442.8 1367.9 443.1 1379.3 442.8 1389.8 442.9 1400.8 443.4 1412 442.8M1065.3 448.3 1076.1 448.2 1086.9 447.7 1098 448.3 1109.1 447.7 1120 447.8 1131.8 448.2 1143 448.4 1153.6 448.4 1164 448.4 1175.4 447.7 1186.8 448.3 1197.4 447.6 1208.9 448.2 1219.6 448.5 1229.9 447.6 1241 447.5 1252.7 448.1 1263 447.7 1274.1 448.1 1285.7 448.5 1296.3 448.5 1307.4 447.9 1318.2 447.7 1330.1 448.5 1340.7 447.7 1351.1 447.7 1362.3 448.2 1373 448 1384.7 447.6 1395.4 448.3 1406.6 448 1418 448.1M1059.8 452.9 1071.5 453.3 1082.5 453.1 1092.6 452.7 1103.9 453.2 1114.4 453.3 1126.3 453 1136.4 453.3 1147.9 453.2 1159.1 453.2 1169.9 453.4 1181.5 453.4 1192.1 452.8 1202.9 452.8 1214.5 453.3 1225.3 453.3 1236.6 453.2 1246.8 453.2 1257.7 453.1 1268.6 453.3 1280 452.8 1291.5 452.6 1302.5 453.2 1312.6 453.3 1324.1 453.4 1335.1 452.9 1346.5 452.6 1357.3 452.6 1367.7 452.6 1379.4 452.9 1390.3 452.8 1401.3 453.1 1411.5 453M1065.8 457.7 1076.7 457.8 1087.3 458.4 1099 458.5 1109.4 458.1 1120.9 458.2 1131.4 458.3 1142.4 458.4 1153.5 457.6 1164.8 457.7 1175.7 457.6 1187.1 458 1197.8 457.6 1208.7 457.9 1219.2 458.3 1229.9 458 1241 458.3 1253 457.6 1263.5 458 1274.8 458.2 1285.3 458.4 1296.1 457.7 1307.9 457.6 1318.1 458 1329.3 457.7 1341 458 1351.8 457.8 1363 457.7 1374 458.1 1385.1 458.3 1395.7 458 1406.9 457.9 1417 458.4M1060.4 463.2 1071.3 462.7 1082 463.3 1093.6 463.4 1103.6 463.2 1115.1 462.9 1125.6 462.7 1137 463 1147.7 462.9 1159.1 463.3 1170.1 462.7 1181.5 462.9 1192.6 463.5 1202.6 463.1 1214.6 462.9 1225.1 462.8 1235.4 462.7 1246.5 462.8 1258.2 463.1 1269.5 463.2 1279.8 463.4 1291.2 463 1302.4 463.2 1312.8 463.1 1323.8 463.5 1334.7 463.5 1345.5 462.5 1357.1 462.7 1368 462.6 1379.4 463.2 1390.2 463.4 1401.6 463.2 1412.3 462.5M1065 467.9 1077.1 467.8 1087.6 467.5 1098.4 468.4 1109.6 468.3 1119.9 467.7 1131.1 468.3 1142 468.4 1153.2 468.4 1164.5 467.8 1176.1 467.9 1186.7 467.6 1197.9 468.5 1208 468.2 1219.2 467.7 1230.3 468.2 1242 468.5 1253.1 468.1 1263.7 467.7 1274.8 468 1285.3 468.4 1296.2 467.7 1307.1 467.7 1318.6 468.3 1329.1 468 1340.6 468.1 1351.4 468 1361.9 467.6 1373.4 467.7 1384.8 467.8 1395.9 467.8 1406 468 1417.4 467.8M1060.3 472.7 1071.2 473.3 1081.9 473 1093.5 473.1 1103.6 472.6 1114.5 472.8 1125.5 473.1 1136.9 472.8 1148 473.4 1158.7 472.7 1169.8 472.8 1181.5 473.2 1191.9 472.7 1202.5 472.6 1214.4 473.1 1224.6 473.1 1235.5 473 1246.8 472.6 1258.3 473.2 1269 472.7 1280.2 472.9 1291.2 472.6 1302.5 472.5 1312.7 472.9 1323.6 472.6 1335.2 473.5 1345.8 472.8 1357.2 472.7 1367.9 473.2 1378.9 472.7 1389.5 473 1401.6 473.4 1411.5 473M1060.5 433 1066 438.4 1071.5 433.2 1076.5 438.4 1081.8 433.4 1087.6 437.7 1093.1 432.6 1098.7 438.3 1104.1 433.3 1109.4 438.1 1115 433 1120.2 437.8 1125.9 433.4 1131.4 438 1137.2 432.7 1142.5 437.6 1147.8 432.9 1152.9 437.8 1159.6 433.2 1164.8 438.2 1169.5 433.4 1175.2 437.8 1180.4 433.1 1186.5 437.7 1191.9 433.2 1197.6 438.4 1202.9 432.6 1208.1 438.1 1214 433.3 1219.8 438.2 1225.3 432.9 1230.8 438.2 1235.7 433.2 1241.2 438.3 1247.4 432.7 1253 437.6 1258.5 433.5 1264 437.9 1268.9 432.9 1274 437.6 1280.3 433.4 1285.9 438.2 1290.6 432.8 1296.1 438 1301.8 433.2 1307.7 438.5 1312.6 433 1318.3 438.3 1324 433.2 1329.2 437.7 1334.6 433.4 1340.1 437.9 1346.6 433.1 1351.6 437.8 1357.4 432.7 1362.1 437.7 1368.5 433 1373 437.7 1379.3 433.4 1384.3 438 1389.8 433.4 1395.1 438 1400.6 432.5 1406.4 438.5 1412 433.4 1417.5 438.4M1060 442.7 1066 438.4 1071.1 442.7 1076.5 438.4 1081.6 442.6 1087.6 437.7 1093.2 443.4 1098.7 438.3 1103.9 442.9 1109.4 438.1 1114.9 442.9 1120.2 437.8 1126.2 442.9 1131.4 438 1136.6 443.3 1142.5 437.6 1148.1 442.5 1152.9 437.8 1159.4 443.2 1164.8 438.2 1169.8 443.1 1175.2 437.8 1181.5 442.9 1186.5 437.7 1191.9 442.8 1197.6 438.4 1203.1 443.2 1208.1 438.1 1214.3 443.4 1219.8 438.2 1224.6 442.9 1230.8 438.2 1236.4 443.3 1241.2 438.3 1247.1 443.2 1253 437.6 1257.8 443.4 1264 437.9 1269.1 442.9 1274 437.6 1279.6 442.6 1285.9 438.2 1291.5 443.3 1296.1 438 1301.4 442.8 1307.7 438.5 1313 443 1318.3 438.3 1323.8 443.4 1329.2 437.7 1334.8 443 1340.1 437.9 1346.5 443.1 1351.6 437.8 1357 442.8 1362.1 437.7 1367.9 443.1 1373 437.7 1379.3 442.8 1384.3 438 1389.8 442.9 1395.1 438 1400.8 443.4 1406.4 438.5 1412 442.8 1417.5 438.4M1060 442.7 1065.3 448.3 1071.1 442.7 1076.1 448.2 1081.6 442.6 1086.9 447.7 1093.2 443.4 1098 448.3 1103.9 442.9 1109.1 447.7 1114.9 442.9 1120 447.8 1126.2 442.9 1131.8 448.2 1136.6 443.3 1143 448.4 1148.1 442.5 1153.6 448.4 1159.4 443.2 1164 448.4 1169.8 443.1 1175.4 447.7 1181.5 442.9 1186.8 448.3 1191.9 442.8 1197.4 447.6 1203.1 443.2 1208.9 448.2 1214.3 443.4 1219.6 448.5 1224.6 442.9 1229.9 447.6 1236.4 443.3 1241 447.5 1247.1 443.2 1252.7 448.1 1257.8 443.4 1263 447.7 1269.1 442.9 1274.1 448.1 1279.6 442.6 1285.7 448.5 1291.5 443.3 1296.3 448.5 1301.4 442.8 1307.4 447.9 1313 443 1318.2 447.7 1323.8 443.4 1330.1 448.5 1334.8 443 1340.7 447.7 1346.5 443.1 1351.1 447.7 1357 442.8 1362.3 448.2 1367.9 443.1 1373 448 1379.3 442.8 1384.7 447.6 1389.8 442.9 1395.4 448.3 1400.8 443.4 1406.6 448 1412 442.8 1418 448.1M1059.8 452.9 1065.3 448.3 1071.5 453.3 1076.1 448.2 1082.5 453.1 1086.9 447.7 1092.6 452.7 1098 448.3 1103.9 453.2 1109.1 447.7 1114.4 453.3 1120 447.8 1126.3 453 1131.8 448.2 1136.4 453.3 1143 448.4 1147.9 453.2 1153.6 448.4 1159.1 453.2 1164 448.4 1169.9 453.4 1175.4 447.7 1181.5 453.4 1186.8 448.3 1192.1 452.8 1197.4 447.6 1202.9 452.8 1208.9 448.2 1214.5 453.3 1219.6 448.5 1225.3 453.3 1229.9 447.6 1236.6 453.2 1241 447.5 1246.8 453.2 1252.7 448.1 1257.7 453.1 1263 447.7 1268.6 453.3 1274.1 448.1 1280 452.8 1285.7 448.5 1291.5 452.6 1296.3 448.5 1302.5 453.2 1307.4 447.9 1312.6 453.3 1318.2 447.7 1324.1 453.4 1330.1 448.5 1335.1 452.9 1340.7 447.7 1346.5 452.6 1351.1 447.7 1357.3 452.6 1362.3 448.2 1367.7 452.6 1373 448 1379.4 452.9 1384.7 447.6 1390.3 452.8 1395.4 448.3 1401.3 453.1 1406.6 448 1411.5 453 1418 448.1M1059.8 452.9 1065.8 457.7 1071.5 453.3 1076.7 457.8 1082.5 453.1 1087.3 458.4 1092.6 452.7 1099 458.5 1103.9 453.2 1109.4 458.1 1114.4 453.3 1120.9 458.2 1126.3 453 1131.4 458.3 1136.4 453.3 1142.4 458.4 1147.9 453.2 1153.5 457.6 1159.1 453.2 1164.8 457.7 1169.9 453.4 1175.7 457.6 1181.5 453.4 1187.1 458 1192.1 452.8 1197.8 457.6 1202.9 452.8 1208.7 457.9 1214.5 453.3 1219.2 458.3 1225.3 453.3 1229.9 458 1236.6 453.2 1241 458.3 1246.8 453.2 1253 457.6 1257.7 453.1 1263.5 458 1268.6 453.3 1274.8 458.2 1280 452.8 1285.3 458.4 1291.5 452.6 1296.1 457.7 1302.5 453.2 1307.9 457.6 1312.6 453.3 1318.1 458 1324.1 453.4 1329.3 457.7 1335.1 452.9 1341 458 1346.5 452.6 1351.8 457.8 1357.3 452.6 1363 457.7 1367.7 452.6 1374 458.1 1379.4 452.9 1385.1 458.3 1390.3 452.8 1395.7 458 1401.3 453.1 1406.9 457.9 1411.5 453 1417 458.4M1060.4 463.2 1065.8 457.7 1071.3 462.7 1076.7 457.8 1082 463.3 1087.3 458.4 1093.6 463.4 1099 458.5 1103.6 463.2 1109.4 458.1 1115.1 462.9 1120.9 458.2 1125.6 462.7 1131.4 458.3 1137 463 1142.4 458.4 1147.7 462.9 1153.5 457.6 1159.1 463.3 1164.8 457.7 1170.1 462.7 1175.7 457.6 1181.5 462.9 1187.1 458 1192.6 463.5 1197.8 457.6 1202.6 463.1 1208.7 457.9 1214.6 462.9 1219.2 458.3 1225.1 462.8 1229.9 458 1235.4 462.7 1241 458.3 1246.5 462.8 1253 457.6 1258.2 463.1 1263.5 458 1269.5 463.2 1274.8 458.2 1279.8 463.4 1285.3 458.4 1291.2 463 1296.1 457.7 1302.4 463.2 1307.9 457.6 1312.8 463.1 1318.1 458 1323.8 463.5 1329.3 457.7 1334.7 463.5 1341 458 1345.5 462.5 1351.8 457.8 1357.1 462.7 1363 457.7 1368 462.6 1374 458.1 1379.4 463.2 1385.1 458.3 1390.2 463.4 1395.7 458 1401.6 463.2 1406.9 457.9 1412.3 462.5 1417 458.4M1060.4 463.2 1065 467.9 1071.3 462.7 1077.1 467.8 1082 463.3 1087.6 467.5 1093.6 463.4 1098.4 468.4 1103.6 463.2 1109.6 468.3 1115.1 462.9 1119.9 467.7 1125.6 462.7 1131.1 468.3 1137 463 1142 468.4 1147.7 462.9 1153.2 468.4 1159.1 463.3 1164.5 467.8 1170.1 462.7 1176.1 467.9 1181.5 462.9 1186.7 467.6 1192.6 463.5 1197.9 468.5 1202.6 463.1 1208 468.2 1214.6 462.9 1219.2 467.7 1225.1 462.8 1230.3 468.2 1235.4 462.7 1242 468.5 1246.5 462.8 1253.1 468.1 1258.2 463.1 1263.7 467.7 1269.5 463.2 1274.8 468 1279.8 463.4 1285.3 468.4 1291.2 463 1296.2 467.7 1302.4 463.2 1307.1 467.7 1312.8 463.1 1318.6 468.3 1323.8 463.5 1329.1 468 1334.7 463.5 1340.6 468.1 1345.5 462.5 1351.4 468 1357.1 462.7 1361.9 467.6 1368 462.6 1373.4 467.7 1379.4 463.2 1384.8 467.8 1390.2 463.4 1395.9 467.8 1401.6 463.2 1406 468 1412.3 462.5 1417.4 467.8M1060.3 472.7 1065 467.9 1071.2 473.3 1077.1 467.8 1081.9 473 1087.6 467.5 1093.5 473.1 1098.4 468.4 1103.6 472.6 1109.6 468.3 1114.5 472.8 1119.9 467.7 1125.5 473.1 1131.1 468.3 1136.9 472.8 1142 468.4 1148 473.4 1153.2 468.4 1158.7 472.7 1164.5 467.8 1169.8 472.8 1176.1 467.9 1181.5 473.2 1186.7 467.6 1191.9 472.7 1197.9 468.5 1202.5 472.6 1208 468.2 1214.4 473.1 1219.2 467.7 1224.6 473.1 1230.3 468.2 1235.5 473 1242 468.5 1246.8 472.6 1253.1 468.1 1258.3 473.2 1263.7 467.7 1269 472.7 1274.8 468 1280.2 472.9 1285.3 468.4 1291.2 472.6 1296.2 467.7 1302.5 472.5 1307.1 467.7 1312.7 472.9 1318.6 468.3 1323.6 472.6 1329.1 468 1335.2 473.5 1340.6 468.1 1345.8 472.8 1351.4 468 1357.2 472.7 1361.9 467.6 1367.9 473.2 1373.4 467.7 1378.9 472.7 1384.8 467.8 1389.5 473 1395.9 467.8 1401.6 473.4 1406 468 1411.5 473 1417.4 467.8" fill="none" stroke="#000" stroke-width="0.85" stroke-opacity="0.75"/>
<path d="M1071.5 446.5 C1100 441 1136 437 1170 435.5 C1212 434 1289 433.5 1320 435 C1365 437.5 1390 440 1409 442.7 L1398 463.7 C1370 467 1346 468.4 1310 469.6 C1270 470.4 1230 468.5 1193.6 465.6 C1150 461 1117 456 1071.5 446.5 Z" fill="none" stroke="#222" stroke-width="0.9"/>
<path d="M1072 446.5 C1095 442 1120 440 1150 443 C1120 452 1095 451 1072 446.5Z" fill="#000" fill-opacity="0.5"/>
<clipPath id="c17"><path d="M1460 448.6 C1500 448 1551 448.2 1580 449.5 C1631 453 1680 457 1729.5 462.2 C1680 467 1640 471 1583 472.5 C1540 472 1500 468 1460 462.2 Z"/></clipPath>
<path d="M1460 448.6 C1500 448 1551 448.2 1580 449.5 C1631 453 1680 457 1729.5 462.2 C1680 467 1640 471 1583 472.5 C1540 472 1500 468 1460 462.2 Z" fill="#aca890"/>
<path clip-path="url(#c17)" d="M1452 447.8 1460.2 448 1468.3 447.8 1476.4 448.3 1484 447.7 1492 447.7 1500.2 448.2 1508.1 448.4 1515.5 448.2 1524.3 447.7 1531.8 447.6 1540.1 448.2 1547.8 448.2 1555.9 448.2 1563.8 448.4 1571.9 447.6 1579.6 448.2 1588.4 448.1 1595.7 448.3 1604.2 447.7 1611.9 448.1 1619.5 447.6 1627.9 448.3 1636.5 447.9 1644.4 448.2 1652.4 448.1 1660.5 448.1 1668.4 448.1 1675.7 448 1684 447.9 1691.9 448 1700.1 447.8 1707.8 448 1716 447.9 1724.2 447.7 1732 447.8M1456.3 452.4 1464.3 452.2 1471.7 452.5 1480 452.1 1487.8 452.1 1496.2 452.5 1504 452.4 1511.7 452.2 1519.9 452 1527.9 452.4 1536.2 452 1543.7 452.4 1552.2 452.3 1560.1 452.4 1567.8 451.8 1575.9 451.8 1584.5 452.2 1592.2 452.6 1600.3 452 1607.8 451.9 1616.3 452.4 1624 452.1 1631.8 452.2 1640.2 452.5 1648.3 452.5 1655.9 452.1 1663.8 452.6 1671.7 451.9 1679.8 452.5 1688.4 452.1 1696.4 452.5 1703.9 452 1712.3 452.1 1719.6 452.5 1727.9 452.1 1736.1 452M1451.5 456.3 1459.9 456 1467.9 456.6 1475.8 456.5 1484.1 456.2 1491.5 456.5 1500.1 456.2 1507.7 456.7 1516.4 456.2 1524.1 456.5 1531.8 456 1539.8 456.5 1548.1 456.4 1555.6 456.2 1563.8 456.3 1571.9 456.7 1579.6 456.8 1587.7 456.7 1595.7 456.5 1603.9 456 1612.3 456.6 1619.8 456.6 1628 456.8 1635.6 456.3 1643.7 456.5 1652.3 456.7 1660 456.3 1668.3 456.1 1675.8 456.6 1683.9 456.8 1691.6 456.4 1699.7 456 1707.6 456.1 1715.9 456.3 1724 456.2 1732.2 456.4M1456.5 460.3 1464 460.6 1471.9 460.9 1479.7 460.9 1487.9 460.5 1496.1 460.7 1503.8 460.3 1512.5 460.5 1519.6 460.7 1528 460.5 1535.8 460.9 1543.8 460.5 1552.5 460.5 1559.9 460.3 1568.2 460.7 1575.9 460.5 1583.7 460.8 1592 460.9 1599.9 460.8 1607.5 460.4 1616.5 460.7 1624.2 460.6 1632 460.4 1639.7 460.7 1648.2 460.4 1656.1 460.3 1664.1 460.3 1672 460.5 1680.1 460.3 1688 460.7 1695.6 460.4 1704.2 460.6 1712.1 460.8 1720.1 460.4 1727.9 460.9 1736.1 460.8M1451.9 464.8 1460.5 465.1 1468.2 464.5 1476.1 464.4 1484.4 465.2 1492.2 464.6 1500.3 464.5 1508.3 464.8 1515.5 465.1 1523.9 465.1 1532.2 464.8 1540.4 464.6 1548.4 464.7 1555.5 464.7 1563.6 464.5 1572.1 464.5 1579.7 464.6 1587.8 465.1 1596.4 465.1 1604.5 464.8 1612.3 464.6 1620.4 465 1628.2 464.6 1635.6 465.1 1644.1 464.9 1652.4 464.5 1660.2 464.8 1668.3 464.8 1675.7 465.2 1683.8 465 1692.3 464.6 1700.2 464.7 1707.7 464.6 1716.5 464.7 1724 464.8 1731.5 465M1456.2 469.3 1463.9 468.8 1471.8 469.2 1480.2 468.9 1488 468.7 1496.4 469 1504 469.2 1511.7 469.2 1519.9 469.2 1527.6 468.8 1536.1 469 1543.9 469.1 1551.7 468.9 1559.5 469.2 1567.8 469.3 1576.1 469.1 1584.1 468.7 1592.3 468.8 1600.4 469.2 1608.2 469.3 1615.9 469.1 1624.5 468.8 1631.6 468.9 1640 468.7 1647.7 469.3 1655.9 468.7 1663.7 469.1 1671.7 469 1680 469 1688 469.3 1695.5 469.3 1703.7 468.6 1712.3 469.1 1720 468.8 1728.3 468.8 1736.2 468.8M1452.1 473.3 1459.9 473.2 1467.6 473.3 1476.2 472.9 1484.1 473.4 1491.6 473.5 1500.4 472.8 1507.7 472.9 1515.8 472.9 1524 473 1531.8 473.2 1539.9 473.4 1548.2 472.9 1555.7 472.8 1563.8 472.9 1572.2 473.4 1580.5 473 1587.5 473.4 1595.9 473.5 1603.9 473 1611.6 473.6 1620 473.2 1627.9 473.4 1636.3 473.2 1643.7 473.1 1652.4 473.1 1660.2 473.2 1668 473.3 1675.7 473.2 1684.4 472.9 1691.9 473.5 1700.5 472.8 1708.1 473.3 1716.3 473.2 1723.6 473 1732.2 473.4M1452 447.8 1456.3 452.4 1460.2 448 1464.3 452.2 1468.3 447.8 1471.7 452.5 1476.4 448.3 1480 452.1 1484 447.7 1487.8 452.1 1492 447.7 1496.2 452.5 1500.2 448.2 1504 452.4 1508.1 448.4 1511.7 452.2 1515.5 448.2 1519.9 452 1524.3 447.7 1527.9 452.4 1531.8 447.6 1536.2 452 1540.1 448.2 1543.7 452.4 1547.8 448.2 1552.2 452.3 1555.9 448.2 1560.1 452.4 1563.8 448.4 1567.8 451.8 1571.9 447.6 1575.9 451.8 1579.6 448.2 1584.5 452.2 1588.4 448.1 1592.2 452.6 1595.7 448.3 1600.3 452 1604.2 447.7 1607.8 451.9 1611.9 448.1 1616.3 452.4 1619.5 447.6 1624 452.1 1627.9 448.3 1631.8 452.2 1636.5 447.9 1640.2 452.5 1644.4 448.2 1648.3 452.5 1652.4 448.1 1655.9 452.1 1660.5 448.1 1663.8 452.6 1668.4 448.1 1671.7 451.9 1675.7 448 1679.8 452.5 1684 447.9 1688.4 452.1 1691.9 448 1696.4 452.5 1700.1 447.8 1703.9 452 1707.8 448 1712.3 452.1 1716 447.9 1719.6 452.5 1724.2 447.7 1727.9 452.1 1732 447.8 1736.1 452M1451.5 456.3 1456.3 452.4 1459.9 456 1464.3 452.2 1467.9 456.6 1471.7 452.5 1475.8 456.5 1480 452.1 1484.1 456.2 1487.8 452.1 1491.5 456.5 1496.2 452.5 1500.1 456.2 1504 452.4 1507.7 456.7 1511.7 452.2 1516.4 456.2 1519.9 452 1524.1 456.5 1527.9 452.4 1531.8 456 1536.2 452 1539.8 456.5 1543.7 452.4 1548.1 456.4 1552.2 452.3 1555.6 456.2 1560.1 452.4 1563.8 456.3 1567.8 451.8 1571.9 456.7 1575.9 451.8 1579.6 456.8 1584.5 452.2 1587.7 456.7 1592.2 452.6 1595.7 456.5 1600.3 452 1603.9 456 1607.8 451.9 1612.3 456.6 1616.3 452.4 1619.8 456.6 1624 452.1 1628 456.8 1631.8 452.2 1635.6 456.3 1640.2 452.5 1643.7 456.5 1648.3 452.5 1652.3 456.7 1655.9 452.1 1660 456.3 1663.8 452.6 1668.3 456.1 1671.7 451.9 1675.8 456.6 1679.8 452.5 1683.9 456.8 1688.4 452.1 1691.6 456.4 1696.4 452.5 1699.7 456 1703.9 452 1707.6 456.1 1712.3 452.1 1715.9 456.3 1719.6 452.5 1724 456.2 1727.9 452.1 1732.2 456.4 1736.1 452M1451.5 456.3 1456.5 460.3 1459.9 456 1464 460.6 1467.9 456.6 1471.9 460.9 1475.8 456.5 1479.7 460.9 1484.1 456.2 1487.9 460.5 1491.5 456.5 1496.1 460.7 1500.1 456.2 1503.8 460.3 1507.7 456.7 1512.5 460.5 1516.4 456.2 1519.6 460.7 1524.1 456.5 1528 460.5 1531.8 456 1535.8 460.9 1539.8 456.5 1543.8 460.5 1548.1 456.4 1552.5 460.5 1555.6 456.2 1559.9 460.3 1563.8 456.3 1568.2 460.7 1571.9 456.7 1575.9 460.5 1579.6 456.8 1583.7 460.8 1587.7 456.7 1592 460.9 1595.7 456.5 1599.9 460.8 1603.9 456 1607.5 460.4 1612.3 456.6 1616.5 460.7 1619.8 456.6 1624.2 460.6 1628 456.8 1632 460.4 1635.6 456.3 1639.7 460.7 1643.7 456.5 1648.2 460.4 1652.3 456.7 1656.1 460.3 1660 456.3 1664.1 460.3 1668.3 456.1 1672 460.5 1675.8 456.6 1680.1 460.3 1683.9 456.8 1688 460.7 1691.6 456.4 1695.6 460.4 1699.7 456 1704.2 460.6 1707.6 456.1 1712.1 460.8 1715.9 456.3 1720.1 460.4 1724 456.2 1727.9 460.9 1732.2 456.4 1736.1 460.8M1451.9 464.8 1456.5 460.3 1460.5 465.1 1464 460.6 1468.2 464.5 1471.9 460.9 1476.1 464.4 1479.7 460.9 1484.4 465.2 1487.9 460.5 1492.2 464.6 1496.1 460.7 1500.3 464.5 1503.8 460.3 1508.3 464.8 1512.5 460.5 1515.5 465.1 1519.6 460.7 1523.9 465.1 1528 460.5 1532.2 464.8 1535.8 460.9 1540.4 464.6 1543.8 460.5 1548.4 464.7 1552.5 460.5 1555.5 464.7 1559.9 460.3 1563.6 464.5 1568.2 460.7 1572.1 464.5 1575.9 460.5 1579.7 464.6 1583.7 460.8 1587.8 465.1 1592 460.9 1596.4 465.1 1599.9 460.8 1604.5 464.8 1607.5 460.4 1612.3 464.6 1616.5 460.7 1620.4 465 1624.2 460.6 1628.2 464.6 1632 460.4 1635.6 465.1 1639.7 460.7 1644.1 464.9 1648.2 460.4 1652.4 464.5 1656.1 460.3 1660.2 464.8 1664.1 460.3 1668.3 464.8 1672 460.5 1675.7 465.2 1680.1 460.3 1683.8 465 1688 460.7 1692.3 464.6 1695.6 460.4 1700.2 464.7 1704.2 460.6 1707.7 464.6 1712.1 460.8 1716.5 464.7 1720.1 460.4 1724 464.8 1727.9 460.9 1731.5 465 1736.1 460.8M1451.9 464.8 1456.2 469.3 1460.5 465.1 1463.9 468.8 1468.2 464.5 1471.8 469.2 1476.1 464.4 1480.2 468.9 1484.4 465.2 1488 468.7 1492.2 464.6 1496.4 469 1500.3 464.5 1504 469.2 1508.3 464.8 1511.7 469.2 1515.5 465.1 1519.9 469.2 1523.9 465.1 1527.6 468.8 1532.2 464.8 1536.1 469 1540.4 464.6 1543.9 469.1 1548.4 464.7 1551.7 468.9 1555.5 464.7 1559.5 469.2 1563.6 464.5 1567.8 469.3 1572.1 464.5 1576.1 469.1 1579.7 464.6 1584.1 468.7 1587.8 465.1 1592.3 468.8 1596.4 465.1 1600.4 469.2 1604.5 464.8 1608.2 469.3 1612.3 464.6 1615.9 469.1 1620.4 465 1624.5 468.8 1628.2 464.6 1631.6 468.9 1635.6 465.1 1640 468.7 1644.1 464.9 1647.7 469.3 1652.4 464.5 1655.9 468.7 1660.2 464.8 1663.7 469.1 1668.3 464.8 1671.7 469 1675.7 465.2 1680 469 1683.8 465 1688 469.3 1692.3 464.6 1695.5 469.3 1700.2 464.7 1703.7 468.6 1707.7 464.6 1712.3 469.1 1716.5 464.7 1720 468.8 1724 464.8 1728.3 468.8 1731.5 465 1736.2 468.8M1452.1 473.3 1456.2 469.3 1459.9 473.2 1463.9 468.8 1467.6 473.3 1471.8 469.2 1476.2 472.9 1480.2 468.9 1484.1 473.4 1488 468.7 1491.6 473.5 1496.4 469 1500.4 472.8 1504 469.2 1507.7 472.9 1511.7 469.2 1515.8 472.9 1519.9 469.2 1524 473 1527.6 468.8 1531.8 473.2 1536.1 469 1539.9 473.4 1543.9 469.1 1548.2 472.9 1551.7 468.9 1555.7 472.8 1559.5 469.2 1563.8 472.9 1567.8 469.3 1572.2 473.4 1576.1 469.1 1580.5 473 1584.1 468.7 1587.5 473.4 1592.3 468.8 1595.9 473.5 1600.4 469.2 1603.9 473 1608.2 469.3 1611.6 473.6 1615.9 469.1 1620 473.2 1624.5 468.8 1627.9 473.4 1631.6 468.9 1636.3 473.2 1640 468.7 1643.7 473.1 1647.7 469.3 1652.4 473.1 1655.9 468.7 1660.2 473.2 1663.7 469.1 1668 473.3 1671.7 469 1675.7 473.2 1680 469 1684.4 472.9 1688 469.3 1691.9 473.5 1695.5 469.3 1700.5 472.8 1703.7 468.6 1708.1 473.3 1712.3 469.1 1716.3 473.2 1720 468.8 1723.6 473 1728.3 468.8 1732.2 473.4 1736.2 468.8" fill="none" stroke="#000" stroke-width="0.8" stroke-opacity="0.75"/>
<path d="M1460 448.6 C1500 448 1551 448.2 1580 449.5 C1631 453 1680 457 1729.5 462.2 C1680 467 1640 471 1583 472.5 C1540 472 1500 468 1460 462.2 Z" fill="none" stroke="#222" stroke-width="0.9"/>
<path d="M1729.5 462.2 C1700 459 1670 458 1640 460 C1670 465 1700 465 1729.5 462.2Z" fill="#000" fill-opacity="0.45"/>
<clipPath id="c18"><path d="M1397 447 Q1428.5 440 1460 447 V476 H1397 Z"/></clipPath>
<path d="M1397 447 Q1428.5 440 1460 447 V476 H1397 Z" fill="#e4ddbd"/>
<path clip-path="url(#c18)" d="M1385.9 440.4 1397.6 440.5 1405.3 439.8 1416.4 440.3 1426.4 438.9 1437.6 439.4 1448 439.4 1457.2 440.9 1465.6 440.7M1390.4 449.8 1400.3 449.1 1411.5 447.6 1421.6 448.5 1431.7 447.4 1442.1 447.9 1453.7 448.2 1461.8 447.7 1473.7 448M1387.5 458 1396.6 457.7 1406.2 455.9 1415.4 456.9 1428.3 456.1 1436.8 457.8 1446.2 456 1457.1 456.8 1468.6 458.1M1391.1 465.7 1401.7 464.2 1411.8 466.7 1421.3 465.7 1432.8 464.2 1443.5 464.4 1451.3 466.1 1460.3 465.1 1470.7 465.4M1385.3 473 1396 472.8 1405.5 473.1 1417.1 473 1428.2 473.8 1436.1 473.3 1448.2 472.7 1457.9 472.8 1468.6 473.7M1392.4 483.5 1400.6 481.2 1412.7 482.8 1422.8 481.9 1432 481.6 1441.8 481.9 1452.3 481.9 1461.2 482.9 1470.5 483.4M1385.9 440.4 1390.4 449.8 1397.6 440.5 1400.3 449.1 1405.3 439.8 1411.5 447.6 1416.4 440.3 1421.6 448.5 1426.4 438.9 1431.7 447.4 1437.6 439.4 1442.1 447.9 1448 439.4 1453.7 448.2 1457.2 440.9 1461.8 447.7 1465.6 440.7 1473.7 448M1387.5 458 1390.4 449.8 1396.6 457.7 1400.3 449.1 1406.2 455.9 1411.5 447.6 1415.4 456.9 1421.6 448.5 1428.3 456.1 1431.7 447.4 1436.8 457.8 1442.1 447.9 1446.2 456 1453.7 448.2 1457.1 456.8 1461.8 447.7 1468.6 458.1 1473.7 448M1387.5 458 1391.1 465.7 1396.6 457.7 1401.7 464.2 1406.2 455.9 1411.8 466.7 1415.4 456.9 1421.3 465.7 1428.3 456.1 1432.8 464.2 1436.8 457.8 1443.5 464.4 1446.2 456 1451.3 466.1 1457.1 456.8 1460.3 465.1 1468.6 458.1 1470.7 465.4M1385.3 473 1391.1 465.7 1396 472.8 1401.7 464.2 1405.5 473.1 1411.8 466.7 1417.1 473 1421.3 465.7 1428.2 473.8 1432.8 464.2 1436.1 473.3 1443.5 464.4 1448.2 472.7 1451.3 466.1 1457.9 472.8 1460.3 465.1 1468.6 473.7 1470.7 465.4M1385.3 473 1392.4 483.5 1396 472.8 1400.6 481.2 1405.5 473.1 1412.7 482.8 1417.1 473 1422.8 481.9 1428.2 473.8 1432 481.6 1436.1 473.3 1441.8 481.9 1448.2 472.7 1452.3 481.9 1457.9 472.8 1461.2 482.9 1468.6 473.7 1470.5 483.4" fill="none" stroke="#000" stroke-width="0.8" stroke-opacity="0.7"/>
<path d="M1397 447 Q1428.5 440 1460 447 V476 H1397 Z" fill="none" stroke="#333" stroke-width="0.8"/>
</svg>

<!-- axes -->
<svg class="a" style="left:870px;top:830px" width="90" height="80" viewBox="0 0 90 80">
  <line x1="23" y1="38" x2="23" y2="68" stroke="#3cb43c" stroke-width="1.3"/>
  <path d="M19.3 38.5 L23 34 L26.7 38.5Z" fill="#3a963a"/>
  <line x1="26" y1="71.6" x2="57.5" y2="71.6" stroke="#e01010" stroke-width="1.6"/>
  <path d="M57 68 L61.5 71.6 L57 75.2Z" fill="#b01010"/>
  <text x="15.5" y="24.7" font-family="Liberation Sans" font-style="italic" font-weight="bold" font-size="21" fill="#3cb43c">Y</text>
  <text x="62.5" y="73.2" font-family="Liberation Sans" font-style="italic" font-weight="bold" font-size="23" fill="#e01010">X</text>
  <path d="M16.5 50 H32 V53 L19.5 70 H28.5 L28 73 H12.6 V70 L26.3 53 H16.2Z" fill="#7272fa"/>
  <circle cx="23.2" cy="71.5" r="4.2" fill="#7272fa"/>
</svg>
</body></html>
